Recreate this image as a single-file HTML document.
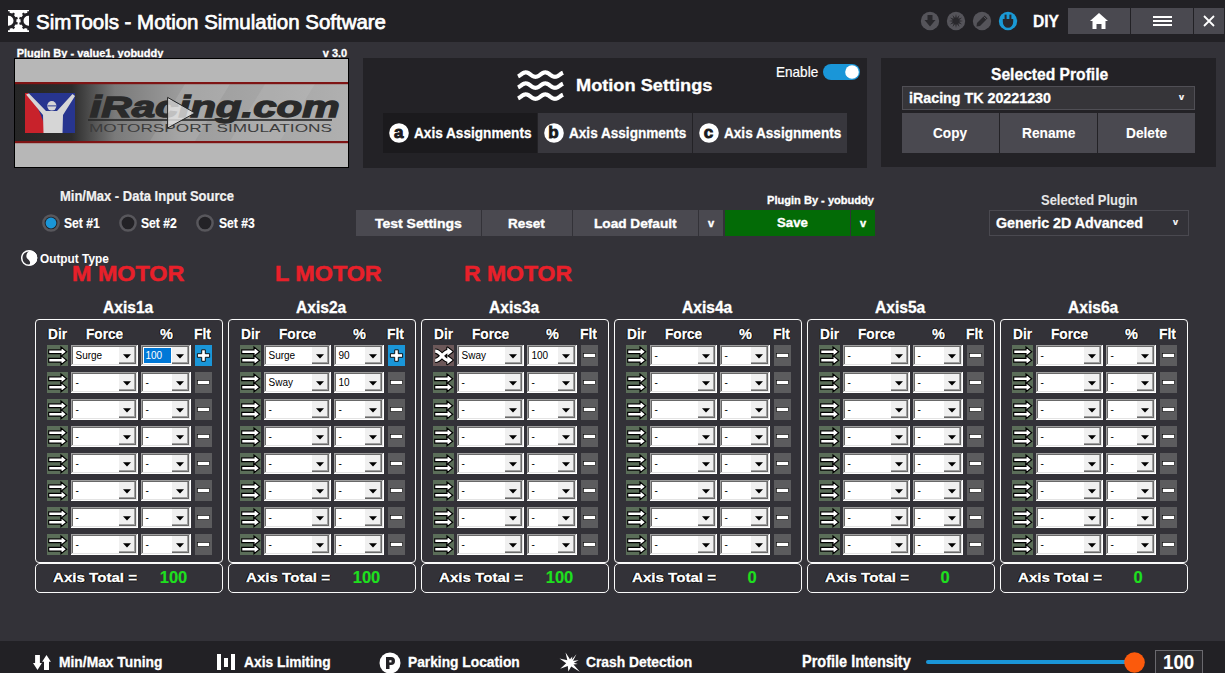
<!DOCTYPE html>
<html><head><meta charset="utf-8"><style>
html,body{margin:0;padding:0;}
body{width:1225px;height:673px;overflow:hidden;position:relative;background:#333238;font-family:"Liberation Sans",sans-serif;}
.a{position:absolute;}
.t{position:absolute;white-space:nowrap;line-height:1;font-weight:700;transform-origin:0 0;}
</style></head><body>
<div class="a" style="left:0px;top:0px;width:1225px;height:42px;background:#222125;"></div>
<svg class="a" style="left:8px;top:10px;" width="21" height="22" viewBox="0 0 21 22"><defs><clipPath id="lc"><rect width="21" height="22"/></clipPath></defs>
<rect width="21" height="22" fill="#fff"/>
<g clip-path="url(#lc)" fill="#222125">
<circle cx="0.5" cy="10.8" r="6.5" fill="none" stroke="#222125" stroke-width="3"/>
<circle cx="20.5" cy="10.8" r="6.5" fill="none" stroke="#222125" stroke-width="3"/>
<rect x="7.20" y="12.13" width="2.4" height="2.4" transform="rotate(17.8 8.40 13.33)"/><rect x="4.21" y="16.29" width="2.4" height="2.4" transform="rotate(53.8 5.41 17.49)"/><rect x="-0.67" y="17.90" width="2.4" height="2.4" transform="rotate(89.8 0.53 19.10)"/><rect x="-5.55" y="16.34" width="2.4" height="2.4" transform="rotate(125.8 -4.35 17.54)"/><rect x="-8.58" y="12.20" width="2.4" height="2.4" transform="rotate(161.8 -7.38 13.40)"/><rect x="-8.60" y="7.07" width="2.4" height="2.4" transform="rotate(197.8 -7.40 8.27)"/><rect x="-5.61" y="2.91" width="2.4" height="2.4" transform="rotate(233.8 -4.41 4.11)"/><rect x="-0.73" y="1.30" width="2.4" height="2.4" transform="rotate(269.8 0.47 2.50)"/><rect x="4.15" y="2.86" width="2.4" height="2.4" transform="rotate(305.8 5.35 4.06)"/><rect x="7.18" y="7.00" width="2.4" height="2.4" transform="rotate(341.8 8.38 8.20)"/><rect x="27.20" y="12.13" width="2.4" height="2.4" transform="rotate(17.8 28.40 13.33)"/><rect x="24.21" y="16.29" width="2.4" height="2.4" transform="rotate(53.8 25.41 17.49)"/><rect x="19.33" y="17.90" width="2.4" height="2.4" transform="rotate(89.8 20.53 19.10)"/><rect x="14.45" y="16.34" width="2.4" height="2.4" transform="rotate(125.8 15.65 17.54)"/><rect x="11.42" y="12.20" width="2.4" height="2.4" transform="rotate(161.8 12.62 13.40)"/><rect x="11.40" y="7.07" width="2.4" height="2.4" transform="rotate(197.8 12.60 8.27)"/><rect x="14.39" y="2.91" width="2.4" height="2.4" transform="rotate(233.8 15.59 4.11)"/><rect x="19.27" y="1.30" width="2.4" height="2.4" transform="rotate(269.8 20.47 2.50)"/><rect x="24.15" y="2.86" width="2.4" height="2.4" transform="rotate(305.8 25.35 4.06)"/><rect x="27.18" y="7.00" width="2.4" height="2.4" transform="rotate(341.8 28.38 8.20)"/>
</g></svg>
<div class="t" style="left:36.00px;top:11px;font-size:21px;color:#fff;font-weight:400;transform:scaleX(0.9736);-webkit-text-stroke:0.75px #fff;">SimTools - Motion Simulation Software</div>
<svg class="a" style="left:920px;top:11px;" width="20" height="20" viewBox="0 0 20 20"><circle cx="10" cy="10" r="9.2" fill="#55545a"/><path d="M7.5 4 H12.5 V9 H15.5 L10 15.5 L4.5 9 H7.5Z" fill="#29282c"/></svg>
<svg class="a" style="left:946px;top:11px;" width="20" height="20" viewBox="0 0 20 20"><circle cx="10" cy="10" r="9.2" fill="#55545a"/><polygon points="17.00,10.00 13.09,10.83 16.06,13.50 12.26,12.26 13.50,16.06 10.83,13.09 10.00,17.00 9.17,13.09 6.50,16.06 7.74,12.26 3.94,13.50 6.91,10.83 3.00,10.00 6.91,9.17 3.94,6.50 7.74,7.74 6.50,3.94 9.17,6.91 10.00,3.00 10.83,6.91 13.50,3.94 12.26,7.74 16.06,6.50 13.09,9.17" fill="#29282c"/></svg>
<svg class="a" style="left:972px;top:11px;" width="20" height="20" viewBox="0 0 20 20"><circle cx="10" cy="10" r="9.2" fill="#55545a"/><path d="M12.5 4.5 L15.5 7.5 L8 15 L4.5 15.5 L5 12Z" fill="#29282c"/><path d="M11.5 5.5 L14.5 8.5" stroke="#55545a" stroke-width="1"/></svg>
<svg class="a" style="left:998px;top:11px;" width="20" height="20" viewBox="0 0 20 20"><circle cx="10" cy="10" r="9.2" fill="#1a9ad6"/><path d="M4.8 8 H15.2 V10.5 A5.2 6 0 0 1 10 16.8 A5.2 6 0 0 1 4.8 10.5Z" fill="#29282c"/><rect x="6.6" y="3.6" width="2" height="5" fill="#29282c"/><rect x="11.4" y="3.6" width="2" height="5" fill="#29282c"/></svg>
<div class="t" style="left:1033.40px;top:13px;font-size:16.5px;color:#fff;transform:scaleX(0.9453);-webkit-text-stroke:0.3px #fff;">DIY</div>
<div class="a" style="left:1068px;top:8px;width:62px;height:26px;background:#4a4950;"></div>
<div class="a" style="left:1131px;top:8px;width:62px;height:26px;background:#4a4950;"></div>
<div class="a" style="left:1194px;top:8px;width:30px;height:26px;background:#4a4950;"></div>
<svg class="a" style="left:1089px;top:12px;" width="20" height="18" viewBox="0 0 20 18"><path d="M10 1 L19 9 H16.5 V17 H12.5 V12 H7.5 V17 H3.5 V9 H1Z" fill="#fff"/></svg>
<div class="a" style="left:1153px;top:16px;width:19px;height:2px;background:#fff;"></div>
<div class="a" style="left:1153px;top:20px;width:19px;height:2px;background:#fff;"></div>
<div class="a" style="left:1153px;top:24px;width:19px;height:2px;background:#fff;"></div>
<svg class="a" style="left:1202px;top:14px;" width="14" height="14" viewBox="0 0 14 14"><path d="M2 2 L12 12 M12 2 L2 12" stroke="#fff" stroke-width="1.8"/></svg>
<div class="t" style="left:16.70px;top:48px;font-size:11px;color:#fff;-webkit-text-stroke:0.3px #fff;">Plugin By - value1, yobuddy</div>
<div class="t" style="left:322.74px;top:48px;font-size:11px;color:#fff;-webkit-text-stroke:0.3px #fff;">v 3.0</div>
<div class="a" style="left:14px;top:58px;width:335px;height:110px;background:#000;"></div>
<svg class="a" style="left:15px;top:59px;" width="333" height="108" viewBox="0 0 333 108"><defs>
<linearGradient id="band" x1="0" x2="1" y1="0" y2="0">
<stop offset="0" stop-color="#262626"/><stop offset="0.17" stop-color="#2c2c2c"/><stop offset="0.3" stop-color="#7a7a7a"/>
<stop offset="0.5" stop-color="#9c9c9c"/><stop offset="0.75" stop-color="#a6a6a6"/><stop offset="1" stop-color="#b0b0b0"/></linearGradient>
</defs>
<rect width="333" height="108" fill="#b7b7b7"/>
<rect x="0" y="24" width="333" height="59" fill="url(#band)"/>
<path d="M170 25 L215 25 L180 82 L135 82Z" fill="#ffffff" opacity="0.10"/>
<path d="M250 25 L300 25 L265 82 L215 82Z" fill="#ffffff" opacity="0.08"/>
<rect x="0" y="23" width="333" height="2.2" fill="#7e1414"/>
<rect x="0" y="82" width="333" height="2.2" fill="#7e1414"/>
<rect x="10" y="34" width="50" height="40" fill="#27358f"/>
<path d="M10 34 H13 Q26 50 31.5 74 H10Z" fill="#c8222b"/>
<path d="M11 35.5 L14 34.5 L31 52 H42 L57.5 35 L60 37 L48 56 L47.5 74 H28.5 L28 56Z" fill="#d6d6d6"/>
<ellipse cx="36.8" cy="46.8" rx="4.6" ry="4.8" fill="#d6d6d6"/>
<rect x="32.5" y="46" width="9" height="1.6" fill="#27358f" opacity="0.6"/>
<text x="74.7" y="57.8" font-family="Liberation Sans" font-weight="700" font-style="italic" font-size="29" textLength="250" lengthAdjust="spacingAndGlyphs" fill="#2a2a2a" stroke="#2a2a2a" stroke-width="1.3">iRacing.com</text>
<rect x="73" y="60.2" width="244" height="1.6" fill="#2a2a2a"/>
<text x="74" y="72.8" font-family="Liberation Sans" font-size="10.8" textLength="243" lengthAdjust="spacingAndGlyphs" fill="#3c3c3c">MOTORSPORT SIMULATIONS</text>
<path d="M152.6 38.4 L180 54 L152.6 69Z" fill="#e6e6e6" fill-opacity="0.8" stroke="#222" stroke-width="1" stroke-linejoin="round"/>
</svg>
<div class="a" style="left:363px;top:58px;width:504px;height:110px;background:#232226;"></div>
<svg class="a" style="left:512px;top:62px;" width="56" height="46" viewBox="0 0 56 46"><polyline points="6.00,14.36 6.50,14.12 7.00,13.85 7.50,13.54 8.00,13.21 8.50,12.87 9.00,12.51 9.50,12.16 10.00,11.82 10.50,11.50 11.00,11.21 11.50,10.95 12.00,10.74 12.50,10.58 13.00,10.46 13.50,10.41 14.00,10.41 14.50,10.46 15.00,10.58 15.50,10.74 16.00,10.95 16.50,11.21 17.00,11.50 17.50,11.82 18.00,12.16 18.50,12.51 19.00,12.87 19.50,13.21 20.00,13.54 20.50,13.85 21.00,14.12 21.50,14.36 22.00,14.55 22.50,14.69 23.00,14.77 23.50,14.80 24.00,14.77 24.50,14.69 25.00,14.55 25.50,14.36 26.00,14.12 26.50,13.85 27.00,13.54 27.50,13.21 28.00,12.87 28.50,12.51 29.00,12.16 29.50,11.82 30.00,11.50 30.50,11.21 31.00,10.95 31.50,10.74 32.00,10.58 32.50,10.46 33.00,10.41 33.50,10.41 34.00,10.46 34.50,10.58 35.00,10.74 35.50,10.95 36.00,11.21 36.50,11.50 37.00,11.82 37.50,12.16 38.00,12.51 38.50,12.87 39.00,13.21 39.50,13.54 40.00,13.85 40.50,14.12 41.00,14.36 41.50,14.55 42.00,14.69 42.50,14.77 43.00,14.80 43.50,14.77 44.00,14.69 44.50,14.55 45.00,14.36 45.50,14.12 46.00,13.85 46.50,13.54 47.00,13.21 47.50,12.87 48.00,12.51 48.50,12.16 49.00,11.82 49.50,11.50 50.00,11.21 50.50,10.95 51.00,10.74" fill="none" stroke="#fff" stroke-width="4.2"/><polyline points="6.00,25.36 6.50,25.12 7.00,24.85 7.50,24.54 8.00,24.21 8.50,23.87 9.00,23.51 9.50,23.16 10.00,22.82 10.50,22.50 11.00,22.21 11.50,21.95 12.00,21.74 12.50,21.58 13.00,21.46 13.50,21.41 14.00,21.41 14.50,21.46 15.00,21.58 15.50,21.74 16.00,21.95 16.50,22.21 17.00,22.50 17.50,22.82 18.00,23.16 18.50,23.51 19.00,23.87 19.50,24.21 20.00,24.54 20.50,24.85 21.00,25.12 21.50,25.36 22.00,25.55 22.50,25.69 23.00,25.77 23.50,25.80 24.00,25.77 24.50,25.69 25.00,25.55 25.50,25.36 26.00,25.12 26.50,24.85 27.00,24.54 27.50,24.21 28.00,23.87 28.50,23.51 29.00,23.16 29.50,22.82 30.00,22.50 30.50,22.21 31.00,21.95 31.50,21.74 32.00,21.58 32.50,21.46 33.00,21.41 33.50,21.41 34.00,21.46 34.50,21.58 35.00,21.74 35.50,21.95 36.00,22.21 36.50,22.50 37.00,22.82 37.50,23.16 38.00,23.51 38.50,23.87 39.00,24.21 39.50,24.54 40.00,24.85 40.50,25.12 41.00,25.36 41.50,25.55 42.00,25.69 42.50,25.77 43.00,25.80 43.50,25.77 44.00,25.69 44.50,25.55 45.00,25.36 45.50,25.12 46.00,24.85 46.50,24.54 47.00,24.21 47.50,23.87 48.00,23.51 48.50,23.16 49.00,22.82 49.50,22.50 50.00,22.21 50.50,21.95 51.00,21.74" fill="none" stroke="#fff" stroke-width="4.2"/><polyline points="6.00,36.36 6.50,36.12 7.00,35.85 7.50,35.54 8.00,35.21 8.50,34.87 9.00,34.51 9.50,34.16 10.00,33.82 10.50,33.50 11.00,33.21 11.50,32.95 12.00,32.74 12.50,32.58 13.00,32.46 13.50,32.41 14.00,32.41 14.50,32.46 15.00,32.58 15.50,32.74 16.00,32.95 16.50,33.21 17.00,33.50 17.50,33.82 18.00,34.16 18.50,34.51 19.00,34.87 19.50,35.21 20.00,35.54 20.50,35.85 21.00,36.12 21.50,36.36 22.00,36.55 22.50,36.69 23.00,36.77 23.50,36.80 24.00,36.77 24.50,36.69 25.00,36.55 25.50,36.36 26.00,36.12 26.50,35.85 27.00,35.54 27.50,35.21 28.00,34.87 28.50,34.51 29.00,34.16 29.50,33.82 30.00,33.50 30.50,33.21 31.00,32.95 31.50,32.74 32.00,32.58 32.50,32.46 33.00,32.41 33.50,32.41 34.00,32.46 34.50,32.58 35.00,32.74 35.50,32.95 36.00,33.21 36.50,33.50 37.00,33.82 37.50,34.16 38.00,34.51 38.50,34.87 39.00,35.21 39.50,35.54 40.00,35.85 40.50,36.12 41.00,36.36 41.50,36.55 42.00,36.69 42.50,36.77 43.00,36.80 43.50,36.77 44.00,36.69 44.50,36.55 45.00,36.36 45.50,36.12 46.00,35.85 46.50,35.54 47.00,35.21 47.50,34.87 48.00,34.51 48.50,34.16 49.00,33.82 49.50,33.50 50.00,33.21 50.50,32.95 51.00,32.74" fill="none" stroke="#fff" stroke-width="4.2"/></svg>
<div class="t" style="left:576.00px;top:77px;font-size:16.5px;color:#fff;transform:scaleX(1.1024);-webkit-text-stroke:0.3px #fff;">Motion Settings</div>
<div class="t" style="left:775.90px;top:65px;font-size:14.5px;color:#fff;font-weight:400;transform:scaleX(0.9346);-webkit-text-stroke:0.2px #fff;">Enable</div>
<div class="a" style="left:823px;top:64px;width:37px;height:16px;background:#1a96d8;border-radius:8px;"></div>
<svg class="a" style="left:838px;top:64px;" width="22" height="16" viewBox="0 0 22 16"><circle cx="14" cy="8" r="6.8" fill="#fff"/></svg>
<div class="a" style="left:383px;top:113px;width:154px;height:40px;background:#1b1a1d;"></div>
<div class="a" style="left:538px;top:113px;width:154px;height:40px;background:#38373d;"></div>
<div class="a" style="left:693px;top:113px;width:154px;height:40px;background:#38373d;"></div>
<svg class="a" style="left:388.9px;top:123px;" width="20" height="20" viewBox="0 0 20 20"><circle cx="10" cy="10" r="9.8" fill="#fff"/></svg>
<div class="t" style="left:394.11px;top:124px;font-size:17px;color:#1b1a1d;-webkit-text-stroke:0.9px #1b1a1d;">a</div>
<svg class="a" style="left:543.5px;top:123px;" width="20" height="20" viewBox="0 0 20 20"><circle cx="10" cy="10" r="9.8" fill="#fff"/></svg>
<div class="t" style="left:548.31px;top:124px;font-size:17px;color:#1b1a1d;-webkit-text-stroke:0.9px #1b1a1d;">b</div>
<svg class="a" style="left:698.5px;top:123px;" width="20" height="20" viewBox="0 0 20 20"><circle cx="10" cy="10" r="9.8" fill="#fff"/></svg>
<div class="t" style="left:703.77px;top:124px;font-size:17px;color:#1b1a1d;-webkit-text-stroke:0.9px #1b1a1d;">c</div>
<div class="t" style="left:413.60px;top:126px;font-size:14.5px;color:#fff;transform:scaleX(0.9388);-webkit-text-stroke:0.3px #fff;">Axis Assignments</div>
<div class="t" style="left:568.80px;top:126px;font-size:14.5px;color:#fff;transform:scaleX(0.9364);-webkit-text-stroke:0.3px #fff;">Axis Assignments</div>
<div class="t" style="left:723.90px;top:126px;font-size:14.5px;color:#fff;transform:scaleX(0.9372);-webkit-text-stroke:0.3px #fff;">Axis Assignments</div>
<div class="a" style="left:881px;top:58px;width:335px;height:109px;background:#232226;"></div>
<div class="t" style="left:990.60px;top:67px;font-size:16px;color:#fff;transform:scaleX(0.9763);-webkit-text-stroke:0.3px #fff;">Selected Profile</div>
<div class="a" style="left:902px;top:86px;width:293px;height:24px;background:#363539;box-sizing:border-box;border:1px solid #504f55;"></div>
<div class="t" style="left:908.80px;top:91px;font-size:14.5px;color:#fff;transform:scaleX(0.9842);-webkit-text-stroke:0.3px #fff;">iRacing TK 20221230</div>
<div class="t" style="left:1178.90px;top:93px;font-size:9px;color:#fff;-webkit-text-stroke:0.2px #fff;">v</div>
<div class="a" style="left:902px;top:113px;width:97px;height:40px;background:#4a4950;"></div>
<div class="a" style="left:1000px;top:113px;width:97px;height:40px;background:#4a4950;"></div>
<div class="a" style="left:1098px;top:113px;width:97px;height:40px;background:#4a4950;"></div>
<div class="t" style="left:933.10px;top:126px;font-size:14.5px;color:#fff;transform:scaleX(0.9379);-webkit-text-stroke:0.1px #fff;">Copy</div>
<div class="t" style="left:1021.60px;top:126px;font-size:14.5px;color:#fff;transform:scaleX(0.9465);-webkit-text-stroke:0.1px #fff;">Rename</div>
<div class="t" style="left:1125.90px;top:126px;font-size:14.5px;color:#fff;transform:scaleX(0.9445);-webkit-text-stroke:0.1px #fff;">Delete</div>
<div class="t" style="left:59.80px;top:189px;font-size:14px;color:#f2f2f2;transform:scaleX(0.9282);-webkit-text-stroke:0.2px #f2f2f2;">Min/Max - Data Input Source</div>
<svg class="a" style="left:0px;top:0px;left:40.9px;top:213px;" width="20" height="20" viewBox="0 0 20 20"><circle cx="10" cy="10" r="7.6" fill="#232226" stroke="#58575c" stroke-width="2.5"/><circle cx="10" cy="10" r="5.4" fill="#1a96d8"/></svg>
<div class="t" style="left:64.30px;top:217px;font-size:13.75px;color:#fff;transform:scaleX(0.8838);-webkit-text-stroke:0.15px #fff;">Set #1</div>
<svg class="a" style="left:0px;top:0px;left:117.8px;top:213px;" width="20" height="20" viewBox="0 0 20 20"><circle cx="10" cy="10" r="7.6" fill="#232226" stroke="#58575c" stroke-width="2.5"/></svg>
<div class="t" style="left:141.30px;top:217px;font-size:13.75px;color:#fff;transform:scaleX(0.8838);-webkit-text-stroke:0.15px #fff;">Set #2</div>
<svg class="a" style="left:0px;top:0px;left:194.8px;top:213px;" width="20" height="20" viewBox="0 0 20 20"><circle cx="10" cy="10" r="7.6" fill="#232226" stroke="#58575c" stroke-width="2.5"/></svg>
<div class="t" style="left:219.00px;top:217px;font-size:13.75px;color:#fff;transform:scaleX(0.8838);-webkit-text-stroke:0.15px #fff;">Set #3</div>
<div class="a" style="left:356px;top:210px;width:125px;height:26px;background:#4a4950;"></div>
<div class="a" style="left:482px;top:210px;width:90px;height:26px;background:#4a4950;"></div>
<div class="a" style="left:573px;top:210px;width:125px;height:26px;background:#4a4950;"></div>
<div class="a" style="left:699px;top:210px;width:24px;height:26px;background:#4a4950;"></div>
<div class="a" style="left:725px;top:210px;width:125px;height:26px;background:#036b06;"></div>
<div class="a" style="left:851px;top:210px;width:24px;height:26px;background:#036b06;"></div>
<div class="t" style="left:375.00px;top:217px;font-size:13px;color:#fff;transform:scaleX(1.0761);-webkit-text-stroke:0.35px #fff;">Test Settings</div>
<div class="t" style="left:508.30px;top:217px;font-size:13px;color:#fff;transform:scaleX(1.0364);-webkit-text-stroke:0.35px #fff;">Reset</div>
<div class="t" style="left:594.00px;top:217px;font-size:13px;color:#fff;transform:scaleX(1.0492);-webkit-text-stroke:0.35px #fff;">Load Default</div>
<div class="t" style="left:707.94px;top:218px;font-size:11px;color:#fff;-webkit-text-stroke:0.4px #fff;">v</div>
<div class="t" style="left:776.90px;top:216px;font-size:13px;color:#fff;transform:scaleX(1.0147);-webkit-text-stroke:0.35px #fff;">Save</div>
<div class="t" style="left:859.94px;top:218px;font-size:11px;color:#fff;-webkit-text-stroke:0.4px #fff;">v</div>
<div class="t" style="left:766.80px;top:195px;font-size:11.5px;color:#fff;transform:scaleX(0.9625);-webkit-text-stroke:0.3px #fff;">Plugin By - yobuddy</div>
<div class="t" style="left:1041.30px;top:193px;font-size:14px;color:#e6e6e6;transform:scaleX(0.9248);-webkit-text-stroke:0.05px #e6e6e6;">Selected Plugin</div>
<div class="a" style="left:989px;top:210px;width:200px;height:26px;box-sizing:border-box;border:1px solid #4a4950;"></div>
<div class="t" style="left:995.60px;top:216px;font-size:14.5px;color:#fff;transform:scaleX(0.9836);-webkit-text-stroke:0.3px #fff;">Generic 2D Advanced</div>
<div class="t" style="left:1173.00px;top:218px;font-size:9px;color:#fff;-webkit-text-stroke:0.2px #fff;">v</div>
<svg class="a" style="left:20px;top:249px;" width="18" height="18" viewBox="0 0 18 18"><circle cx="9" cy="9" r="7.3" fill="none" stroke="#fff" stroke-width="1.5"/><path d="M9.5 1.8 A7.2 7.2 0 0 1 10.5 16.3 C13 14 12 11.5 9.5 10 C6.5 8 7.5 4 10 2.2Z" fill="#fff"/><path d="M9.5 1.8 A7.2 7.2 0 0 1 10.5 16.3 L9 16.3 C11 14 10 11.8 8 10.2 C5 8 6.5 3.5 9.5 1.8Z" fill="#fff"/></svg>
<div class="t" style="left:39.80px;top:252px;font-size:13px;color:#fff;transform:scaleX(0.9103);-webkit-text-stroke:0.05px #fff;">Output Type</div>
<div class="t" style="left:71.70px;top:263px;font-size:22px;color:#e8202a;transform:scaleX(1.0604);-webkit-text-stroke:0.5px #e8202a;">M MOTOR</div>
<div class="t" style="left:275.30px;top:263px;font-size:22px;color:#e8202a;transform:scaleX(1.0603);-webkit-text-stroke:0.5px #e8202a;">L MOTOR</div>
<div class="t" style="left:464.00px;top:263px;font-size:22px;color:#e8202a;transform:scaleX(1.0436);-webkit-text-stroke:0.5px #e8202a;">R MOTOR</div>
<div class="a" style="left:35px;top:319px;width:188px;height:244px;box-sizing:border-box;border:1px solid #fafafa;border-radius:4px;"></div>
<div class="a" style="left:35px;top:563px;width:188px;height:30px;box-sizing:border-box;border:1px solid #fafafa;border-radius:5px;"></div>
<div class="t" style="left:103.35px;top:299px;font-size:16.5px;color:#fff;transform:scaleX(0.9435);-webkit-text-stroke:0.3px #fff;">Axis1a</div>
<div class="t" style="left:47.90px;top:327px;font-size:14.5px;color:#fff;transform:scaleX(0.9434);-webkit-text-stroke:0.3px #fff;text-shadow:1px 0 #000,-1px 0 #000,0 1px #000,0 -1px #000;">Dir</div>
<div class="t" style="left:85.90px;top:327px;font-size:14.5px;color:#fff;transform:scaleX(0.9422);-webkit-text-stroke:0.3px #fff;text-shadow:1px 0 #000,-1px 0 #000,0 1px #000,0 -1px #000;">Force</div>
<div class="t" style="left:159.90px;top:327px;font-size:14.5px;color:#fff;-webkit-text-stroke:0.3px #fff;text-shadow:1px 0 #000,-1px 0 #000,0 1px #000,0 -1px #000;">%</div>
<div class="t" style="left:193.70px;top:327px;font-size:14.5px;color:#fff;transform:scaleX(0.9594);-webkit-text-stroke:0.3px #fff;text-shadow:1px 0 #000,-1px 0 #000,0 1px #000,0 -1px #000;">Flt</div>
<svg class="a" style="left:47px;top:345px;" width="21" height="21" viewBox="0 0 21 21"><rect width="21" height="21" fill="#5b6e59"/><g fill="#fff" stroke="#000" stroke-width="1.15" stroke-linejoin="miter" stroke-miterlimit="6">
<path d="M1.7 4.8 H14 V2 L19.7 6.7 L14 11.3 V8.6 H1.7Z"/>
<path d="M1.7 13.3 H14 V10.6 L19.7 15.2 L14 19.8 V17.1 H1.7Z"/></g></svg>
<div class="a" style="left:71px;top:345px;width:67px;height:21px;background:#fff;"></div>
<div class="a" style="left:71px;top:345px;width:66px;height:1px;background:#a0a0a0;"></div>
<div class="a" style="left:71px;top:345px;width:1px;height:20px;background:#a0a0a0;"></div>
<div class="a" style="left:72px;top:346px;width:64px;height:1px;background:#696969;"></div>
<div class="a" style="left:72px;top:346px;width:1px;height:18px;background:#696969;"></div>
<div class="a" style="left:72px;top:364px;width:65px;height:1px;background:#e3e3e3;"></div>
<div class="a" style="left:136px;top:346px;width:1px;height:19px;background:#e3e3e3;"></div>
<div class="a" style="left:119px;top:347px;width:17px;height:17px;background:#f0f0f0;"></div>
<div class="a" style="left:119px;top:363px;width:17px;height:1px;background:#696969;"></div>
<div class="a" style="left:135px;top:347px;width:1px;height:17px;background:#696969;"></div>
<div class="a" style="left:119px;top:362px;width:16px;height:1px;background:#a0a0a0;"></div>
<div class="a" style="left:134px;top:347px;width:1px;height:16px;background:#a0a0a0;"></div>
<svg class="a" style="left:123px;top:354px;" width="9" height="5" viewBox="0 0 9 5"><path d="M0 0.3 H8 L4 4.6Z" fill="#000"/></svg>
<div class="t" style="left:75.50px;top:351px;font-size:10px;color:#000;font-weight:400;">Surge</div>
<div class="a" style="left:141px;top:345px;width:50px;height:21px;background:#fff;"></div>
<div class="a" style="left:141px;top:345px;width:49px;height:1px;background:#a0a0a0;"></div>
<div class="a" style="left:141px;top:345px;width:1px;height:20px;background:#a0a0a0;"></div>
<div class="a" style="left:142px;top:346px;width:47px;height:1px;background:#696969;"></div>
<div class="a" style="left:142px;top:346px;width:1px;height:18px;background:#696969;"></div>
<div class="a" style="left:142px;top:364px;width:48px;height:1px;background:#e3e3e3;"></div>
<div class="a" style="left:189px;top:346px;width:1px;height:19px;background:#e3e3e3;"></div>
<div class="a" style="left:172px;top:347px;width:17px;height:17px;background:#f0f0f0;"></div>
<div class="a" style="left:172px;top:363px;width:17px;height:1px;background:#696969;"></div>
<div class="a" style="left:188px;top:347px;width:1px;height:17px;background:#696969;"></div>
<div class="a" style="left:172px;top:362px;width:16px;height:1px;background:#a0a0a0;"></div>
<div class="a" style="left:187px;top:347px;width:1px;height:16px;background:#a0a0a0;"></div>
<svg class="a" style="left:176px;top:354px;" width="9" height="5" viewBox="0 0 9 5"><path d="M0 0.3 H8 L4 4.6Z" fill="#000"/></svg>
<div class="a" style="left:144px;top:348px;width:27px;height:15px;background:#0078d7;"></div>
<div class="t" style="left:145.50px;top:351px;font-size:10px;color:#fff;font-weight:400;">100</div>
<svg class="a" style="left:195px;top:345px;" width="17" height="21" viewBox="0 0 17 21"><rect width="17" height="21" fill="#1a96d8"/><path d="M6.7 4.8 H10.3 V8.7 H14.6 V12.3 H10.3 V16.3 H6.7 V12.3 H2.4 V8.7 H6.7Z" fill="#fff" stroke="#000" stroke-width="0.9"/></svg>
<svg class="a" style="left:47px;top:372px;" width="21" height="21" viewBox="0 0 21 21"><rect width="21" height="21" fill="#5b6e59"/><g fill="#fff" stroke="#000" stroke-width="1.15" stroke-linejoin="miter" stroke-miterlimit="6">
<path d="M1.7 4.8 H14 V2 L19.7 6.7 L14 11.3 V8.6 H1.7Z"/>
<path d="M1.7 13.3 H14 V10.6 L19.7 15.2 L14 19.8 V17.1 H1.7Z"/></g></svg>
<div class="a" style="left:71px;top:372px;width:67px;height:21px;background:#fff;"></div>
<div class="a" style="left:71px;top:372px;width:66px;height:1px;background:#a0a0a0;"></div>
<div class="a" style="left:71px;top:372px;width:1px;height:20px;background:#a0a0a0;"></div>
<div class="a" style="left:72px;top:373px;width:64px;height:1px;background:#696969;"></div>
<div class="a" style="left:72px;top:373px;width:1px;height:18px;background:#696969;"></div>
<div class="a" style="left:72px;top:391px;width:65px;height:1px;background:#e3e3e3;"></div>
<div class="a" style="left:136px;top:373px;width:1px;height:19px;background:#e3e3e3;"></div>
<div class="a" style="left:119px;top:374px;width:17px;height:17px;background:#f0f0f0;"></div>
<div class="a" style="left:119px;top:390px;width:17px;height:1px;background:#696969;"></div>
<div class="a" style="left:135px;top:374px;width:1px;height:17px;background:#696969;"></div>
<div class="a" style="left:119px;top:389px;width:16px;height:1px;background:#a0a0a0;"></div>
<div class="a" style="left:134px;top:374px;width:1px;height:16px;background:#a0a0a0;"></div>
<svg class="a" style="left:123px;top:381px;" width="9" height="5" viewBox="0 0 9 5"><path d="M0 0.3 H8 L4 4.6Z" fill="#000"/></svg>
<div class="t" style="left:75.50px;top:378px;font-size:10px;color:#000;font-weight:400;">-</div>
<div class="a" style="left:141px;top:372px;width:50px;height:21px;background:#fff;"></div>
<div class="a" style="left:141px;top:372px;width:49px;height:1px;background:#a0a0a0;"></div>
<div class="a" style="left:141px;top:372px;width:1px;height:20px;background:#a0a0a0;"></div>
<div class="a" style="left:142px;top:373px;width:47px;height:1px;background:#696969;"></div>
<div class="a" style="left:142px;top:373px;width:1px;height:18px;background:#696969;"></div>
<div class="a" style="left:142px;top:391px;width:48px;height:1px;background:#e3e3e3;"></div>
<div class="a" style="left:189px;top:373px;width:1px;height:19px;background:#e3e3e3;"></div>
<div class="a" style="left:172px;top:374px;width:17px;height:17px;background:#f0f0f0;"></div>
<div class="a" style="left:172px;top:390px;width:17px;height:1px;background:#696969;"></div>
<div class="a" style="left:188px;top:374px;width:1px;height:17px;background:#696969;"></div>
<div class="a" style="left:172px;top:389px;width:16px;height:1px;background:#a0a0a0;"></div>
<div class="a" style="left:187px;top:374px;width:1px;height:16px;background:#a0a0a0;"></div>
<svg class="a" style="left:176px;top:381px;" width="9" height="5" viewBox="0 0 9 5"><path d="M0 0.3 H8 L4 4.6Z" fill="#000"/></svg>
<div class="t" style="left:145.50px;top:378px;font-size:10px;color:#000;font-weight:400;">-</div>
<svg class="a" style="left:195px;top:372px;" width="17" height="21" viewBox="0 0 17 21"><rect width="17" height="21" fill="#5c5c5e"/><rect x="2.5" y="8.5" width="12" height="4" fill="#fff" stroke="#000" stroke-width="0.6"/></svg>
<svg class="a" style="left:47px;top:399px;" width="21" height="21" viewBox="0 0 21 21"><rect width="21" height="21" fill="#5b6e59"/><g fill="#fff" stroke="#000" stroke-width="1.15" stroke-linejoin="miter" stroke-miterlimit="6">
<path d="M1.7 4.8 H14 V2 L19.7 6.7 L14 11.3 V8.6 H1.7Z"/>
<path d="M1.7 13.3 H14 V10.6 L19.7 15.2 L14 19.8 V17.1 H1.7Z"/></g></svg>
<div class="a" style="left:71px;top:399px;width:67px;height:21px;background:#fff;"></div>
<div class="a" style="left:71px;top:399px;width:66px;height:1px;background:#a0a0a0;"></div>
<div class="a" style="left:71px;top:399px;width:1px;height:20px;background:#a0a0a0;"></div>
<div class="a" style="left:72px;top:400px;width:64px;height:1px;background:#696969;"></div>
<div class="a" style="left:72px;top:400px;width:1px;height:18px;background:#696969;"></div>
<div class="a" style="left:72px;top:418px;width:65px;height:1px;background:#e3e3e3;"></div>
<div class="a" style="left:136px;top:400px;width:1px;height:19px;background:#e3e3e3;"></div>
<div class="a" style="left:119px;top:401px;width:17px;height:17px;background:#f0f0f0;"></div>
<div class="a" style="left:119px;top:417px;width:17px;height:1px;background:#696969;"></div>
<div class="a" style="left:135px;top:401px;width:1px;height:17px;background:#696969;"></div>
<div class="a" style="left:119px;top:416px;width:16px;height:1px;background:#a0a0a0;"></div>
<div class="a" style="left:134px;top:401px;width:1px;height:16px;background:#a0a0a0;"></div>
<svg class="a" style="left:123px;top:408px;" width="9" height="5" viewBox="0 0 9 5"><path d="M0 0.3 H8 L4 4.6Z" fill="#000"/></svg>
<div class="t" style="left:75.50px;top:405px;font-size:10px;color:#000;font-weight:400;">-</div>
<div class="a" style="left:141px;top:399px;width:50px;height:21px;background:#fff;"></div>
<div class="a" style="left:141px;top:399px;width:49px;height:1px;background:#a0a0a0;"></div>
<div class="a" style="left:141px;top:399px;width:1px;height:20px;background:#a0a0a0;"></div>
<div class="a" style="left:142px;top:400px;width:47px;height:1px;background:#696969;"></div>
<div class="a" style="left:142px;top:400px;width:1px;height:18px;background:#696969;"></div>
<div class="a" style="left:142px;top:418px;width:48px;height:1px;background:#e3e3e3;"></div>
<div class="a" style="left:189px;top:400px;width:1px;height:19px;background:#e3e3e3;"></div>
<div class="a" style="left:172px;top:401px;width:17px;height:17px;background:#f0f0f0;"></div>
<div class="a" style="left:172px;top:417px;width:17px;height:1px;background:#696969;"></div>
<div class="a" style="left:188px;top:401px;width:1px;height:17px;background:#696969;"></div>
<div class="a" style="left:172px;top:416px;width:16px;height:1px;background:#a0a0a0;"></div>
<div class="a" style="left:187px;top:401px;width:1px;height:16px;background:#a0a0a0;"></div>
<svg class="a" style="left:176px;top:408px;" width="9" height="5" viewBox="0 0 9 5"><path d="M0 0.3 H8 L4 4.6Z" fill="#000"/></svg>
<div class="t" style="left:145.50px;top:405px;font-size:10px;color:#000;font-weight:400;">-</div>
<svg class="a" style="left:195px;top:399px;" width="17" height="21" viewBox="0 0 17 21"><rect width="17" height="21" fill="#5c5c5e"/><rect x="2.5" y="8.5" width="12" height="4" fill="#fff" stroke="#000" stroke-width="0.6"/></svg>
<svg class="a" style="left:47px;top:426px;" width="21" height="21" viewBox="0 0 21 21"><rect width="21" height="21" fill="#5b6e59"/><g fill="#fff" stroke="#000" stroke-width="1.15" stroke-linejoin="miter" stroke-miterlimit="6">
<path d="M1.7 4.8 H14 V2 L19.7 6.7 L14 11.3 V8.6 H1.7Z"/>
<path d="M1.7 13.3 H14 V10.6 L19.7 15.2 L14 19.8 V17.1 H1.7Z"/></g></svg>
<div class="a" style="left:71px;top:426px;width:67px;height:21px;background:#fff;"></div>
<div class="a" style="left:71px;top:426px;width:66px;height:1px;background:#a0a0a0;"></div>
<div class="a" style="left:71px;top:426px;width:1px;height:20px;background:#a0a0a0;"></div>
<div class="a" style="left:72px;top:427px;width:64px;height:1px;background:#696969;"></div>
<div class="a" style="left:72px;top:427px;width:1px;height:18px;background:#696969;"></div>
<div class="a" style="left:72px;top:445px;width:65px;height:1px;background:#e3e3e3;"></div>
<div class="a" style="left:136px;top:427px;width:1px;height:19px;background:#e3e3e3;"></div>
<div class="a" style="left:119px;top:428px;width:17px;height:17px;background:#f0f0f0;"></div>
<div class="a" style="left:119px;top:444px;width:17px;height:1px;background:#696969;"></div>
<div class="a" style="left:135px;top:428px;width:1px;height:17px;background:#696969;"></div>
<div class="a" style="left:119px;top:443px;width:16px;height:1px;background:#a0a0a0;"></div>
<div class="a" style="left:134px;top:428px;width:1px;height:16px;background:#a0a0a0;"></div>
<svg class="a" style="left:123px;top:435px;" width="9" height="5" viewBox="0 0 9 5"><path d="M0 0.3 H8 L4 4.6Z" fill="#000"/></svg>
<div class="t" style="left:75.50px;top:432px;font-size:10px;color:#000;font-weight:400;">-</div>
<div class="a" style="left:141px;top:426px;width:50px;height:21px;background:#fff;"></div>
<div class="a" style="left:141px;top:426px;width:49px;height:1px;background:#a0a0a0;"></div>
<div class="a" style="left:141px;top:426px;width:1px;height:20px;background:#a0a0a0;"></div>
<div class="a" style="left:142px;top:427px;width:47px;height:1px;background:#696969;"></div>
<div class="a" style="left:142px;top:427px;width:1px;height:18px;background:#696969;"></div>
<div class="a" style="left:142px;top:445px;width:48px;height:1px;background:#e3e3e3;"></div>
<div class="a" style="left:189px;top:427px;width:1px;height:19px;background:#e3e3e3;"></div>
<div class="a" style="left:172px;top:428px;width:17px;height:17px;background:#f0f0f0;"></div>
<div class="a" style="left:172px;top:444px;width:17px;height:1px;background:#696969;"></div>
<div class="a" style="left:188px;top:428px;width:1px;height:17px;background:#696969;"></div>
<div class="a" style="left:172px;top:443px;width:16px;height:1px;background:#a0a0a0;"></div>
<div class="a" style="left:187px;top:428px;width:1px;height:16px;background:#a0a0a0;"></div>
<svg class="a" style="left:176px;top:435px;" width="9" height="5" viewBox="0 0 9 5"><path d="M0 0.3 H8 L4 4.6Z" fill="#000"/></svg>
<div class="t" style="left:145.50px;top:432px;font-size:10px;color:#000;font-weight:400;">-</div>
<svg class="a" style="left:195px;top:426px;" width="17" height="21" viewBox="0 0 17 21"><rect width="17" height="21" fill="#5c5c5e"/><rect x="2.5" y="8.5" width="12" height="4" fill="#fff" stroke="#000" stroke-width="0.6"/></svg>
<svg class="a" style="left:47px;top:453px;" width="21" height="21" viewBox="0 0 21 21"><rect width="21" height="21" fill="#5b6e59"/><g fill="#fff" stroke="#000" stroke-width="1.15" stroke-linejoin="miter" stroke-miterlimit="6">
<path d="M1.7 4.8 H14 V2 L19.7 6.7 L14 11.3 V8.6 H1.7Z"/>
<path d="M1.7 13.3 H14 V10.6 L19.7 15.2 L14 19.8 V17.1 H1.7Z"/></g></svg>
<div class="a" style="left:71px;top:453px;width:67px;height:21px;background:#fff;"></div>
<div class="a" style="left:71px;top:453px;width:66px;height:1px;background:#a0a0a0;"></div>
<div class="a" style="left:71px;top:453px;width:1px;height:20px;background:#a0a0a0;"></div>
<div class="a" style="left:72px;top:454px;width:64px;height:1px;background:#696969;"></div>
<div class="a" style="left:72px;top:454px;width:1px;height:18px;background:#696969;"></div>
<div class="a" style="left:72px;top:472px;width:65px;height:1px;background:#e3e3e3;"></div>
<div class="a" style="left:136px;top:454px;width:1px;height:19px;background:#e3e3e3;"></div>
<div class="a" style="left:119px;top:455px;width:17px;height:17px;background:#f0f0f0;"></div>
<div class="a" style="left:119px;top:471px;width:17px;height:1px;background:#696969;"></div>
<div class="a" style="left:135px;top:455px;width:1px;height:17px;background:#696969;"></div>
<div class="a" style="left:119px;top:470px;width:16px;height:1px;background:#a0a0a0;"></div>
<div class="a" style="left:134px;top:455px;width:1px;height:16px;background:#a0a0a0;"></div>
<svg class="a" style="left:123px;top:462px;" width="9" height="5" viewBox="0 0 9 5"><path d="M0 0.3 H8 L4 4.6Z" fill="#000"/></svg>
<div class="t" style="left:75.50px;top:459px;font-size:10px;color:#000;font-weight:400;">-</div>
<div class="a" style="left:141px;top:453px;width:50px;height:21px;background:#fff;"></div>
<div class="a" style="left:141px;top:453px;width:49px;height:1px;background:#a0a0a0;"></div>
<div class="a" style="left:141px;top:453px;width:1px;height:20px;background:#a0a0a0;"></div>
<div class="a" style="left:142px;top:454px;width:47px;height:1px;background:#696969;"></div>
<div class="a" style="left:142px;top:454px;width:1px;height:18px;background:#696969;"></div>
<div class="a" style="left:142px;top:472px;width:48px;height:1px;background:#e3e3e3;"></div>
<div class="a" style="left:189px;top:454px;width:1px;height:19px;background:#e3e3e3;"></div>
<div class="a" style="left:172px;top:455px;width:17px;height:17px;background:#f0f0f0;"></div>
<div class="a" style="left:172px;top:471px;width:17px;height:1px;background:#696969;"></div>
<div class="a" style="left:188px;top:455px;width:1px;height:17px;background:#696969;"></div>
<div class="a" style="left:172px;top:470px;width:16px;height:1px;background:#a0a0a0;"></div>
<div class="a" style="left:187px;top:455px;width:1px;height:16px;background:#a0a0a0;"></div>
<svg class="a" style="left:176px;top:462px;" width="9" height="5" viewBox="0 0 9 5"><path d="M0 0.3 H8 L4 4.6Z" fill="#000"/></svg>
<div class="t" style="left:145.50px;top:459px;font-size:10px;color:#000;font-weight:400;">-</div>
<svg class="a" style="left:195px;top:453px;" width="17" height="21" viewBox="0 0 17 21"><rect width="17" height="21" fill="#5c5c5e"/><rect x="2.5" y="8.5" width="12" height="4" fill="#fff" stroke="#000" stroke-width="0.6"/></svg>
<svg class="a" style="left:47px;top:480px;" width="21" height="21" viewBox="0 0 21 21"><rect width="21" height="21" fill="#5b6e59"/><g fill="#fff" stroke="#000" stroke-width="1.15" stroke-linejoin="miter" stroke-miterlimit="6">
<path d="M1.7 4.8 H14 V2 L19.7 6.7 L14 11.3 V8.6 H1.7Z"/>
<path d="M1.7 13.3 H14 V10.6 L19.7 15.2 L14 19.8 V17.1 H1.7Z"/></g></svg>
<div class="a" style="left:71px;top:480px;width:67px;height:21px;background:#fff;"></div>
<div class="a" style="left:71px;top:480px;width:66px;height:1px;background:#a0a0a0;"></div>
<div class="a" style="left:71px;top:480px;width:1px;height:20px;background:#a0a0a0;"></div>
<div class="a" style="left:72px;top:481px;width:64px;height:1px;background:#696969;"></div>
<div class="a" style="left:72px;top:481px;width:1px;height:18px;background:#696969;"></div>
<div class="a" style="left:72px;top:499px;width:65px;height:1px;background:#e3e3e3;"></div>
<div class="a" style="left:136px;top:481px;width:1px;height:19px;background:#e3e3e3;"></div>
<div class="a" style="left:119px;top:482px;width:17px;height:17px;background:#f0f0f0;"></div>
<div class="a" style="left:119px;top:498px;width:17px;height:1px;background:#696969;"></div>
<div class="a" style="left:135px;top:482px;width:1px;height:17px;background:#696969;"></div>
<div class="a" style="left:119px;top:497px;width:16px;height:1px;background:#a0a0a0;"></div>
<div class="a" style="left:134px;top:482px;width:1px;height:16px;background:#a0a0a0;"></div>
<svg class="a" style="left:123px;top:489px;" width="9" height="5" viewBox="0 0 9 5"><path d="M0 0.3 H8 L4 4.6Z" fill="#000"/></svg>
<div class="t" style="left:75.50px;top:486px;font-size:10px;color:#000;font-weight:400;">-</div>
<div class="a" style="left:141px;top:480px;width:50px;height:21px;background:#fff;"></div>
<div class="a" style="left:141px;top:480px;width:49px;height:1px;background:#a0a0a0;"></div>
<div class="a" style="left:141px;top:480px;width:1px;height:20px;background:#a0a0a0;"></div>
<div class="a" style="left:142px;top:481px;width:47px;height:1px;background:#696969;"></div>
<div class="a" style="left:142px;top:481px;width:1px;height:18px;background:#696969;"></div>
<div class="a" style="left:142px;top:499px;width:48px;height:1px;background:#e3e3e3;"></div>
<div class="a" style="left:189px;top:481px;width:1px;height:19px;background:#e3e3e3;"></div>
<div class="a" style="left:172px;top:482px;width:17px;height:17px;background:#f0f0f0;"></div>
<div class="a" style="left:172px;top:498px;width:17px;height:1px;background:#696969;"></div>
<div class="a" style="left:188px;top:482px;width:1px;height:17px;background:#696969;"></div>
<div class="a" style="left:172px;top:497px;width:16px;height:1px;background:#a0a0a0;"></div>
<div class="a" style="left:187px;top:482px;width:1px;height:16px;background:#a0a0a0;"></div>
<svg class="a" style="left:176px;top:489px;" width="9" height="5" viewBox="0 0 9 5"><path d="M0 0.3 H8 L4 4.6Z" fill="#000"/></svg>
<div class="t" style="left:145.50px;top:486px;font-size:10px;color:#000;font-weight:400;">-</div>
<svg class="a" style="left:195px;top:480px;" width="17" height="21" viewBox="0 0 17 21"><rect width="17" height="21" fill="#5c5c5e"/><rect x="2.5" y="8.5" width="12" height="4" fill="#fff" stroke="#000" stroke-width="0.6"/></svg>
<svg class="a" style="left:47px;top:507px;" width="21" height="21" viewBox="0 0 21 21"><rect width="21" height="21" fill="#5b6e59"/><g fill="#fff" stroke="#000" stroke-width="1.15" stroke-linejoin="miter" stroke-miterlimit="6">
<path d="M1.7 4.8 H14 V2 L19.7 6.7 L14 11.3 V8.6 H1.7Z"/>
<path d="M1.7 13.3 H14 V10.6 L19.7 15.2 L14 19.8 V17.1 H1.7Z"/></g></svg>
<div class="a" style="left:71px;top:507px;width:67px;height:21px;background:#fff;"></div>
<div class="a" style="left:71px;top:507px;width:66px;height:1px;background:#a0a0a0;"></div>
<div class="a" style="left:71px;top:507px;width:1px;height:20px;background:#a0a0a0;"></div>
<div class="a" style="left:72px;top:508px;width:64px;height:1px;background:#696969;"></div>
<div class="a" style="left:72px;top:508px;width:1px;height:18px;background:#696969;"></div>
<div class="a" style="left:72px;top:526px;width:65px;height:1px;background:#e3e3e3;"></div>
<div class="a" style="left:136px;top:508px;width:1px;height:19px;background:#e3e3e3;"></div>
<div class="a" style="left:119px;top:509px;width:17px;height:17px;background:#f0f0f0;"></div>
<div class="a" style="left:119px;top:525px;width:17px;height:1px;background:#696969;"></div>
<div class="a" style="left:135px;top:509px;width:1px;height:17px;background:#696969;"></div>
<div class="a" style="left:119px;top:524px;width:16px;height:1px;background:#a0a0a0;"></div>
<div class="a" style="left:134px;top:509px;width:1px;height:16px;background:#a0a0a0;"></div>
<svg class="a" style="left:123px;top:516px;" width="9" height="5" viewBox="0 0 9 5"><path d="M0 0.3 H8 L4 4.6Z" fill="#000"/></svg>
<div class="t" style="left:75.50px;top:513px;font-size:10px;color:#000;font-weight:400;">-</div>
<div class="a" style="left:141px;top:507px;width:50px;height:21px;background:#fff;"></div>
<div class="a" style="left:141px;top:507px;width:49px;height:1px;background:#a0a0a0;"></div>
<div class="a" style="left:141px;top:507px;width:1px;height:20px;background:#a0a0a0;"></div>
<div class="a" style="left:142px;top:508px;width:47px;height:1px;background:#696969;"></div>
<div class="a" style="left:142px;top:508px;width:1px;height:18px;background:#696969;"></div>
<div class="a" style="left:142px;top:526px;width:48px;height:1px;background:#e3e3e3;"></div>
<div class="a" style="left:189px;top:508px;width:1px;height:19px;background:#e3e3e3;"></div>
<div class="a" style="left:172px;top:509px;width:17px;height:17px;background:#f0f0f0;"></div>
<div class="a" style="left:172px;top:525px;width:17px;height:1px;background:#696969;"></div>
<div class="a" style="left:188px;top:509px;width:1px;height:17px;background:#696969;"></div>
<div class="a" style="left:172px;top:524px;width:16px;height:1px;background:#a0a0a0;"></div>
<div class="a" style="left:187px;top:509px;width:1px;height:16px;background:#a0a0a0;"></div>
<svg class="a" style="left:176px;top:516px;" width="9" height="5" viewBox="0 0 9 5"><path d="M0 0.3 H8 L4 4.6Z" fill="#000"/></svg>
<div class="t" style="left:145.50px;top:513px;font-size:10px;color:#000;font-weight:400;">-</div>
<svg class="a" style="left:195px;top:507px;" width="17" height="21" viewBox="0 0 17 21"><rect width="17" height="21" fill="#5c5c5e"/><rect x="2.5" y="8.5" width="12" height="4" fill="#fff" stroke="#000" stroke-width="0.6"/></svg>
<svg class="a" style="left:47px;top:534px;" width="21" height="21" viewBox="0 0 21 21"><rect width="21" height="21" fill="#5b6e59"/><g fill="#fff" stroke="#000" stroke-width="1.15" stroke-linejoin="miter" stroke-miterlimit="6">
<path d="M1.7 4.8 H14 V2 L19.7 6.7 L14 11.3 V8.6 H1.7Z"/>
<path d="M1.7 13.3 H14 V10.6 L19.7 15.2 L14 19.8 V17.1 H1.7Z"/></g></svg>
<div class="a" style="left:71px;top:534px;width:67px;height:21px;background:#fff;"></div>
<div class="a" style="left:71px;top:534px;width:66px;height:1px;background:#a0a0a0;"></div>
<div class="a" style="left:71px;top:534px;width:1px;height:20px;background:#a0a0a0;"></div>
<div class="a" style="left:72px;top:535px;width:64px;height:1px;background:#696969;"></div>
<div class="a" style="left:72px;top:535px;width:1px;height:18px;background:#696969;"></div>
<div class="a" style="left:72px;top:553px;width:65px;height:1px;background:#e3e3e3;"></div>
<div class="a" style="left:136px;top:535px;width:1px;height:19px;background:#e3e3e3;"></div>
<div class="a" style="left:119px;top:536px;width:17px;height:17px;background:#f0f0f0;"></div>
<div class="a" style="left:119px;top:552px;width:17px;height:1px;background:#696969;"></div>
<div class="a" style="left:135px;top:536px;width:1px;height:17px;background:#696969;"></div>
<div class="a" style="left:119px;top:551px;width:16px;height:1px;background:#a0a0a0;"></div>
<div class="a" style="left:134px;top:536px;width:1px;height:16px;background:#a0a0a0;"></div>
<svg class="a" style="left:123px;top:543px;" width="9" height="5" viewBox="0 0 9 5"><path d="M0 0.3 H8 L4 4.6Z" fill="#000"/></svg>
<div class="t" style="left:75.50px;top:540px;font-size:10px;color:#000;font-weight:400;">-</div>
<div class="a" style="left:141px;top:534px;width:50px;height:21px;background:#fff;"></div>
<div class="a" style="left:141px;top:534px;width:49px;height:1px;background:#a0a0a0;"></div>
<div class="a" style="left:141px;top:534px;width:1px;height:20px;background:#a0a0a0;"></div>
<div class="a" style="left:142px;top:535px;width:47px;height:1px;background:#696969;"></div>
<div class="a" style="left:142px;top:535px;width:1px;height:18px;background:#696969;"></div>
<div class="a" style="left:142px;top:553px;width:48px;height:1px;background:#e3e3e3;"></div>
<div class="a" style="left:189px;top:535px;width:1px;height:19px;background:#e3e3e3;"></div>
<div class="a" style="left:172px;top:536px;width:17px;height:17px;background:#f0f0f0;"></div>
<div class="a" style="left:172px;top:552px;width:17px;height:1px;background:#696969;"></div>
<div class="a" style="left:188px;top:536px;width:1px;height:17px;background:#696969;"></div>
<div class="a" style="left:172px;top:551px;width:16px;height:1px;background:#a0a0a0;"></div>
<div class="a" style="left:187px;top:536px;width:1px;height:16px;background:#a0a0a0;"></div>
<svg class="a" style="left:176px;top:543px;" width="9" height="5" viewBox="0 0 9 5"><path d="M0 0.3 H8 L4 4.6Z" fill="#000"/></svg>
<div class="t" style="left:145.50px;top:540px;font-size:10px;color:#000;font-weight:400;">-</div>
<svg class="a" style="left:195px;top:534px;" width="17" height="21" viewBox="0 0 17 21"><rect width="17" height="21" fill="#5c5c5e"/><rect x="2.5" y="8.5" width="12" height="4" fill="#fff" stroke="#000" stroke-width="0.6"/></svg>
<div class="t" style="left:53.20px;top:571px;font-size:13px;color:#fff;transform:scaleX(1.1609);-webkit-text-stroke:0.3px #fff;text-shadow:1px 0 #000,-1px 0 #000,0 1px #000,0 -1px #000;">Axis Total =</div>
<div class="t" style="left:159.74px;top:569px;font-size:16.5px;color:#1ee01e;-webkit-text-stroke:0.1px #1ee01e;">100</div>
<div class="a" style="left:228px;top:319px;width:188px;height:244px;box-sizing:border-box;border:1px solid #fafafa;border-radius:4px;"></div>
<div class="a" style="left:228px;top:563px;width:188px;height:30px;box-sizing:border-box;border:1px solid #fafafa;border-radius:5px;"></div>
<div class="t" style="left:296.35px;top:299px;font-size:16.5px;color:#fff;transform:scaleX(0.9435);-webkit-text-stroke:0.3px #fff;">Axis2a</div>
<div class="t" style="left:240.90px;top:327px;font-size:14.5px;color:#fff;transform:scaleX(0.9434);-webkit-text-stroke:0.3px #fff;text-shadow:1px 0 #000,-1px 0 #000,0 1px #000,0 -1px #000;">Dir</div>
<div class="t" style="left:278.90px;top:327px;font-size:14.5px;color:#fff;transform:scaleX(0.9422);-webkit-text-stroke:0.3px #fff;text-shadow:1px 0 #000,-1px 0 #000,0 1px #000,0 -1px #000;">Force</div>
<div class="t" style="left:352.90px;top:327px;font-size:14.5px;color:#fff;-webkit-text-stroke:0.3px #fff;text-shadow:1px 0 #000,-1px 0 #000,0 1px #000,0 -1px #000;">%</div>
<div class="t" style="left:386.70px;top:327px;font-size:14.5px;color:#fff;transform:scaleX(0.9594);-webkit-text-stroke:0.3px #fff;text-shadow:1px 0 #000,-1px 0 #000,0 1px #000,0 -1px #000;">Flt</div>
<svg class="a" style="left:240px;top:345px;" width="21" height="21" viewBox="0 0 21 21"><rect width="21" height="21" fill="#5b6e59"/><g fill="#fff" stroke="#000" stroke-width="1.15" stroke-linejoin="miter" stroke-miterlimit="6">
<path d="M1.7 4.8 H14 V2 L19.7 6.7 L14 11.3 V8.6 H1.7Z"/>
<path d="M1.7 13.3 H14 V10.6 L19.7 15.2 L14 19.8 V17.1 H1.7Z"/></g></svg>
<div class="a" style="left:264px;top:345px;width:67px;height:21px;background:#fff;"></div>
<div class="a" style="left:264px;top:345px;width:66px;height:1px;background:#a0a0a0;"></div>
<div class="a" style="left:264px;top:345px;width:1px;height:20px;background:#a0a0a0;"></div>
<div class="a" style="left:265px;top:346px;width:64px;height:1px;background:#696969;"></div>
<div class="a" style="left:265px;top:346px;width:1px;height:18px;background:#696969;"></div>
<div class="a" style="left:265px;top:364px;width:65px;height:1px;background:#e3e3e3;"></div>
<div class="a" style="left:329px;top:346px;width:1px;height:19px;background:#e3e3e3;"></div>
<div class="a" style="left:312px;top:347px;width:17px;height:17px;background:#f0f0f0;"></div>
<div class="a" style="left:312px;top:363px;width:17px;height:1px;background:#696969;"></div>
<div class="a" style="left:328px;top:347px;width:1px;height:17px;background:#696969;"></div>
<div class="a" style="left:312px;top:362px;width:16px;height:1px;background:#a0a0a0;"></div>
<div class="a" style="left:327px;top:347px;width:1px;height:16px;background:#a0a0a0;"></div>
<svg class="a" style="left:316px;top:354px;" width="9" height="5" viewBox="0 0 9 5"><path d="M0 0.3 H8 L4 4.6Z" fill="#000"/></svg>
<div class="t" style="left:268.50px;top:351px;font-size:10px;color:#000;font-weight:400;">Surge</div>
<div class="a" style="left:334px;top:345px;width:50px;height:21px;background:#fff;"></div>
<div class="a" style="left:334px;top:345px;width:49px;height:1px;background:#a0a0a0;"></div>
<div class="a" style="left:334px;top:345px;width:1px;height:20px;background:#a0a0a0;"></div>
<div class="a" style="left:335px;top:346px;width:47px;height:1px;background:#696969;"></div>
<div class="a" style="left:335px;top:346px;width:1px;height:18px;background:#696969;"></div>
<div class="a" style="left:335px;top:364px;width:48px;height:1px;background:#e3e3e3;"></div>
<div class="a" style="left:382px;top:346px;width:1px;height:19px;background:#e3e3e3;"></div>
<div class="a" style="left:365px;top:347px;width:17px;height:17px;background:#f0f0f0;"></div>
<div class="a" style="left:365px;top:363px;width:17px;height:1px;background:#696969;"></div>
<div class="a" style="left:381px;top:347px;width:1px;height:17px;background:#696969;"></div>
<div class="a" style="left:365px;top:362px;width:16px;height:1px;background:#a0a0a0;"></div>
<div class="a" style="left:380px;top:347px;width:1px;height:16px;background:#a0a0a0;"></div>
<svg class="a" style="left:369px;top:354px;" width="9" height="5" viewBox="0 0 9 5"><path d="M0 0.3 H8 L4 4.6Z" fill="#000"/></svg>
<div class="t" style="left:338.50px;top:351px;font-size:10px;color:#000;font-weight:400;">90</div>
<svg class="a" style="left:388px;top:345px;" width="17" height="21" viewBox="0 0 17 21"><rect width="17" height="21" fill="#1a96d8"/><path d="M6.7 4.8 H10.3 V8.7 H14.6 V12.3 H10.3 V16.3 H6.7 V12.3 H2.4 V8.7 H6.7Z" fill="#fff" stroke="#000" stroke-width="0.9"/></svg>
<svg class="a" style="left:240px;top:372px;" width="21" height="21" viewBox="0 0 21 21"><rect width="21" height="21" fill="#5b6e59"/><g fill="#fff" stroke="#000" stroke-width="1.15" stroke-linejoin="miter" stroke-miterlimit="6">
<path d="M1.7 4.8 H14 V2 L19.7 6.7 L14 11.3 V8.6 H1.7Z"/>
<path d="M1.7 13.3 H14 V10.6 L19.7 15.2 L14 19.8 V17.1 H1.7Z"/></g></svg>
<div class="a" style="left:264px;top:372px;width:67px;height:21px;background:#fff;"></div>
<div class="a" style="left:264px;top:372px;width:66px;height:1px;background:#a0a0a0;"></div>
<div class="a" style="left:264px;top:372px;width:1px;height:20px;background:#a0a0a0;"></div>
<div class="a" style="left:265px;top:373px;width:64px;height:1px;background:#696969;"></div>
<div class="a" style="left:265px;top:373px;width:1px;height:18px;background:#696969;"></div>
<div class="a" style="left:265px;top:391px;width:65px;height:1px;background:#e3e3e3;"></div>
<div class="a" style="left:329px;top:373px;width:1px;height:19px;background:#e3e3e3;"></div>
<div class="a" style="left:312px;top:374px;width:17px;height:17px;background:#f0f0f0;"></div>
<div class="a" style="left:312px;top:390px;width:17px;height:1px;background:#696969;"></div>
<div class="a" style="left:328px;top:374px;width:1px;height:17px;background:#696969;"></div>
<div class="a" style="left:312px;top:389px;width:16px;height:1px;background:#a0a0a0;"></div>
<div class="a" style="left:327px;top:374px;width:1px;height:16px;background:#a0a0a0;"></div>
<svg class="a" style="left:316px;top:381px;" width="9" height="5" viewBox="0 0 9 5"><path d="M0 0.3 H8 L4 4.6Z" fill="#000"/></svg>
<div class="t" style="left:268.50px;top:378px;font-size:10px;color:#000;font-weight:400;">Sway</div>
<div class="a" style="left:334px;top:372px;width:50px;height:21px;background:#fff;"></div>
<div class="a" style="left:334px;top:372px;width:49px;height:1px;background:#a0a0a0;"></div>
<div class="a" style="left:334px;top:372px;width:1px;height:20px;background:#a0a0a0;"></div>
<div class="a" style="left:335px;top:373px;width:47px;height:1px;background:#696969;"></div>
<div class="a" style="left:335px;top:373px;width:1px;height:18px;background:#696969;"></div>
<div class="a" style="left:335px;top:391px;width:48px;height:1px;background:#e3e3e3;"></div>
<div class="a" style="left:382px;top:373px;width:1px;height:19px;background:#e3e3e3;"></div>
<div class="a" style="left:365px;top:374px;width:17px;height:17px;background:#f0f0f0;"></div>
<div class="a" style="left:365px;top:390px;width:17px;height:1px;background:#696969;"></div>
<div class="a" style="left:381px;top:374px;width:1px;height:17px;background:#696969;"></div>
<div class="a" style="left:365px;top:389px;width:16px;height:1px;background:#a0a0a0;"></div>
<div class="a" style="left:380px;top:374px;width:1px;height:16px;background:#a0a0a0;"></div>
<svg class="a" style="left:369px;top:381px;" width="9" height="5" viewBox="0 0 9 5"><path d="M0 0.3 H8 L4 4.6Z" fill="#000"/></svg>
<div class="t" style="left:338.50px;top:378px;font-size:10px;color:#000;font-weight:400;">10</div>
<svg class="a" style="left:388px;top:372px;" width="17" height="21" viewBox="0 0 17 21"><rect width="17" height="21" fill="#5c5c5e"/><rect x="2.5" y="8.5" width="12" height="4" fill="#fff" stroke="#000" stroke-width="0.6"/></svg>
<svg class="a" style="left:240px;top:399px;" width="21" height="21" viewBox="0 0 21 21"><rect width="21" height="21" fill="#5b6e59"/><g fill="#fff" stroke="#000" stroke-width="1.15" stroke-linejoin="miter" stroke-miterlimit="6">
<path d="M1.7 4.8 H14 V2 L19.7 6.7 L14 11.3 V8.6 H1.7Z"/>
<path d="M1.7 13.3 H14 V10.6 L19.7 15.2 L14 19.8 V17.1 H1.7Z"/></g></svg>
<div class="a" style="left:264px;top:399px;width:67px;height:21px;background:#fff;"></div>
<div class="a" style="left:264px;top:399px;width:66px;height:1px;background:#a0a0a0;"></div>
<div class="a" style="left:264px;top:399px;width:1px;height:20px;background:#a0a0a0;"></div>
<div class="a" style="left:265px;top:400px;width:64px;height:1px;background:#696969;"></div>
<div class="a" style="left:265px;top:400px;width:1px;height:18px;background:#696969;"></div>
<div class="a" style="left:265px;top:418px;width:65px;height:1px;background:#e3e3e3;"></div>
<div class="a" style="left:329px;top:400px;width:1px;height:19px;background:#e3e3e3;"></div>
<div class="a" style="left:312px;top:401px;width:17px;height:17px;background:#f0f0f0;"></div>
<div class="a" style="left:312px;top:417px;width:17px;height:1px;background:#696969;"></div>
<div class="a" style="left:328px;top:401px;width:1px;height:17px;background:#696969;"></div>
<div class="a" style="left:312px;top:416px;width:16px;height:1px;background:#a0a0a0;"></div>
<div class="a" style="left:327px;top:401px;width:1px;height:16px;background:#a0a0a0;"></div>
<svg class="a" style="left:316px;top:408px;" width="9" height="5" viewBox="0 0 9 5"><path d="M0 0.3 H8 L4 4.6Z" fill="#000"/></svg>
<div class="t" style="left:268.50px;top:405px;font-size:10px;color:#000;font-weight:400;">-</div>
<div class="a" style="left:334px;top:399px;width:50px;height:21px;background:#fff;"></div>
<div class="a" style="left:334px;top:399px;width:49px;height:1px;background:#a0a0a0;"></div>
<div class="a" style="left:334px;top:399px;width:1px;height:20px;background:#a0a0a0;"></div>
<div class="a" style="left:335px;top:400px;width:47px;height:1px;background:#696969;"></div>
<div class="a" style="left:335px;top:400px;width:1px;height:18px;background:#696969;"></div>
<div class="a" style="left:335px;top:418px;width:48px;height:1px;background:#e3e3e3;"></div>
<div class="a" style="left:382px;top:400px;width:1px;height:19px;background:#e3e3e3;"></div>
<div class="a" style="left:365px;top:401px;width:17px;height:17px;background:#f0f0f0;"></div>
<div class="a" style="left:365px;top:417px;width:17px;height:1px;background:#696969;"></div>
<div class="a" style="left:381px;top:401px;width:1px;height:17px;background:#696969;"></div>
<div class="a" style="left:365px;top:416px;width:16px;height:1px;background:#a0a0a0;"></div>
<div class="a" style="left:380px;top:401px;width:1px;height:16px;background:#a0a0a0;"></div>
<svg class="a" style="left:369px;top:408px;" width="9" height="5" viewBox="0 0 9 5"><path d="M0 0.3 H8 L4 4.6Z" fill="#000"/></svg>
<div class="t" style="left:338.50px;top:405px;font-size:10px;color:#000;font-weight:400;">-</div>
<svg class="a" style="left:388px;top:399px;" width="17" height="21" viewBox="0 0 17 21"><rect width="17" height="21" fill="#5c5c5e"/><rect x="2.5" y="8.5" width="12" height="4" fill="#fff" stroke="#000" stroke-width="0.6"/></svg>
<svg class="a" style="left:240px;top:426px;" width="21" height="21" viewBox="0 0 21 21"><rect width="21" height="21" fill="#5b6e59"/><g fill="#fff" stroke="#000" stroke-width="1.15" stroke-linejoin="miter" stroke-miterlimit="6">
<path d="M1.7 4.8 H14 V2 L19.7 6.7 L14 11.3 V8.6 H1.7Z"/>
<path d="M1.7 13.3 H14 V10.6 L19.7 15.2 L14 19.8 V17.1 H1.7Z"/></g></svg>
<div class="a" style="left:264px;top:426px;width:67px;height:21px;background:#fff;"></div>
<div class="a" style="left:264px;top:426px;width:66px;height:1px;background:#a0a0a0;"></div>
<div class="a" style="left:264px;top:426px;width:1px;height:20px;background:#a0a0a0;"></div>
<div class="a" style="left:265px;top:427px;width:64px;height:1px;background:#696969;"></div>
<div class="a" style="left:265px;top:427px;width:1px;height:18px;background:#696969;"></div>
<div class="a" style="left:265px;top:445px;width:65px;height:1px;background:#e3e3e3;"></div>
<div class="a" style="left:329px;top:427px;width:1px;height:19px;background:#e3e3e3;"></div>
<div class="a" style="left:312px;top:428px;width:17px;height:17px;background:#f0f0f0;"></div>
<div class="a" style="left:312px;top:444px;width:17px;height:1px;background:#696969;"></div>
<div class="a" style="left:328px;top:428px;width:1px;height:17px;background:#696969;"></div>
<div class="a" style="left:312px;top:443px;width:16px;height:1px;background:#a0a0a0;"></div>
<div class="a" style="left:327px;top:428px;width:1px;height:16px;background:#a0a0a0;"></div>
<svg class="a" style="left:316px;top:435px;" width="9" height="5" viewBox="0 0 9 5"><path d="M0 0.3 H8 L4 4.6Z" fill="#000"/></svg>
<div class="t" style="left:268.50px;top:432px;font-size:10px;color:#000;font-weight:400;">-</div>
<div class="a" style="left:334px;top:426px;width:50px;height:21px;background:#fff;"></div>
<div class="a" style="left:334px;top:426px;width:49px;height:1px;background:#a0a0a0;"></div>
<div class="a" style="left:334px;top:426px;width:1px;height:20px;background:#a0a0a0;"></div>
<div class="a" style="left:335px;top:427px;width:47px;height:1px;background:#696969;"></div>
<div class="a" style="left:335px;top:427px;width:1px;height:18px;background:#696969;"></div>
<div class="a" style="left:335px;top:445px;width:48px;height:1px;background:#e3e3e3;"></div>
<div class="a" style="left:382px;top:427px;width:1px;height:19px;background:#e3e3e3;"></div>
<div class="a" style="left:365px;top:428px;width:17px;height:17px;background:#f0f0f0;"></div>
<div class="a" style="left:365px;top:444px;width:17px;height:1px;background:#696969;"></div>
<div class="a" style="left:381px;top:428px;width:1px;height:17px;background:#696969;"></div>
<div class="a" style="left:365px;top:443px;width:16px;height:1px;background:#a0a0a0;"></div>
<div class="a" style="left:380px;top:428px;width:1px;height:16px;background:#a0a0a0;"></div>
<svg class="a" style="left:369px;top:435px;" width="9" height="5" viewBox="0 0 9 5"><path d="M0 0.3 H8 L4 4.6Z" fill="#000"/></svg>
<div class="t" style="left:338.50px;top:432px;font-size:10px;color:#000;font-weight:400;">-</div>
<svg class="a" style="left:388px;top:426px;" width="17" height="21" viewBox="0 0 17 21"><rect width="17" height="21" fill="#5c5c5e"/><rect x="2.5" y="8.5" width="12" height="4" fill="#fff" stroke="#000" stroke-width="0.6"/></svg>
<svg class="a" style="left:240px;top:453px;" width="21" height="21" viewBox="0 0 21 21"><rect width="21" height="21" fill="#5b6e59"/><g fill="#fff" stroke="#000" stroke-width="1.15" stroke-linejoin="miter" stroke-miterlimit="6">
<path d="M1.7 4.8 H14 V2 L19.7 6.7 L14 11.3 V8.6 H1.7Z"/>
<path d="M1.7 13.3 H14 V10.6 L19.7 15.2 L14 19.8 V17.1 H1.7Z"/></g></svg>
<div class="a" style="left:264px;top:453px;width:67px;height:21px;background:#fff;"></div>
<div class="a" style="left:264px;top:453px;width:66px;height:1px;background:#a0a0a0;"></div>
<div class="a" style="left:264px;top:453px;width:1px;height:20px;background:#a0a0a0;"></div>
<div class="a" style="left:265px;top:454px;width:64px;height:1px;background:#696969;"></div>
<div class="a" style="left:265px;top:454px;width:1px;height:18px;background:#696969;"></div>
<div class="a" style="left:265px;top:472px;width:65px;height:1px;background:#e3e3e3;"></div>
<div class="a" style="left:329px;top:454px;width:1px;height:19px;background:#e3e3e3;"></div>
<div class="a" style="left:312px;top:455px;width:17px;height:17px;background:#f0f0f0;"></div>
<div class="a" style="left:312px;top:471px;width:17px;height:1px;background:#696969;"></div>
<div class="a" style="left:328px;top:455px;width:1px;height:17px;background:#696969;"></div>
<div class="a" style="left:312px;top:470px;width:16px;height:1px;background:#a0a0a0;"></div>
<div class="a" style="left:327px;top:455px;width:1px;height:16px;background:#a0a0a0;"></div>
<svg class="a" style="left:316px;top:462px;" width="9" height="5" viewBox="0 0 9 5"><path d="M0 0.3 H8 L4 4.6Z" fill="#000"/></svg>
<div class="t" style="left:268.50px;top:459px;font-size:10px;color:#000;font-weight:400;">-</div>
<div class="a" style="left:334px;top:453px;width:50px;height:21px;background:#fff;"></div>
<div class="a" style="left:334px;top:453px;width:49px;height:1px;background:#a0a0a0;"></div>
<div class="a" style="left:334px;top:453px;width:1px;height:20px;background:#a0a0a0;"></div>
<div class="a" style="left:335px;top:454px;width:47px;height:1px;background:#696969;"></div>
<div class="a" style="left:335px;top:454px;width:1px;height:18px;background:#696969;"></div>
<div class="a" style="left:335px;top:472px;width:48px;height:1px;background:#e3e3e3;"></div>
<div class="a" style="left:382px;top:454px;width:1px;height:19px;background:#e3e3e3;"></div>
<div class="a" style="left:365px;top:455px;width:17px;height:17px;background:#f0f0f0;"></div>
<div class="a" style="left:365px;top:471px;width:17px;height:1px;background:#696969;"></div>
<div class="a" style="left:381px;top:455px;width:1px;height:17px;background:#696969;"></div>
<div class="a" style="left:365px;top:470px;width:16px;height:1px;background:#a0a0a0;"></div>
<div class="a" style="left:380px;top:455px;width:1px;height:16px;background:#a0a0a0;"></div>
<svg class="a" style="left:369px;top:462px;" width="9" height="5" viewBox="0 0 9 5"><path d="M0 0.3 H8 L4 4.6Z" fill="#000"/></svg>
<div class="t" style="left:338.50px;top:459px;font-size:10px;color:#000;font-weight:400;">-</div>
<svg class="a" style="left:388px;top:453px;" width="17" height="21" viewBox="0 0 17 21"><rect width="17" height="21" fill="#5c5c5e"/><rect x="2.5" y="8.5" width="12" height="4" fill="#fff" stroke="#000" stroke-width="0.6"/></svg>
<svg class="a" style="left:240px;top:480px;" width="21" height="21" viewBox="0 0 21 21"><rect width="21" height="21" fill="#5b6e59"/><g fill="#fff" stroke="#000" stroke-width="1.15" stroke-linejoin="miter" stroke-miterlimit="6">
<path d="M1.7 4.8 H14 V2 L19.7 6.7 L14 11.3 V8.6 H1.7Z"/>
<path d="M1.7 13.3 H14 V10.6 L19.7 15.2 L14 19.8 V17.1 H1.7Z"/></g></svg>
<div class="a" style="left:264px;top:480px;width:67px;height:21px;background:#fff;"></div>
<div class="a" style="left:264px;top:480px;width:66px;height:1px;background:#a0a0a0;"></div>
<div class="a" style="left:264px;top:480px;width:1px;height:20px;background:#a0a0a0;"></div>
<div class="a" style="left:265px;top:481px;width:64px;height:1px;background:#696969;"></div>
<div class="a" style="left:265px;top:481px;width:1px;height:18px;background:#696969;"></div>
<div class="a" style="left:265px;top:499px;width:65px;height:1px;background:#e3e3e3;"></div>
<div class="a" style="left:329px;top:481px;width:1px;height:19px;background:#e3e3e3;"></div>
<div class="a" style="left:312px;top:482px;width:17px;height:17px;background:#f0f0f0;"></div>
<div class="a" style="left:312px;top:498px;width:17px;height:1px;background:#696969;"></div>
<div class="a" style="left:328px;top:482px;width:1px;height:17px;background:#696969;"></div>
<div class="a" style="left:312px;top:497px;width:16px;height:1px;background:#a0a0a0;"></div>
<div class="a" style="left:327px;top:482px;width:1px;height:16px;background:#a0a0a0;"></div>
<svg class="a" style="left:316px;top:489px;" width="9" height="5" viewBox="0 0 9 5"><path d="M0 0.3 H8 L4 4.6Z" fill="#000"/></svg>
<div class="t" style="left:268.50px;top:486px;font-size:10px;color:#000;font-weight:400;">-</div>
<div class="a" style="left:334px;top:480px;width:50px;height:21px;background:#fff;"></div>
<div class="a" style="left:334px;top:480px;width:49px;height:1px;background:#a0a0a0;"></div>
<div class="a" style="left:334px;top:480px;width:1px;height:20px;background:#a0a0a0;"></div>
<div class="a" style="left:335px;top:481px;width:47px;height:1px;background:#696969;"></div>
<div class="a" style="left:335px;top:481px;width:1px;height:18px;background:#696969;"></div>
<div class="a" style="left:335px;top:499px;width:48px;height:1px;background:#e3e3e3;"></div>
<div class="a" style="left:382px;top:481px;width:1px;height:19px;background:#e3e3e3;"></div>
<div class="a" style="left:365px;top:482px;width:17px;height:17px;background:#f0f0f0;"></div>
<div class="a" style="left:365px;top:498px;width:17px;height:1px;background:#696969;"></div>
<div class="a" style="left:381px;top:482px;width:1px;height:17px;background:#696969;"></div>
<div class="a" style="left:365px;top:497px;width:16px;height:1px;background:#a0a0a0;"></div>
<div class="a" style="left:380px;top:482px;width:1px;height:16px;background:#a0a0a0;"></div>
<svg class="a" style="left:369px;top:489px;" width="9" height="5" viewBox="0 0 9 5"><path d="M0 0.3 H8 L4 4.6Z" fill="#000"/></svg>
<div class="t" style="left:338.50px;top:486px;font-size:10px;color:#000;font-weight:400;">-</div>
<svg class="a" style="left:388px;top:480px;" width="17" height="21" viewBox="0 0 17 21"><rect width="17" height="21" fill="#5c5c5e"/><rect x="2.5" y="8.5" width="12" height="4" fill="#fff" stroke="#000" stroke-width="0.6"/></svg>
<svg class="a" style="left:240px;top:507px;" width="21" height="21" viewBox="0 0 21 21"><rect width="21" height="21" fill="#5b6e59"/><g fill="#fff" stroke="#000" stroke-width="1.15" stroke-linejoin="miter" stroke-miterlimit="6">
<path d="M1.7 4.8 H14 V2 L19.7 6.7 L14 11.3 V8.6 H1.7Z"/>
<path d="M1.7 13.3 H14 V10.6 L19.7 15.2 L14 19.8 V17.1 H1.7Z"/></g></svg>
<div class="a" style="left:264px;top:507px;width:67px;height:21px;background:#fff;"></div>
<div class="a" style="left:264px;top:507px;width:66px;height:1px;background:#a0a0a0;"></div>
<div class="a" style="left:264px;top:507px;width:1px;height:20px;background:#a0a0a0;"></div>
<div class="a" style="left:265px;top:508px;width:64px;height:1px;background:#696969;"></div>
<div class="a" style="left:265px;top:508px;width:1px;height:18px;background:#696969;"></div>
<div class="a" style="left:265px;top:526px;width:65px;height:1px;background:#e3e3e3;"></div>
<div class="a" style="left:329px;top:508px;width:1px;height:19px;background:#e3e3e3;"></div>
<div class="a" style="left:312px;top:509px;width:17px;height:17px;background:#f0f0f0;"></div>
<div class="a" style="left:312px;top:525px;width:17px;height:1px;background:#696969;"></div>
<div class="a" style="left:328px;top:509px;width:1px;height:17px;background:#696969;"></div>
<div class="a" style="left:312px;top:524px;width:16px;height:1px;background:#a0a0a0;"></div>
<div class="a" style="left:327px;top:509px;width:1px;height:16px;background:#a0a0a0;"></div>
<svg class="a" style="left:316px;top:516px;" width="9" height="5" viewBox="0 0 9 5"><path d="M0 0.3 H8 L4 4.6Z" fill="#000"/></svg>
<div class="t" style="left:268.50px;top:513px;font-size:10px;color:#000;font-weight:400;">-</div>
<div class="a" style="left:334px;top:507px;width:50px;height:21px;background:#fff;"></div>
<div class="a" style="left:334px;top:507px;width:49px;height:1px;background:#a0a0a0;"></div>
<div class="a" style="left:334px;top:507px;width:1px;height:20px;background:#a0a0a0;"></div>
<div class="a" style="left:335px;top:508px;width:47px;height:1px;background:#696969;"></div>
<div class="a" style="left:335px;top:508px;width:1px;height:18px;background:#696969;"></div>
<div class="a" style="left:335px;top:526px;width:48px;height:1px;background:#e3e3e3;"></div>
<div class="a" style="left:382px;top:508px;width:1px;height:19px;background:#e3e3e3;"></div>
<div class="a" style="left:365px;top:509px;width:17px;height:17px;background:#f0f0f0;"></div>
<div class="a" style="left:365px;top:525px;width:17px;height:1px;background:#696969;"></div>
<div class="a" style="left:381px;top:509px;width:1px;height:17px;background:#696969;"></div>
<div class="a" style="left:365px;top:524px;width:16px;height:1px;background:#a0a0a0;"></div>
<div class="a" style="left:380px;top:509px;width:1px;height:16px;background:#a0a0a0;"></div>
<svg class="a" style="left:369px;top:516px;" width="9" height="5" viewBox="0 0 9 5"><path d="M0 0.3 H8 L4 4.6Z" fill="#000"/></svg>
<div class="t" style="left:338.50px;top:513px;font-size:10px;color:#000;font-weight:400;">-</div>
<svg class="a" style="left:388px;top:507px;" width="17" height="21" viewBox="0 0 17 21"><rect width="17" height="21" fill="#5c5c5e"/><rect x="2.5" y="8.5" width="12" height="4" fill="#fff" stroke="#000" stroke-width="0.6"/></svg>
<svg class="a" style="left:240px;top:534px;" width="21" height="21" viewBox="0 0 21 21"><rect width="21" height="21" fill="#5b6e59"/><g fill="#fff" stroke="#000" stroke-width="1.15" stroke-linejoin="miter" stroke-miterlimit="6">
<path d="M1.7 4.8 H14 V2 L19.7 6.7 L14 11.3 V8.6 H1.7Z"/>
<path d="M1.7 13.3 H14 V10.6 L19.7 15.2 L14 19.8 V17.1 H1.7Z"/></g></svg>
<div class="a" style="left:264px;top:534px;width:67px;height:21px;background:#fff;"></div>
<div class="a" style="left:264px;top:534px;width:66px;height:1px;background:#a0a0a0;"></div>
<div class="a" style="left:264px;top:534px;width:1px;height:20px;background:#a0a0a0;"></div>
<div class="a" style="left:265px;top:535px;width:64px;height:1px;background:#696969;"></div>
<div class="a" style="left:265px;top:535px;width:1px;height:18px;background:#696969;"></div>
<div class="a" style="left:265px;top:553px;width:65px;height:1px;background:#e3e3e3;"></div>
<div class="a" style="left:329px;top:535px;width:1px;height:19px;background:#e3e3e3;"></div>
<div class="a" style="left:312px;top:536px;width:17px;height:17px;background:#f0f0f0;"></div>
<div class="a" style="left:312px;top:552px;width:17px;height:1px;background:#696969;"></div>
<div class="a" style="left:328px;top:536px;width:1px;height:17px;background:#696969;"></div>
<div class="a" style="left:312px;top:551px;width:16px;height:1px;background:#a0a0a0;"></div>
<div class="a" style="left:327px;top:536px;width:1px;height:16px;background:#a0a0a0;"></div>
<svg class="a" style="left:316px;top:543px;" width="9" height="5" viewBox="0 0 9 5"><path d="M0 0.3 H8 L4 4.6Z" fill="#000"/></svg>
<div class="t" style="left:268.50px;top:540px;font-size:10px;color:#000;font-weight:400;">-</div>
<div class="a" style="left:334px;top:534px;width:50px;height:21px;background:#fff;"></div>
<div class="a" style="left:334px;top:534px;width:49px;height:1px;background:#a0a0a0;"></div>
<div class="a" style="left:334px;top:534px;width:1px;height:20px;background:#a0a0a0;"></div>
<div class="a" style="left:335px;top:535px;width:47px;height:1px;background:#696969;"></div>
<div class="a" style="left:335px;top:535px;width:1px;height:18px;background:#696969;"></div>
<div class="a" style="left:335px;top:553px;width:48px;height:1px;background:#e3e3e3;"></div>
<div class="a" style="left:382px;top:535px;width:1px;height:19px;background:#e3e3e3;"></div>
<div class="a" style="left:365px;top:536px;width:17px;height:17px;background:#f0f0f0;"></div>
<div class="a" style="left:365px;top:552px;width:17px;height:1px;background:#696969;"></div>
<div class="a" style="left:381px;top:536px;width:1px;height:17px;background:#696969;"></div>
<div class="a" style="left:365px;top:551px;width:16px;height:1px;background:#a0a0a0;"></div>
<div class="a" style="left:380px;top:536px;width:1px;height:16px;background:#a0a0a0;"></div>
<svg class="a" style="left:369px;top:543px;" width="9" height="5" viewBox="0 0 9 5"><path d="M0 0.3 H8 L4 4.6Z" fill="#000"/></svg>
<div class="t" style="left:338.50px;top:540px;font-size:10px;color:#000;font-weight:400;">-</div>
<svg class="a" style="left:388px;top:534px;" width="17" height="21" viewBox="0 0 17 21"><rect width="17" height="21" fill="#5c5c5e"/><rect x="2.5" y="8.5" width="12" height="4" fill="#fff" stroke="#000" stroke-width="0.6"/></svg>
<div class="t" style="left:246.20px;top:571px;font-size:13px;color:#fff;transform:scaleX(1.1609);-webkit-text-stroke:0.3px #fff;text-shadow:1px 0 #000,-1px 0 #000,0 1px #000,0 -1px #000;">Axis Total =</div>
<div class="t" style="left:352.74px;top:569px;font-size:16.5px;color:#1ee01e;-webkit-text-stroke:0.1px #1ee01e;">100</div>
<div class="a" style="left:421px;top:319px;width:188px;height:244px;box-sizing:border-box;border:1px solid #fafafa;border-radius:4px;"></div>
<div class="a" style="left:421px;top:563px;width:188px;height:30px;box-sizing:border-box;border:1px solid #fafafa;border-radius:5px;"></div>
<div class="t" style="left:489.35px;top:299px;font-size:16.5px;color:#fff;transform:scaleX(0.9435);-webkit-text-stroke:0.3px #fff;">Axis3a</div>
<div class="t" style="left:433.90px;top:327px;font-size:14.5px;color:#fff;transform:scaleX(0.9434);-webkit-text-stroke:0.3px #fff;text-shadow:1px 0 #000,-1px 0 #000,0 1px #000,0 -1px #000;">Dir</div>
<div class="t" style="left:471.90px;top:327px;font-size:14.5px;color:#fff;transform:scaleX(0.9422);-webkit-text-stroke:0.3px #fff;text-shadow:1px 0 #000,-1px 0 #000,0 1px #000,0 -1px #000;">Force</div>
<div class="t" style="left:545.90px;top:327px;font-size:14.5px;color:#fff;-webkit-text-stroke:0.3px #fff;text-shadow:1px 0 #000,-1px 0 #000,0 1px #000,0 -1px #000;">%</div>
<div class="t" style="left:579.70px;top:327px;font-size:14.5px;color:#fff;transform:scaleX(0.9594);-webkit-text-stroke:0.3px #fff;text-shadow:1px 0 #000,-1px 0 #000,0 1px #000,0 -1px #000;">Flt</div>
<svg class="a" style="left:433px;top:345px;" width="21" height="21" viewBox="0 0 21 21"><rect width="21" height="21" fill="#6c5859"/>
<g fill="none" stroke="#000" stroke-width="5.4"><path d="M2.2 6.2 C8 6.2, 10 15.1, 15 15.1"/><path d="M2.2 15.4 C8 15.4, 10 6.6, 15 6.6"/></g>
<g fill="#000" stroke="#000" stroke-width="2" stroke-linejoin="round"><path d="M14.3 2.4 L19.7 6.6 L14.3 10.8Z"/><path d="M14.3 10.9 L19.7 15.1 L14.3 19.3Z"/></g>
<g fill="none" stroke="#fff" stroke-width="3.2"><path d="M2.2 6.2 C8 6.2, 10 15.1, 15 15.1"/><path d="M2.2 15.4 C8 15.4, 10 6.6, 15 6.6"/></g>
<g fill="#fff"><path d="M14.3 2.4 L19.7 6.6 L14.3 10.8Z"/><path d="M14.3 10.9 L19.7 15.1 L14.3 19.3Z"/></g></svg>
<div class="a" style="left:457px;top:345px;width:67px;height:21px;background:#fff;"></div>
<div class="a" style="left:457px;top:345px;width:66px;height:1px;background:#a0a0a0;"></div>
<div class="a" style="left:457px;top:345px;width:1px;height:20px;background:#a0a0a0;"></div>
<div class="a" style="left:458px;top:346px;width:64px;height:1px;background:#696969;"></div>
<div class="a" style="left:458px;top:346px;width:1px;height:18px;background:#696969;"></div>
<div class="a" style="left:458px;top:364px;width:65px;height:1px;background:#e3e3e3;"></div>
<div class="a" style="left:522px;top:346px;width:1px;height:19px;background:#e3e3e3;"></div>
<div class="a" style="left:505px;top:347px;width:17px;height:17px;background:#f0f0f0;"></div>
<div class="a" style="left:505px;top:363px;width:17px;height:1px;background:#696969;"></div>
<div class="a" style="left:521px;top:347px;width:1px;height:17px;background:#696969;"></div>
<div class="a" style="left:505px;top:362px;width:16px;height:1px;background:#a0a0a0;"></div>
<div class="a" style="left:520px;top:347px;width:1px;height:16px;background:#a0a0a0;"></div>
<svg class="a" style="left:509px;top:354px;" width="9" height="5" viewBox="0 0 9 5"><path d="M0 0.3 H8 L4 4.6Z" fill="#000"/></svg>
<div class="t" style="left:461.50px;top:351px;font-size:10px;color:#000;font-weight:400;">Sway</div>
<div class="a" style="left:527px;top:345px;width:50px;height:21px;background:#fff;"></div>
<div class="a" style="left:527px;top:345px;width:49px;height:1px;background:#a0a0a0;"></div>
<div class="a" style="left:527px;top:345px;width:1px;height:20px;background:#a0a0a0;"></div>
<div class="a" style="left:528px;top:346px;width:47px;height:1px;background:#696969;"></div>
<div class="a" style="left:528px;top:346px;width:1px;height:18px;background:#696969;"></div>
<div class="a" style="left:528px;top:364px;width:48px;height:1px;background:#e3e3e3;"></div>
<div class="a" style="left:575px;top:346px;width:1px;height:19px;background:#e3e3e3;"></div>
<div class="a" style="left:558px;top:347px;width:17px;height:17px;background:#f0f0f0;"></div>
<div class="a" style="left:558px;top:363px;width:17px;height:1px;background:#696969;"></div>
<div class="a" style="left:574px;top:347px;width:1px;height:17px;background:#696969;"></div>
<div class="a" style="left:558px;top:362px;width:16px;height:1px;background:#a0a0a0;"></div>
<div class="a" style="left:573px;top:347px;width:1px;height:16px;background:#a0a0a0;"></div>
<svg class="a" style="left:562px;top:354px;" width="9" height="5" viewBox="0 0 9 5"><path d="M0 0.3 H8 L4 4.6Z" fill="#000"/></svg>
<div class="t" style="left:531.50px;top:351px;font-size:10px;color:#000;font-weight:400;">100</div>
<svg class="a" style="left:581px;top:345px;" width="17" height="21" viewBox="0 0 17 21"><rect width="17" height="21" fill="#5c5c5e"/><rect x="2.5" y="8.5" width="12" height="4" fill="#fff" stroke="#000" stroke-width="0.6"/></svg>
<svg class="a" style="left:433px;top:372px;" width="21" height="21" viewBox="0 0 21 21"><rect width="21" height="21" fill="#5b6e59"/><g fill="#fff" stroke="#000" stroke-width="1.15" stroke-linejoin="miter" stroke-miterlimit="6">
<path d="M1.7 4.8 H14 V2 L19.7 6.7 L14 11.3 V8.6 H1.7Z"/>
<path d="M1.7 13.3 H14 V10.6 L19.7 15.2 L14 19.8 V17.1 H1.7Z"/></g></svg>
<div class="a" style="left:457px;top:372px;width:67px;height:21px;background:#fff;"></div>
<div class="a" style="left:457px;top:372px;width:66px;height:1px;background:#a0a0a0;"></div>
<div class="a" style="left:457px;top:372px;width:1px;height:20px;background:#a0a0a0;"></div>
<div class="a" style="left:458px;top:373px;width:64px;height:1px;background:#696969;"></div>
<div class="a" style="left:458px;top:373px;width:1px;height:18px;background:#696969;"></div>
<div class="a" style="left:458px;top:391px;width:65px;height:1px;background:#e3e3e3;"></div>
<div class="a" style="left:522px;top:373px;width:1px;height:19px;background:#e3e3e3;"></div>
<div class="a" style="left:505px;top:374px;width:17px;height:17px;background:#f0f0f0;"></div>
<div class="a" style="left:505px;top:390px;width:17px;height:1px;background:#696969;"></div>
<div class="a" style="left:521px;top:374px;width:1px;height:17px;background:#696969;"></div>
<div class="a" style="left:505px;top:389px;width:16px;height:1px;background:#a0a0a0;"></div>
<div class="a" style="left:520px;top:374px;width:1px;height:16px;background:#a0a0a0;"></div>
<svg class="a" style="left:509px;top:381px;" width="9" height="5" viewBox="0 0 9 5"><path d="M0 0.3 H8 L4 4.6Z" fill="#000"/></svg>
<div class="t" style="left:461.50px;top:378px;font-size:10px;color:#000;font-weight:400;">-</div>
<div class="a" style="left:527px;top:372px;width:50px;height:21px;background:#fff;"></div>
<div class="a" style="left:527px;top:372px;width:49px;height:1px;background:#a0a0a0;"></div>
<div class="a" style="left:527px;top:372px;width:1px;height:20px;background:#a0a0a0;"></div>
<div class="a" style="left:528px;top:373px;width:47px;height:1px;background:#696969;"></div>
<div class="a" style="left:528px;top:373px;width:1px;height:18px;background:#696969;"></div>
<div class="a" style="left:528px;top:391px;width:48px;height:1px;background:#e3e3e3;"></div>
<div class="a" style="left:575px;top:373px;width:1px;height:19px;background:#e3e3e3;"></div>
<div class="a" style="left:558px;top:374px;width:17px;height:17px;background:#f0f0f0;"></div>
<div class="a" style="left:558px;top:390px;width:17px;height:1px;background:#696969;"></div>
<div class="a" style="left:574px;top:374px;width:1px;height:17px;background:#696969;"></div>
<div class="a" style="left:558px;top:389px;width:16px;height:1px;background:#a0a0a0;"></div>
<div class="a" style="left:573px;top:374px;width:1px;height:16px;background:#a0a0a0;"></div>
<svg class="a" style="left:562px;top:381px;" width="9" height="5" viewBox="0 0 9 5"><path d="M0 0.3 H8 L4 4.6Z" fill="#000"/></svg>
<div class="t" style="left:531.50px;top:378px;font-size:10px;color:#000;font-weight:400;">-</div>
<svg class="a" style="left:581px;top:372px;" width="17" height="21" viewBox="0 0 17 21"><rect width="17" height="21" fill="#5c5c5e"/><rect x="2.5" y="8.5" width="12" height="4" fill="#fff" stroke="#000" stroke-width="0.6"/></svg>
<svg class="a" style="left:433px;top:399px;" width="21" height="21" viewBox="0 0 21 21"><rect width="21" height="21" fill="#5b6e59"/><g fill="#fff" stroke="#000" stroke-width="1.15" stroke-linejoin="miter" stroke-miterlimit="6">
<path d="M1.7 4.8 H14 V2 L19.7 6.7 L14 11.3 V8.6 H1.7Z"/>
<path d="M1.7 13.3 H14 V10.6 L19.7 15.2 L14 19.8 V17.1 H1.7Z"/></g></svg>
<div class="a" style="left:457px;top:399px;width:67px;height:21px;background:#fff;"></div>
<div class="a" style="left:457px;top:399px;width:66px;height:1px;background:#a0a0a0;"></div>
<div class="a" style="left:457px;top:399px;width:1px;height:20px;background:#a0a0a0;"></div>
<div class="a" style="left:458px;top:400px;width:64px;height:1px;background:#696969;"></div>
<div class="a" style="left:458px;top:400px;width:1px;height:18px;background:#696969;"></div>
<div class="a" style="left:458px;top:418px;width:65px;height:1px;background:#e3e3e3;"></div>
<div class="a" style="left:522px;top:400px;width:1px;height:19px;background:#e3e3e3;"></div>
<div class="a" style="left:505px;top:401px;width:17px;height:17px;background:#f0f0f0;"></div>
<div class="a" style="left:505px;top:417px;width:17px;height:1px;background:#696969;"></div>
<div class="a" style="left:521px;top:401px;width:1px;height:17px;background:#696969;"></div>
<div class="a" style="left:505px;top:416px;width:16px;height:1px;background:#a0a0a0;"></div>
<div class="a" style="left:520px;top:401px;width:1px;height:16px;background:#a0a0a0;"></div>
<svg class="a" style="left:509px;top:408px;" width="9" height="5" viewBox="0 0 9 5"><path d="M0 0.3 H8 L4 4.6Z" fill="#000"/></svg>
<div class="t" style="left:461.50px;top:405px;font-size:10px;color:#000;font-weight:400;">-</div>
<div class="a" style="left:527px;top:399px;width:50px;height:21px;background:#fff;"></div>
<div class="a" style="left:527px;top:399px;width:49px;height:1px;background:#a0a0a0;"></div>
<div class="a" style="left:527px;top:399px;width:1px;height:20px;background:#a0a0a0;"></div>
<div class="a" style="left:528px;top:400px;width:47px;height:1px;background:#696969;"></div>
<div class="a" style="left:528px;top:400px;width:1px;height:18px;background:#696969;"></div>
<div class="a" style="left:528px;top:418px;width:48px;height:1px;background:#e3e3e3;"></div>
<div class="a" style="left:575px;top:400px;width:1px;height:19px;background:#e3e3e3;"></div>
<div class="a" style="left:558px;top:401px;width:17px;height:17px;background:#f0f0f0;"></div>
<div class="a" style="left:558px;top:417px;width:17px;height:1px;background:#696969;"></div>
<div class="a" style="left:574px;top:401px;width:1px;height:17px;background:#696969;"></div>
<div class="a" style="left:558px;top:416px;width:16px;height:1px;background:#a0a0a0;"></div>
<div class="a" style="left:573px;top:401px;width:1px;height:16px;background:#a0a0a0;"></div>
<svg class="a" style="left:562px;top:408px;" width="9" height="5" viewBox="0 0 9 5"><path d="M0 0.3 H8 L4 4.6Z" fill="#000"/></svg>
<div class="t" style="left:531.50px;top:405px;font-size:10px;color:#000;font-weight:400;">-</div>
<svg class="a" style="left:581px;top:399px;" width="17" height="21" viewBox="0 0 17 21"><rect width="17" height="21" fill="#5c5c5e"/><rect x="2.5" y="8.5" width="12" height="4" fill="#fff" stroke="#000" stroke-width="0.6"/></svg>
<svg class="a" style="left:433px;top:426px;" width="21" height="21" viewBox="0 0 21 21"><rect width="21" height="21" fill="#5b6e59"/><g fill="#fff" stroke="#000" stroke-width="1.15" stroke-linejoin="miter" stroke-miterlimit="6">
<path d="M1.7 4.8 H14 V2 L19.7 6.7 L14 11.3 V8.6 H1.7Z"/>
<path d="M1.7 13.3 H14 V10.6 L19.7 15.2 L14 19.8 V17.1 H1.7Z"/></g></svg>
<div class="a" style="left:457px;top:426px;width:67px;height:21px;background:#fff;"></div>
<div class="a" style="left:457px;top:426px;width:66px;height:1px;background:#a0a0a0;"></div>
<div class="a" style="left:457px;top:426px;width:1px;height:20px;background:#a0a0a0;"></div>
<div class="a" style="left:458px;top:427px;width:64px;height:1px;background:#696969;"></div>
<div class="a" style="left:458px;top:427px;width:1px;height:18px;background:#696969;"></div>
<div class="a" style="left:458px;top:445px;width:65px;height:1px;background:#e3e3e3;"></div>
<div class="a" style="left:522px;top:427px;width:1px;height:19px;background:#e3e3e3;"></div>
<div class="a" style="left:505px;top:428px;width:17px;height:17px;background:#f0f0f0;"></div>
<div class="a" style="left:505px;top:444px;width:17px;height:1px;background:#696969;"></div>
<div class="a" style="left:521px;top:428px;width:1px;height:17px;background:#696969;"></div>
<div class="a" style="left:505px;top:443px;width:16px;height:1px;background:#a0a0a0;"></div>
<div class="a" style="left:520px;top:428px;width:1px;height:16px;background:#a0a0a0;"></div>
<svg class="a" style="left:509px;top:435px;" width="9" height="5" viewBox="0 0 9 5"><path d="M0 0.3 H8 L4 4.6Z" fill="#000"/></svg>
<div class="t" style="left:461.50px;top:432px;font-size:10px;color:#000;font-weight:400;">-</div>
<div class="a" style="left:527px;top:426px;width:50px;height:21px;background:#fff;"></div>
<div class="a" style="left:527px;top:426px;width:49px;height:1px;background:#a0a0a0;"></div>
<div class="a" style="left:527px;top:426px;width:1px;height:20px;background:#a0a0a0;"></div>
<div class="a" style="left:528px;top:427px;width:47px;height:1px;background:#696969;"></div>
<div class="a" style="left:528px;top:427px;width:1px;height:18px;background:#696969;"></div>
<div class="a" style="left:528px;top:445px;width:48px;height:1px;background:#e3e3e3;"></div>
<div class="a" style="left:575px;top:427px;width:1px;height:19px;background:#e3e3e3;"></div>
<div class="a" style="left:558px;top:428px;width:17px;height:17px;background:#f0f0f0;"></div>
<div class="a" style="left:558px;top:444px;width:17px;height:1px;background:#696969;"></div>
<div class="a" style="left:574px;top:428px;width:1px;height:17px;background:#696969;"></div>
<div class="a" style="left:558px;top:443px;width:16px;height:1px;background:#a0a0a0;"></div>
<div class="a" style="left:573px;top:428px;width:1px;height:16px;background:#a0a0a0;"></div>
<svg class="a" style="left:562px;top:435px;" width="9" height="5" viewBox="0 0 9 5"><path d="M0 0.3 H8 L4 4.6Z" fill="#000"/></svg>
<div class="t" style="left:531.50px;top:432px;font-size:10px;color:#000;font-weight:400;">-</div>
<svg class="a" style="left:581px;top:426px;" width="17" height="21" viewBox="0 0 17 21"><rect width="17" height="21" fill="#5c5c5e"/><rect x="2.5" y="8.5" width="12" height="4" fill="#fff" stroke="#000" stroke-width="0.6"/></svg>
<svg class="a" style="left:433px;top:453px;" width="21" height="21" viewBox="0 0 21 21"><rect width="21" height="21" fill="#5b6e59"/><g fill="#fff" stroke="#000" stroke-width="1.15" stroke-linejoin="miter" stroke-miterlimit="6">
<path d="M1.7 4.8 H14 V2 L19.7 6.7 L14 11.3 V8.6 H1.7Z"/>
<path d="M1.7 13.3 H14 V10.6 L19.7 15.2 L14 19.8 V17.1 H1.7Z"/></g></svg>
<div class="a" style="left:457px;top:453px;width:67px;height:21px;background:#fff;"></div>
<div class="a" style="left:457px;top:453px;width:66px;height:1px;background:#a0a0a0;"></div>
<div class="a" style="left:457px;top:453px;width:1px;height:20px;background:#a0a0a0;"></div>
<div class="a" style="left:458px;top:454px;width:64px;height:1px;background:#696969;"></div>
<div class="a" style="left:458px;top:454px;width:1px;height:18px;background:#696969;"></div>
<div class="a" style="left:458px;top:472px;width:65px;height:1px;background:#e3e3e3;"></div>
<div class="a" style="left:522px;top:454px;width:1px;height:19px;background:#e3e3e3;"></div>
<div class="a" style="left:505px;top:455px;width:17px;height:17px;background:#f0f0f0;"></div>
<div class="a" style="left:505px;top:471px;width:17px;height:1px;background:#696969;"></div>
<div class="a" style="left:521px;top:455px;width:1px;height:17px;background:#696969;"></div>
<div class="a" style="left:505px;top:470px;width:16px;height:1px;background:#a0a0a0;"></div>
<div class="a" style="left:520px;top:455px;width:1px;height:16px;background:#a0a0a0;"></div>
<svg class="a" style="left:509px;top:462px;" width="9" height="5" viewBox="0 0 9 5"><path d="M0 0.3 H8 L4 4.6Z" fill="#000"/></svg>
<div class="t" style="left:461.50px;top:459px;font-size:10px;color:#000;font-weight:400;">-</div>
<div class="a" style="left:527px;top:453px;width:50px;height:21px;background:#fff;"></div>
<div class="a" style="left:527px;top:453px;width:49px;height:1px;background:#a0a0a0;"></div>
<div class="a" style="left:527px;top:453px;width:1px;height:20px;background:#a0a0a0;"></div>
<div class="a" style="left:528px;top:454px;width:47px;height:1px;background:#696969;"></div>
<div class="a" style="left:528px;top:454px;width:1px;height:18px;background:#696969;"></div>
<div class="a" style="left:528px;top:472px;width:48px;height:1px;background:#e3e3e3;"></div>
<div class="a" style="left:575px;top:454px;width:1px;height:19px;background:#e3e3e3;"></div>
<div class="a" style="left:558px;top:455px;width:17px;height:17px;background:#f0f0f0;"></div>
<div class="a" style="left:558px;top:471px;width:17px;height:1px;background:#696969;"></div>
<div class="a" style="left:574px;top:455px;width:1px;height:17px;background:#696969;"></div>
<div class="a" style="left:558px;top:470px;width:16px;height:1px;background:#a0a0a0;"></div>
<div class="a" style="left:573px;top:455px;width:1px;height:16px;background:#a0a0a0;"></div>
<svg class="a" style="left:562px;top:462px;" width="9" height="5" viewBox="0 0 9 5"><path d="M0 0.3 H8 L4 4.6Z" fill="#000"/></svg>
<div class="t" style="left:531.50px;top:459px;font-size:10px;color:#000;font-weight:400;">-</div>
<svg class="a" style="left:581px;top:453px;" width="17" height="21" viewBox="0 0 17 21"><rect width="17" height="21" fill="#5c5c5e"/><rect x="2.5" y="8.5" width="12" height="4" fill="#fff" stroke="#000" stroke-width="0.6"/></svg>
<svg class="a" style="left:433px;top:480px;" width="21" height="21" viewBox="0 0 21 21"><rect width="21" height="21" fill="#5b6e59"/><g fill="#fff" stroke="#000" stroke-width="1.15" stroke-linejoin="miter" stroke-miterlimit="6">
<path d="M1.7 4.8 H14 V2 L19.7 6.7 L14 11.3 V8.6 H1.7Z"/>
<path d="M1.7 13.3 H14 V10.6 L19.7 15.2 L14 19.8 V17.1 H1.7Z"/></g></svg>
<div class="a" style="left:457px;top:480px;width:67px;height:21px;background:#fff;"></div>
<div class="a" style="left:457px;top:480px;width:66px;height:1px;background:#a0a0a0;"></div>
<div class="a" style="left:457px;top:480px;width:1px;height:20px;background:#a0a0a0;"></div>
<div class="a" style="left:458px;top:481px;width:64px;height:1px;background:#696969;"></div>
<div class="a" style="left:458px;top:481px;width:1px;height:18px;background:#696969;"></div>
<div class="a" style="left:458px;top:499px;width:65px;height:1px;background:#e3e3e3;"></div>
<div class="a" style="left:522px;top:481px;width:1px;height:19px;background:#e3e3e3;"></div>
<div class="a" style="left:505px;top:482px;width:17px;height:17px;background:#f0f0f0;"></div>
<div class="a" style="left:505px;top:498px;width:17px;height:1px;background:#696969;"></div>
<div class="a" style="left:521px;top:482px;width:1px;height:17px;background:#696969;"></div>
<div class="a" style="left:505px;top:497px;width:16px;height:1px;background:#a0a0a0;"></div>
<div class="a" style="left:520px;top:482px;width:1px;height:16px;background:#a0a0a0;"></div>
<svg class="a" style="left:509px;top:489px;" width="9" height="5" viewBox="0 0 9 5"><path d="M0 0.3 H8 L4 4.6Z" fill="#000"/></svg>
<div class="t" style="left:461.50px;top:486px;font-size:10px;color:#000;font-weight:400;">-</div>
<div class="a" style="left:527px;top:480px;width:50px;height:21px;background:#fff;"></div>
<div class="a" style="left:527px;top:480px;width:49px;height:1px;background:#a0a0a0;"></div>
<div class="a" style="left:527px;top:480px;width:1px;height:20px;background:#a0a0a0;"></div>
<div class="a" style="left:528px;top:481px;width:47px;height:1px;background:#696969;"></div>
<div class="a" style="left:528px;top:481px;width:1px;height:18px;background:#696969;"></div>
<div class="a" style="left:528px;top:499px;width:48px;height:1px;background:#e3e3e3;"></div>
<div class="a" style="left:575px;top:481px;width:1px;height:19px;background:#e3e3e3;"></div>
<div class="a" style="left:558px;top:482px;width:17px;height:17px;background:#f0f0f0;"></div>
<div class="a" style="left:558px;top:498px;width:17px;height:1px;background:#696969;"></div>
<div class="a" style="left:574px;top:482px;width:1px;height:17px;background:#696969;"></div>
<div class="a" style="left:558px;top:497px;width:16px;height:1px;background:#a0a0a0;"></div>
<div class="a" style="left:573px;top:482px;width:1px;height:16px;background:#a0a0a0;"></div>
<svg class="a" style="left:562px;top:489px;" width="9" height="5" viewBox="0 0 9 5"><path d="M0 0.3 H8 L4 4.6Z" fill="#000"/></svg>
<div class="t" style="left:531.50px;top:486px;font-size:10px;color:#000;font-weight:400;">-</div>
<svg class="a" style="left:581px;top:480px;" width="17" height="21" viewBox="0 0 17 21"><rect width="17" height="21" fill="#5c5c5e"/><rect x="2.5" y="8.5" width="12" height="4" fill="#fff" stroke="#000" stroke-width="0.6"/></svg>
<svg class="a" style="left:433px;top:507px;" width="21" height="21" viewBox="0 0 21 21"><rect width="21" height="21" fill="#5b6e59"/><g fill="#fff" stroke="#000" stroke-width="1.15" stroke-linejoin="miter" stroke-miterlimit="6">
<path d="M1.7 4.8 H14 V2 L19.7 6.7 L14 11.3 V8.6 H1.7Z"/>
<path d="M1.7 13.3 H14 V10.6 L19.7 15.2 L14 19.8 V17.1 H1.7Z"/></g></svg>
<div class="a" style="left:457px;top:507px;width:67px;height:21px;background:#fff;"></div>
<div class="a" style="left:457px;top:507px;width:66px;height:1px;background:#a0a0a0;"></div>
<div class="a" style="left:457px;top:507px;width:1px;height:20px;background:#a0a0a0;"></div>
<div class="a" style="left:458px;top:508px;width:64px;height:1px;background:#696969;"></div>
<div class="a" style="left:458px;top:508px;width:1px;height:18px;background:#696969;"></div>
<div class="a" style="left:458px;top:526px;width:65px;height:1px;background:#e3e3e3;"></div>
<div class="a" style="left:522px;top:508px;width:1px;height:19px;background:#e3e3e3;"></div>
<div class="a" style="left:505px;top:509px;width:17px;height:17px;background:#f0f0f0;"></div>
<div class="a" style="left:505px;top:525px;width:17px;height:1px;background:#696969;"></div>
<div class="a" style="left:521px;top:509px;width:1px;height:17px;background:#696969;"></div>
<div class="a" style="left:505px;top:524px;width:16px;height:1px;background:#a0a0a0;"></div>
<div class="a" style="left:520px;top:509px;width:1px;height:16px;background:#a0a0a0;"></div>
<svg class="a" style="left:509px;top:516px;" width="9" height="5" viewBox="0 0 9 5"><path d="M0 0.3 H8 L4 4.6Z" fill="#000"/></svg>
<div class="t" style="left:461.50px;top:513px;font-size:10px;color:#000;font-weight:400;">-</div>
<div class="a" style="left:527px;top:507px;width:50px;height:21px;background:#fff;"></div>
<div class="a" style="left:527px;top:507px;width:49px;height:1px;background:#a0a0a0;"></div>
<div class="a" style="left:527px;top:507px;width:1px;height:20px;background:#a0a0a0;"></div>
<div class="a" style="left:528px;top:508px;width:47px;height:1px;background:#696969;"></div>
<div class="a" style="left:528px;top:508px;width:1px;height:18px;background:#696969;"></div>
<div class="a" style="left:528px;top:526px;width:48px;height:1px;background:#e3e3e3;"></div>
<div class="a" style="left:575px;top:508px;width:1px;height:19px;background:#e3e3e3;"></div>
<div class="a" style="left:558px;top:509px;width:17px;height:17px;background:#f0f0f0;"></div>
<div class="a" style="left:558px;top:525px;width:17px;height:1px;background:#696969;"></div>
<div class="a" style="left:574px;top:509px;width:1px;height:17px;background:#696969;"></div>
<div class="a" style="left:558px;top:524px;width:16px;height:1px;background:#a0a0a0;"></div>
<div class="a" style="left:573px;top:509px;width:1px;height:16px;background:#a0a0a0;"></div>
<svg class="a" style="left:562px;top:516px;" width="9" height="5" viewBox="0 0 9 5"><path d="M0 0.3 H8 L4 4.6Z" fill="#000"/></svg>
<div class="t" style="left:531.50px;top:513px;font-size:10px;color:#000;font-weight:400;">-</div>
<svg class="a" style="left:581px;top:507px;" width="17" height="21" viewBox="0 0 17 21"><rect width="17" height="21" fill="#5c5c5e"/><rect x="2.5" y="8.5" width="12" height="4" fill="#fff" stroke="#000" stroke-width="0.6"/></svg>
<svg class="a" style="left:433px;top:534px;" width="21" height="21" viewBox="0 0 21 21"><rect width="21" height="21" fill="#5b6e59"/><g fill="#fff" stroke="#000" stroke-width="1.15" stroke-linejoin="miter" stroke-miterlimit="6">
<path d="M1.7 4.8 H14 V2 L19.7 6.7 L14 11.3 V8.6 H1.7Z"/>
<path d="M1.7 13.3 H14 V10.6 L19.7 15.2 L14 19.8 V17.1 H1.7Z"/></g></svg>
<div class="a" style="left:457px;top:534px;width:67px;height:21px;background:#fff;"></div>
<div class="a" style="left:457px;top:534px;width:66px;height:1px;background:#a0a0a0;"></div>
<div class="a" style="left:457px;top:534px;width:1px;height:20px;background:#a0a0a0;"></div>
<div class="a" style="left:458px;top:535px;width:64px;height:1px;background:#696969;"></div>
<div class="a" style="left:458px;top:535px;width:1px;height:18px;background:#696969;"></div>
<div class="a" style="left:458px;top:553px;width:65px;height:1px;background:#e3e3e3;"></div>
<div class="a" style="left:522px;top:535px;width:1px;height:19px;background:#e3e3e3;"></div>
<div class="a" style="left:505px;top:536px;width:17px;height:17px;background:#f0f0f0;"></div>
<div class="a" style="left:505px;top:552px;width:17px;height:1px;background:#696969;"></div>
<div class="a" style="left:521px;top:536px;width:1px;height:17px;background:#696969;"></div>
<div class="a" style="left:505px;top:551px;width:16px;height:1px;background:#a0a0a0;"></div>
<div class="a" style="left:520px;top:536px;width:1px;height:16px;background:#a0a0a0;"></div>
<svg class="a" style="left:509px;top:543px;" width="9" height="5" viewBox="0 0 9 5"><path d="M0 0.3 H8 L4 4.6Z" fill="#000"/></svg>
<div class="t" style="left:461.50px;top:540px;font-size:10px;color:#000;font-weight:400;">-</div>
<div class="a" style="left:527px;top:534px;width:50px;height:21px;background:#fff;"></div>
<div class="a" style="left:527px;top:534px;width:49px;height:1px;background:#a0a0a0;"></div>
<div class="a" style="left:527px;top:534px;width:1px;height:20px;background:#a0a0a0;"></div>
<div class="a" style="left:528px;top:535px;width:47px;height:1px;background:#696969;"></div>
<div class="a" style="left:528px;top:535px;width:1px;height:18px;background:#696969;"></div>
<div class="a" style="left:528px;top:553px;width:48px;height:1px;background:#e3e3e3;"></div>
<div class="a" style="left:575px;top:535px;width:1px;height:19px;background:#e3e3e3;"></div>
<div class="a" style="left:558px;top:536px;width:17px;height:17px;background:#f0f0f0;"></div>
<div class="a" style="left:558px;top:552px;width:17px;height:1px;background:#696969;"></div>
<div class="a" style="left:574px;top:536px;width:1px;height:17px;background:#696969;"></div>
<div class="a" style="left:558px;top:551px;width:16px;height:1px;background:#a0a0a0;"></div>
<div class="a" style="left:573px;top:536px;width:1px;height:16px;background:#a0a0a0;"></div>
<svg class="a" style="left:562px;top:543px;" width="9" height="5" viewBox="0 0 9 5"><path d="M0 0.3 H8 L4 4.6Z" fill="#000"/></svg>
<div class="t" style="left:531.50px;top:540px;font-size:10px;color:#000;font-weight:400;">-</div>
<svg class="a" style="left:581px;top:534px;" width="17" height="21" viewBox="0 0 17 21"><rect width="17" height="21" fill="#5c5c5e"/><rect x="2.5" y="8.5" width="12" height="4" fill="#fff" stroke="#000" stroke-width="0.6"/></svg>
<div class="t" style="left:439.20px;top:571px;font-size:13px;color:#fff;transform:scaleX(1.1609);-webkit-text-stroke:0.3px #fff;text-shadow:1px 0 #000,-1px 0 #000,0 1px #000,0 -1px #000;">Axis Total =</div>
<div class="t" style="left:545.74px;top:569px;font-size:16.5px;color:#1ee01e;-webkit-text-stroke:0.1px #1ee01e;">100</div>
<div class="a" style="left:614px;top:319px;width:188px;height:244px;box-sizing:border-box;border:1px solid #fafafa;border-radius:4px;"></div>
<div class="a" style="left:614px;top:563px;width:188px;height:30px;box-sizing:border-box;border:1px solid #fafafa;border-radius:5px;"></div>
<div class="t" style="left:682.35px;top:299px;font-size:16.5px;color:#fff;transform:scaleX(0.9435);-webkit-text-stroke:0.3px #fff;">Axis4a</div>
<div class="t" style="left:626.90px;top:327px;font-size:14.5px;color:#fff;transform:scaleX(0.9434);-webkit-text-stroke:0.3px #fff;text-shadow:1px 0 #000,-1px 0 #000,0 1px #000,0 -1px #000;">Dir</div>
<div class="t" style="left:664.90px;top:327px;font-size:14.5px;color:#fff;transform:scaleX(0.9422);-webkit-text-stroke:0.3px #fff;text-shadow:1px 0 #000,-1px 0 #000,0 1px #000,0 -1px #000;">Force</div>
<div class="t" style="left:738.90px;top:327px;font-size:14.5px;color:#fff;-webkit-text-stroke:0.3px #fff;text-shadow:1px 0 #000,-1px 0 #000,0 1px #000,0 -1px #000;">%</div>
<div class="t" style="left:772.70px;top:327px;font-size:14.5px;color:#fff;transform:scaleX(0.9594);-webkit-text-stroke:0.3px #fff;text-shadow:1px 0 #000,-1px 0 #000,0 1px #000,0 -1px #000;">Flt</div>
<svg class="a" style="left:626px;top:345px;" width="21" height="21" viewBox="0 0 21 21"><rect width="21" height="21" fill="#5b6e59"/><g fill="#fff" stroke="#000" stroke-width="1.15" stroke-linejoin="miter" stroke-miterlimit="6">
<path d="M1.7 4.8 H14 V2 L19.7 6.7 L14 11.3 V8.6 H1.7Z"/>
<path d="M1.7 13.3 H14 V10.6 L19.7 15.2 L14 19.8 V17.1 H1.7Z"/></g></svg>
<div class="a" style="left:650px;top:345px;width:67px;height:21px;background:#fff;"></div>
<div class="a" style="left:650px;top:345px;width:66px;height:1px;background:#a0a0a0;"></div>
<div class="a" style="left:650px;top:345px;width:1px;height:20px;background:#a0a0a0;"></div>
<div class="a" style="left:651px;top:346px;width:64px;height:1px;background:#696969;"></div>
<div class="a" style="left:651px;top:346px;width:1px;height:18px;background:#696969;"></div>
<div class="a" style="left:651px;top:364px;width:65px;height:1px;background:#e3e3e3;"></div>
<div class="a" style="left:715px;top:346px;width:1px;height:19px;background:#e3e3e3;"></div>
<div class="a" style="left:698px;top:347px;width:17px;height:17px;background:#f0f0f0;"></div>
<div class="a" style="left:698px;top:363px;width:17px;height:1px;background:#696969;"></div>
<div class="a" style="left:714px;top:347px;width:1px;height:17px;background:#696969;"></div>
<div class="a" style="left:698px;top:362px;width:16px;height:1px;background:#a0a0a0;"></div>
<div class="a" style="left:713px;top:347px;width:1px;height:16px;background:#a0a0a0;"></div>
<svg class="a" style="left:702px;top:354px;" width="9" height="5" viewBox="0 0 9 5"><path d="M0 0.3 H8 L4 4.6Z" fill="#000"/></svg>
<div class="t" style="left:654.50px;top:351px;font-size:10px;color:#000;font-weight:400;">-</div>
<div class="a" style="left:720px;top:345px;width:50px;height:21px;background:#fff;"></div>
<div class="a" style="left:720px;top:345px;width:49px;height:1px;background:#a0a0a0;"></div>
<div class="a" style="left:720px;top:345px;width:1px;height:20px;background:#a0a0a0;"></div>
<div class="a" style="left:721px;top:346px;width:47px;height:1px;background:#696969;"></div>
<div class="a" style="left:721px;top:346px;width:1px;height:18px;background:#696969;"></div>
<div class="a" style="left:721px;top:364px;width:48px;height:1px;background:#e3e3e3;"></div>
<div class="a" style="left:768px;top:346px;width:1px;height:19px;background:#e3e3e3;"></div>
<div class="a" style="left:751px;top:347px;width:17px;height:17px;background:#f0f0f0;"></div>
<div class="a" style="left:751px;top:363px;width:17px;height:1px;background:#696969;"></div>
<div class="a" style="left:767px;top:347px;width:1px;height:17px;background:#696969;"></div>
<div class="a" style="left:751px;top:362px;width:16px;height:1px;background:#a0a0a0;"></div>
<div class="a" style="left:766px;top:347px;width:1px;height:16px;background:#a0a0a0;"></div>
<svg class="a" style="left:755px;top:354px;" width="9" height="5" viewBox="0 0 9 5"><path d="M0 0.3 H8 L4 4.6Z" fill="#000"/></svg>
<div class="t" style="left:724.50px;top:351px;font-size:10px;color:#000;font-weight:400;">-</div>
<svg class="a" style="left:774px;top:345px;" width="17" height="21" viewBox="0 0 17 21"><rect width="17" height="21" fill="#5c5c5e"/><rect x="2.5" y="8.5" width="12" height="4" fill="#fff" stroke="#000" stroke-width="0.6"/></svg>
<svg class="a" style="left:626px;top:372px;" width="21" height="21" viewBox="0 0 21 21"><rect width="21" height="21" fill="#5b6e59"/><g fill="#fff" stroke="#000" stroke-width="1.15" stroke-linejoin="miter" stroke-miterlimit="6">
<path d="M1.7 4.8 H14 V2 L19.7 6.7 L14 11.3 V8.6 H1.7Z"/>
<path d="M1.7 13.3 H14 V10.6 L19.7 15.2 L14 19.8 V17.1 H1.7Z"/></g></svg>
<div class="a" style="left:650px;top:372px;width:67px;height:21px;background:#fff;"></div>
<div class="a" style="left:650px;top:372px;width:66px;height:1px;background:#a0a0a0;"></div>
<div class="a" style="left:650px;top:372px;width:1px;height:20px;background:#a0a0a0;"></div>
<div class="a" style="left:651px;top:373px;width:64px;height:1px;background:#696969;"></div>
<div class="a" style="left:651px;top:373px;width:1px;height:18px;background:#696969;"></div>
<div class="a" style="left:651px;top:391px;width:65px;height:1px;background:#e3e3e3;"></div>
<div class="a" style="left:715px;top:373px;width:1px;height:19px;background:#e3e3e3;"></div>
<div class="a" style="left:698px;top:374px;width:17px;height:17px;background:#f0f0f0;"></div>
<div class="a" style="left:698px;top:390px;width:17px;height:1px;background:#696969;"></div>
<div class="a" style="left:714px;top:374px;width:1px;height:17px;background:#696969;"></div>
<div class="a" style="left:698px;top:389px;width:16px;height:1px;background:#a0a0a0;"></div>
<div class="a" style="left:713px;top:374px;width:1px;height:16px;background:#a0a0a0;"></div>
<svg class="a" style="left:702px;top:381px;" width="9" height="5" viewBox="0 0 9 5"><path d="M0 0.3 H8 L4 4.6Z" fill="#000"/></svg>
<div class="t" style="left:654.50px;top:378px;font-size:10px;color:#000;font-weight:400;">-</div>
<div class="a" style="left:720px;top:372px;width:50px;height:21px;background:#fff;"></div>
<div class="a" style="left:720px;top:372px;width:49px;height:1px;background:#a0a0a0;"></div>
<div class="a" style="left:720px;top:372px;width:1px;height:20px;background:#a0a0a0;"></div>
<div class="a" style="left:721px;top:373px;width:47px;height:1px;background:#696969;"></div>
<div class="a" style="left:721px;top:373px;width:1px;height:18px;background:#696969;"></div>
<div class="a" style="left:721px;top:391px;width:48px;height:1px;background:#e3e3e3;"></div>
<div class="a" style="left:768px;top:373px;width:1px;height:19px;background:#e3e3e3;"></div>
<div class="a" style="left:751px;top:374px;width:17px;height:17px;background:#f0f0f0;"></div>
<div class="a" style="left:751px;top:390px;width:17px;height:1px;background:#696969;"></div>
<div class="a" style="left:767px;top:374px;width:1px;height:17px;background:#696969;"></div>
<div class="a" style="left:751px;top:389px;width:16px;height:1px;background:#a0a0a0;"></div>
<div class="a" style="left:766px;top:374px;width:1px;height:16px;background:#a0a0a0;"></div>
<svg class="a" style="left:755px;top:381px;" width="9" height="5" viewBox="0 0 9 5"><path d="M0 0.3 H8 L4 4.6Z" fill="#000"/></svg>
<div class="t" style="left:724.50px;top:378px;font-size:10px;color:#000;font-weight:400;">-</div>
<svg class="a" style="left:774px;top:372px;" width="17" height="21" viewBox="0 0 17 21"><rect width="17" height="21" fill="#5c5c5e"/><rect x="2.5" y="8.5" width="12" height="4" fill="#fff" stroke="#000" stroke-width="0.6"/></svg>
<svg class="a" style="left:626px;top:399px;" width="21" height="21" viewBox="0 0 21 21"><rect width="21" height="21" fill="#5b6e59"/><g fill="#fff" stroke="#000" stroke-width="1.15" stroke-linejoin="miter" stroke-miterlimit="6">
<path d="M1.7 4.8 H14 V2 L19.7 6.7 L14 11.3 V8.6 H1.7Z"/>
<path d="M1.7 13.3 H14 V10.6 L19.7 15.2 L14 19.8 V17.1 H1.7Z"/></g></svg>
<div class="a" style="left:650px;top:399px;width:67px;height:21px;background:#fff;"></div>
<div class="a" style="left:650px;top:399px;width:66px;height:1px;background:#a0a0a0;"></div>
<div class="a" style="left:650px;top:399px;width:1px;height:20px;background:#a0a0a0;"></div>
<div class="a" style="left:651px;top:400px;width:64px;height:1px;background:#696969;"></div>
<div class="a" style="left:651px;top:400px;width:1px;height:18px;background:#696969;"></div>
<div class="a" style="left:651px;top:418px;width:65px;height:1px;background:#e3e3e3;"></div>
<div class="a" style="left:715px;top:400px;width:1px;height:19px;background:#e3e3e3;"></div>
<div class="a" style="left:698px;top:401px;width:17px;height:17px;background:#f0f0f0;"></div>
<div class="a" style="left:698px;top:417px;width:17px;height:1px;background:#696969;"></div>
<div class="a" style="left:714px;top:401px;width:1px;height:17px;background:#696969;"></div>
<div class="a" style="left:698px;top:416px;width:16px;height:1px;background:#a0a0a0;"></div>
<div class="a" style="left:713px;top:401px;width:1px;height:16px;background:#a0a0a0;"></div>
<svg class="a" style="left:702px;top:408px;" width="9" height="5" viewBox="0 0 9 5"><path d="M0 0.3 H8 L4 4.6Z" fill="#000"/></svg>
<div class="t" style="left:654.50px;top:405px;font-size:10px;color:#000;font-weight:400;">-</div>
<div class="a" style="left:720px;top:399px;width:50px;height:21px;background:#fff;"></div>
<div class="a" style="left:720px;top:399px;width:49px;height:1px;background:#a0a0a0;"></div>
<div class="a" style="left:720px;top:399px;width:1px;height:20px;background:#a0a0a0;"></div>
<div class="a" style="left:721px;top:400px;width:47px;height:1px;background:#696969;"></div>
<div class="a" style="left:721px;top:400px;width:1px;height:18px;background:#696969;"></div>
<div class="a" style="left:721px;top:418px;width:48px;height:1px;background:#e3e3e3;"></div>
<div class="a" style="left:768px;top:400px;width:1px;height:19px;background:#e3e3e3;"></div>
<div class="a" style="left:751px;top:401px;width:17px;height:17px;background:#f0f0f0;"></div>
<div class="a" style="left:751px;top:417px;width:17px;height:1px;background:#696969;"></div>
<div class="a" style="left:767px;top:401px;width:1px;height:17px;background:#696969;"></div>
<div class="a" style="left:751px;top:416px;width:16px;height:1px;background:#a0a0a0;"></div>
<div class="a" style="left:766px;top:401px;width:1px;height:16px;background:#a0a0a0;"></div>
<svg class="a" style="left:755px;top:408px;" width="9" height="5" viewBox="0 0 9 5"><path d="M0 0.3 H8 L4 4.6Z" fill="#000"/></svg>
<div class="t" style="left:724.50px;top:405px;font-size:10px;color:#000;font-weight:400;">-</div>
<svg class="a" style="left:774px;top:399px;" width="17" height="21" viewBox="0 0 17 21"><rect width="17" height="21" fill="#5c5c5e"/><rect x="2.5" y="8.5" width="12" height="4" fill="#fff" stroke="#000" stroke-width="0.6"/></svg>
<svg class="a" style="left:626px;top:426px;" width="21" height="21" viewBox="0 0 21 21"><rect width="21" height="21" fill="#5b6e59"/><g fill="#fff" stroke="#000" stroke-width="1.15" stroke-linejoin="miter" stroke-miterlimit="6">
<path d="M1.7 4.8 H14 V2 L19.7 6.7 L14 11.3 V8.6 H1.7Z"/>
<path d="M1.7 13.3 H14 V10.6 L19.7 15.2 L14 19.8 V17.1 H1.7Z"/></g></svg>
<div class="a" style="left:650px;top:426px;width:67px;height:21px;background:#fff;"></div>
<div class="a" style="left:650px;top:426px;width:66px;height:1px;background:#a0a0a0;"></div>
<div class="a" style="left:650px;top:426px;width:1px;height:20px;background:#a0a0a0;"></div>
<div class="a" style="left:651px;top:427px;width:64px;height:1px;background:#696969;"></div>
<div class="a" style="left:651px;top:427px;width:1px;height:18px;background:#696969;"></div>
<div class="a" style="left:651px;top:445px;width:65px;height:1px;background:#e3e3e3;"></div>
<div class="a" style="left:715px;top:427px;width:1px;height:19px;background:#e3e3e3;"></div>
<div class="a" style="left:698px;top:428px;width:17px;height:17px;background:#f0f0f0;"></div>
<div class="a" style="left:698px;top:444px;width:17px;height:1px;background:#696969;"></div>
<div class="a" style="left:714px;top:428px;width:1px;height:17px;background:#696969;"></div>
<div class="a" style="left:698px;top:443px;width:16px;height:1px;background:#a0a0a0;"></div>
<div class="a" style="left:713px;top:428px;width:1px;height:16px;background:#a0a0a0;"></div>
<svg class="a" style="left:702px;top:435px;" width="9" height="5" viewBox="0 0 9 5"><path d="M0 0.3 H8 L4 4.6Z" fill="#000"/></svg>
<div class="t" style="left:654.50px;top:432px;font-size:10px;color:#000;font-weight:400;">-</div>
<div class="a" style="left:720px;top:426px;width:50px;height:21px;background:#fff;"></div>
<div class="a" style="left:720px;top:426px;width:49px;height:1px;background:#a0a0a0;"></div>
<div class="a" style="left:720px;top:426px;width:1px;height:20px;background:#a0a0a0;"></div>
<div class="a" style="left:721px;top:427px;width:47px;height:1px;background:#696969;"></div>
<div class="a" style="left:721px;top:427px;width:1px;height:18px;background:#696969;"></div>
<div class="a" style="left:721px;top:445px;width:48px;height:1px;background:#e3e3e3;"></div>
<div class="a" style="left:768px;top:427px;width:1px;height:19px;background:#e3e3e3;"></div>
<div class="a" style="left:751px;top:428px;width:17px;height:17px;background:#f0f0f0;"></div>
<div class="a" style="left:751px;top:444px;width:17px;height:1px;background:#696969;"></div>
<div class="a" style="left:767px;top:428px;width:1px;height:17px;background:#696969;"></div>
<div class="a" style="left:751px;top:443px;width:16px;height:1px;background:#a0a0a0;"></div>
<div class="a" style="left:766px;top:428px;width:1px;height:16px;background:#a0a0a0;"></div>
<svg class="a" style="left:755px;top:435px;" width="9" height="5" viewBox="0 0 9 5"><path d="M0 0.3 H8 L4 4.6Z" fill="#000"/></svg>
<div class="t" style="left:724.50px;top:432px;font-size:10px;color:#000;font-weight:400;">-</div>
<svg class="a" style="left:774px;top:426px;" width="17" height="21" viewBox="0 0 17 21"><rect width="17" height="21" fill="#5c5c5e"/><rect x="2.5" y="8.5" width="12" height="4" fill="#fff" stroke="#000" stroke-width="0.6"/></svg>
<svg class="a" style="left:626px;top:453px;" width="21" height="21" viewBox="0 0 21 21"><rect width="21" height="21" fill="#5b6e59"/><g fill="#fff" stroke="#000" stroke-width="1.15" stroke-linejoin="miter" stroke-miterlimit="6">
<path d="M1.7 4.8 H14 V2 L19.7 6.7 L14 11.3 V8.6 H1.7Z"/>
<path d="M1.7 13.3 H14 V10.6 L19.7 15.2 L14 19.8 V17.1 H1.7Z"/></g></svg>
<div class="a" style="left:650px;top:453px;width:67px;height:21px;background:#fff;"></div>
<div class="a" style="left:650px;top:453px;width:66px;height:1px;background:#a0a0a0;"></div>
<div class="a" style="left:650px;top:453px;width:1px;height:20px;background:#a0a0a0;"></div>
<div class="a" style="left:651px;top:454px;width:64px;height:1px;background:#696969;"></div>
<div class="a" style="left:651px;top:454px;width:1px;height:18px;background:#696969;"></div>
<div class="a" style="left:651px;top:472px;width:65px;height:1px;background:#e3e3e3;"></div>
<div class="a" style="left:715px;top:454px;width:1px;height:19px;background:#e3e3e3;"></div>
<div class="a" style="left:698px;top:455px;width:17px;height:17px;background:#f0f0f0;"></div>
<div class="a" style="left:698px;top:471px;width:17px;height:1px;background:#696969;"></div>
<div class="a" style="left:714px;top:455px;width:1px;height:17px;background:#696969;"></div>
<div class="a" style="left:698px;top:470px;width:16px;height:1px;background:#a0a0a0;"></div>
<div class="a" style="left:713px;top:455px;width:1px;height:16px;background:#a0a0a0;"></div>
<svg class="a" style="left:702px;top:462px;" width="9" height="5" viewBox="0 0 9 5"><path d="M0 0.3 H8 L4 4.6Z" fill="#000"/></svg>
<div class="t" style="left:654.50px;top:459px;font-size:10px;color:#000;font-weight:400;">-</div>
<div class="a" style="left:720px;top:453px;width:50px;height:21px;background:#fff;"></div>
<div class="a" style="left:720px;top:453px;width:49px;height:1px;background:#a0a0a0;"></div>
<div class="a" style="left:720px;top:453px;width:1px;height:20px;background:#a0a0a0;"></div>
<div class="a" style="left:721px;top:454px;width:47px;height:1px;background:#696969;"></div>
<div class="a" style="left:721px;top:454px;width:1px;height:18px;background:#696969;"></div>
<div class="a" style="left:721px;top:472px;width:48px;height:1px;background:#e3e3e3;"></div>
<div class="a" style="left:768px;top:454px;width:1px;height:19px;background:#e3e3e3;"></div>
<div class="a" style="left:751px;top:455px;width:17px;height:17px;background:#f0f0f0;"></div>
<div class="a" style="left:751px;top:471px;width:17px;height:1px;background:#696969;"></div>
<div class="a" style="left:767px;top:455px;width:1px;height:17px;background:#696969;"></div>
<div class="a" style="left:751px;top:470px;width:16px;height:1px;background:#a0a0a0;"></div>
<div class="a" style="left:766px;top:455px;width:1px;height:16px;background:#a0a0a0;"></div>
<svg class="a" style="left:755px;top:462px;" width="9" height="5" viewBox="0 0 9 5"><path d="M0 0.3 H8 L4 4.6Z" fill="#000"/></svg>
<div class="t" style="left:724.50px;top:459px;font-size:10px;color:#000;font-weight:400;">-</div>
<svg class="a" style="left:774px;top:453px;" width="17" height="21" viewBox="0 0 17 21"><rect width="17" height="21" fill="#5c5c5e"/><rect x="2.5" y="8.5" width="12" height="4" fill="#fff" stroke="#000" stroke-width="0.6"/></svg>
<svg class="a" style="left:626px;top:480px;" width="21" height="21" viewBox="0 0 21 21"><rect width="21" height="21" fill="#5b6e59"/><g fill="#fff" stroke="#000" stroke-width="1.15" stroke-linejoin="miter" stroke-miterlimit="6">
<path d="M1.7 4.8 H14 V2 L19.7 6.7 L14 11.3 V8.6 H1.7Z"/>
<path d="M1.7 13.3 H14 V10.6 L19.7 15.2 L14 19.8 V17.1 H1.7Z"/></g></svg>
<div class="a" style="left:650px;top:480px;width:67px;height:21px;background:#fff;"></div>
<div class="a" style="left:650px;top:480px;width:66px;height:1px;background:#a0a0a0;"></div>
<div class="a" style="left:650px;top:480px;width:1px;height:20px;background:#a0a0a0;"></div>
<div class="a" style="left:651px;top:481px;width:64px;height:1px;background:#696969;"></div>
<div class="a" style="left:651px;top:481px;width:1px;height:18px;background:#696969;"></div>
<div class="a" style="left:651px;top:499px;width:65px;height:1px;background:#e3e3e3;"></div>
<div class="a" style="left:715px;top:481px;width:1px;height:19px;background:#e3e3e3;"></div>
<div class="a" style="left:698px;top:482px;width:17px;height:17px;background:#f0f0f0;"></div>
<div class="a" style="left:698px;top:498px;width:17px;height:1px;background:#696969;"></div>
<div class="a" style="left:714px;top:482px;width:1px;height:17px;background:#696969;"></div>
<div class="a" style="left:698px;top:497px;width:16px;height:1px;background:#a0a0a0;"></div>
<div class="a" style="left:713px;top:482px;width:1px;height:16px;background:#a0a0a0;"></div>
<svg class="a" style="left:702px;top:489px;" width="9" height="5" viewBox="0 0 9 5"><path d="M0 0.3 H8 L4 4.6Z" fill="#000"/></svg>
<div class="t" style="left:654.50px;top:486px;font-size:10px;color:#000;font-weight:400;">-</div>
<div class="a" style="left:720px;top:480px;width:50px;height:21px;background:#fff;"></div>
<div class="a" style="left:720px;top:480px;width:49px;height:1px;background:#a0a0a0;"></div>
<div class="a" style="left:720px;top:480px;width:1px;height:20px;background:#a0a0a0;"></div>
<div class="a" style="left:721px;top:481px;width:47px;height:1px;background:#696969;"></div>
<div class="a" style="left:721px;top:481px;width:1px;height:18px;background:#696969;"></div>
<div class="a" style="left:721px;top:499px;width:48px;height:1px;background:#e3e3e3;"></div>
<div class="a" style="left:768px;top:481px;width:1px;height:19px;background:#e3e3e3;"></div>
<div class="a" style="left:751px;top:482px;width:17px;height:17px;background:#f0f0f0;"></div>
<div class="a" style="left:751px;top:498px;width:17px;height:1px;background:#696969;"></div>
<div class="a" style="left:767px;top:482px;width:1px;height:17px;background:#696969;"></div>
<div class="a" style="left:751px;top:497px;width:16px;height:1px;background:#a0a0a0;"></div>
<div class="a" style="left:766px;top:482px;width:1px;height:16px;background:#a0a0a0;"></div>
<svg class="a" style="left:755px;top:489px;" width="9" height="5" viewBox="0 0 9 5"><path d="M0 0.3 H8 L4 4.6Z" fill="#000"/></svg>
<div class="t" style="left:724.50px;top:486px;font-size:10px;color:#000;font-weight:400;">-</div>
<svg class="a" style="left:774px;top:480px;" width="17" height="21" viewBox="0 0 17 21"><rect width="17" height="21" fill="#5c5c5e"/><rect x="2.5" y="8.5" width="12" height="4" fill="#fff" stroke="#000" stroke-width="0.6"/></svg>
<svg class="a" style="left:626px;top:507px;" width="21" height="21" viewBox="0 0 21 21"><rect width="21" height="21" fill="#5b6e59"/><g fill="#fff" stroke="#000" stroke-width="1.15" stroke-linejoin="miter" stroke-miterlimit="6">
<path d="M1.7 4.8 H14 V2 L19.7 6.7 L14 11.3 V8.6 H1.7Z"/>
<path d="M1.7 13.3 H14 V10.6 L19.7 15.2 L14 19.8 V17.1 H1.7Z"/></g></svg>
<div class="a" style="left:650px;top:507px;width:67px;height:21px;background:#fff;"></div>
<div class="a" style="left:650px;top:507px;width:66px;height:1px;background:#a0a0a0;"></div>
<div class="a" style="left:650px;top:507px;width:1px;height:20px;background:#a0a0a0;"></div>
<div class="a" style="left:651px;top:508px;width:64px;height:1px;background:#696969;"></div>
<div class="a" style="left:651px;top:508px;width:1px;height:18px;background:#696969;"></div>
<div class="a" style="left:651px;top:526px;width:65px;height:1px;background:#e3e3e3;"></div>
<div class="a" style="left:715px;top:508px;width:1px;height:19px;background:#e3e3e3;"></div>
<div class="a" style="left:698px;top:509px;width:17px;height:17px;background:#f0f0f0;"></div>
<div class="a" style="left:698px;top:525px;width:17px;height:1px;background:#696969;"></div>
<div class="a" style="left:714px;top:509px;width:1px;height:17px;background:#696969;"></div>
<div class="a" style="left:698px;top:524px;width:16px;height:1px;background:#a0a0a0;"></div>
<div class="a" style="left:713px;top:509px;width:1px;height:16px;background:#a0a0a0;"></div>
<svg class="a" style="left:702px;top:516px;" width="9" height="5" viewBox="0 0 9 5"><path d="M0 0.3 H8 L4 4.6Z" fill="#000"/></svg>
<div class="t" style="left:654.50px;top:513px;font-size:10px;color:#000;font-weight:400;">-</div>
<div class="a" style="left:720px;top:507px;width:50px;height:21px;background:#fff;"></div>
<div class="a" style="left:720px;top:507px;width:49px;height:1px;background:#a0a0a0;"></div>
<div class="a" style="left:720px;top:507px;width:1px;height:20px;background:#a0a0a0;"></div>
<div class="a" style="left:721px;top:508px;width:47px;height:1px;background:#696969;"></div>
<div class="a" style="left:721px;top:508px;width:1px;height:18px;background:#696969;"></div>
<div class="a" style="left:721px;top:526px;width:48px;height:1px;background:#e3e3e3;"></div>
<div class="a" style="left:768px;top:508px;width:1px;height:19px;background:#e3e3e3;"></div>
<div class="a" style="left:751px;top:509px;width:17px;height:17px;background:#f0f0f0;"></div>
<div class="a" style="left:751px;top:525px;width:17px;height:1px;background:#696969;"></div>
<div class="a" style="left:767px;top:509px;width:1px;height:17px;background:#696969;"></div>
<div class="a" style="left:751px;top:524px;width:16px;height:1px;background:#a0a0a0;"></div>
<div class="a" style="left:766px;top:509px;width:1px;height:16px;background:#a0a0a0;"></div>
<svg class="a" style="left:755px;top:516px;" width="9" height="5" viewBox="0 0 9 5"><path d="M0 0.3 H8 L4 4.6Z" fill="#000"/></svg>
<div class="t" style="left:724.50px;top:513px;font-size:10px;color:#000;font-weight:400;">-</div>
<svg class="a" style="left:774px;top:507px;" width="17" height="21" viewBox="0 0 17 21"><rect width="17" height="21" fill="#5c5c5e"/><rect x="2.5" y="8.5" width="12" height="4" fill="#fff" stroke="#000" stroke-width="0.6"/></svg>
<svg class="a" style="left:626px;top:534px;" width="21" height="21" viewBox="0 0 21 21"><rect width="21" height="21" fill="#5b6e59"/><g fill="#fff" stroke="#000" stroke-width="1.15" stroke-linejoin="miter" stroke-miterlimit="6">
<path d="M1.7 4.8 H14 V2 L19.7 6.7 L14 11.3 V8.6 H1.7Z"/>
<path d="M1.7 13.3 H14 V10.6 L19.7 15.2 L14 19.8 V17.1 H1.7Z"/></g></svg>
<div class="a" style="left:650px;top:534px;width:67px;height:21px;background:#fff;"></div>
<div class="a" style="left:650px;top:534px;width:66px;height:1px;background:#a0a0a0;"></div>
<div class="a" style="left:650px;top:534px;width:1px;height:20px;background:#a0a0a0;"></div>
<div class="a" style="left:651px;top:535px;width:64px;height:1px;background:#696969;"></div>
<div class="a" style="left:651px;top:535px;width:1px;height:18px;background:#696969;"></div>
<div class="a" style="left:651px;top:553px;width:65px;height:1px;background:#e3e3e3;"></div>
<div class="a" style="left:715px;top:535px;width:1px;height:19px;background:#e3e3e3;"></div>
<div class="a" style="left:698px;top:536px;width:17px;height:17px;background:#f0f0f0;"></div>
<div class="a" style="left:698px;top:552px;width:17px;height:1px;background:#696969;"></div>
<div class="a" style="left:714px;top:536px;width:1px;height:17px;background:#696969;"></div>
<div class="a" style="left:698px;top:551px;width:16px;height:1px;background:#a0a0a0;"></div>
<div class="a" style="left:713px;top:536px;width:1px;height:16px;background:#a0a0a0;"></div>
<svg class="a" style="left:702px;top:543px;" width="9" height="5" viewBox="0 0 9 5"><path d="M0 0.3 H8 L4 4.6Z" fill="#000"/></svg>
<div class="t" style="left:654.50px;top:540px;font-size:10px;color:#000;font-weight:400;">-</div>
<div class="a" style="left:720px;top:534px;width:50px;height:21px;background:#fff;"></div>
<div class="a" style="left:720px;top:534px;width:49px;height:1px;background:#a0a0a0;"></div>
<div class="a" style="left:720px;top:534px;width:1px;height:20px;background:#a0a0a0;"></div>
<div class="a" style="left:721px;top:535px;width:47px;height:1px;background:#696969;"></div>
<div class="a" style="left:721px;top:535px;width:1px;height:18px;background:#696969;"></div>
<div class="a" style="left:721px;top:553px;width:48px;height:1px;background:#e3e3e3;"></div>
<div class="a" style="left:768px;top:535px;width:1px;height:19px;background:#e3e3e3;"></div>
<div class="a" style="left:751px;top:536px;width:17px;height:17px;background:#f0f0f0;"></div>
<div class="a" style="left:751px;top:552px;width:17px;height:1px;background:#696969;"></div>
<div class="a" style="left:767px;top:536px;width:1px;height:17px;background:#696969;"></div>
<div class="a" style="left:751px;top:551px;width:16px;height:1px;background:#a0a0a0;"></div>
<div class="a" style="left:766px;top:536px;width:1px;height:16px;background:#a0a0a0;"></div>
<svg class="a" style="left:755px;top:543px;" width="9" height="5" viewBox="0 0 9 5"><path d="M0 0.3 H8 L4 4.6Z" fill="#000"/></svg>
<div class="t" style="left:724.50px;top:540px;font-size:10px;color:#000;font-weight:400;">-</div>
<svg class="a" style="left:774px;top:534px;" width="17" height="21" viewBox="0 0 17 21"><rect width="17" height="21" fill="#5c5c5e"/><rect x="2.5" y="8.5" width="12" height="4" fill="#fff" stroke="#000" stroke-width="0.6"/></svg>
<div class="t" style="left:632.20px;top:571px;font-size:13px;color:#fff;transform:scaleX(1.1609);-webkit-text-stroke:0.3px #fff;text-shadow:1px 0 #000,-1px 0 #000,0 1px #000,0 -1px #000;">Axis Total =</div>
<div class="t" style="left:747.61px;top:569px;font-size:16.5px;color:#1ee01e;-webkit-text-stroke:0.1px #1ee01e;">0</div>
<div class="a" style="left:807px;top:319px;width:188px;height:244px;box-sizing:border-box;border:1px solid #fafafa;border-radius:4px;"></div>
<div class="a" style="left:807px;top:563px;width:188px;height:30px;box-sizing:border-box;border:1px solid #fafafa;border-radius:5px;"></div>
<div class="t" style="left:875.35px;top:299px;font-size:16.5px;color:#fff;transform:scaleX(0.9435);-webkit-text-stroke:0.3px #fff;">Axis5a</div>
<div class="t" style="left:819.90px;top:327px;font-size:14.5px;color:#fff;transform:scaleX(0.9434);-webkit-text-stroke:0.3px #fff;text-shadow:1px 0 #000,-1px 0 #000,0 1px #000,0 -1px #000;">Dir</div>
<div class="t" style="left:857.90px;top:327px;font-size:14.5px;color:#fff;transform:scaleX(0.9422);-webkit-text-stroke:0.3px #fff;text-shadow:1px 0 #000,-1px 0 #000,0 1px #000,0 -1px #000;">Force</div>
<div class="t" style="left:931.90px;top:327px;font-size:14.5px;color:#fff;-webkit-text-stroke:0.3px #fff;text-shadow:1px 0 #000,-1px 0 #000,0 1px #000,0 -1px #000;">%</div>
<div class="t" style="left:965.70px;top:327px;font-size:14.5px;color:#fff;transform:scaleX(0.9594);-webkit-text-stroke:0.3px #fff;text-shadow:1px 0 #000,-1px 0 #000,0 1px #000,0 -1px #000;">Flt</div>
<svg class="a" style="left:819px;top:345px;" width="21" height="21" viewBox="0 0 21 21"><rect width="21" height="21" fill="#5b6e59"/><g fill="#fff" stroke="#000" stroke-width="1.15" stroke-linejoin="miter" stroke-miterlimit="6">
<path d="M1.7 4.8 H14 V2 L19.7 6.7 L14 11.3 V8.6 H1.7Z"/>
<path d="M1.7 13.3 H14 V10.6 L19.7 15.2 L14 19.8 V17.1 H1.7Z"/></g></svg>
<div class="a" style="left:843px;top:345px;width:67px;height:21px;background:#fff;"></div>
<div class="a" style="left:843px;top:345px;width:66px;height:1px;background:#a0a0a0;"></div>
<div class="a" style="left:843px;top:345px;width:1px;height:20px;background:#a0a0a0;"></div>
<div class="a" style="left:844px;top:346px;width:64px;height:1px;background:#696969;"></div>
<div class="a" style="left:844px;top:346px;width:1px;height:18px;background:#696969;"></div>
<div class="a" style="left:844px;top:364px;width:65px;height:1px;background:#e3e3e3;"></div>
<div class="a" style="left:908px;top:346px;width:1px;height:19px;background:#e3e3e3;"></div>
<div class="a" style="left:891px;top:347px;width:17px;height:17px;background:#f0f0f0;"></div>
<div class="a" style="left:891px;top:363px;width:17px;height:1px;background:#696969;"></div>
<div class="a" style="left:907px;top:347px;width:1px;height:17px;background:#696969;"></div>
<div class="a" style="left:891px;top:362px;width:16px;height:1px;background:#a0a0a0;"></div>
<div class="a" style="left:906px;top:347px;width:1px;height:16px;background:#a0a0a0;"></div>
<svg class="a" style="left:895px;top:354px;" width="9" height="5" viewBox="0 0 9 5"><path d="M0 0.3 H8 L4 4.6Z" fill="#000"/></svg>
<div class="t" style="left:847.50px;top:351px;font-size:10px;color:#000;font-weight:400;">-</div>
<div class="a" style="left:913px;top:345px;width:50px;height:21px;background:#fff;"></div>
<div class="a" style="left:913px;top:345px;width:49px;height:1px;background:#a0a0a0;"></div>
<div class="a" style="left:913px;top:345px;width:1px;height:20px;background:#a0a0a0;"></div>
<div class="a" style="left:914px;top:346px;width:47px;height:1px;background:#696969;"></div>
<div class="a" style="left:914px;top:346px;width:1px;height:18px;background:#696969;"></div>
<div class="a" style="left:914px;top:364px;width:48px;height:1px;background:#e3e3e3;"></div>
<div class="a" style="left:961px;top:346px;width:1px;height:19px;background:#e3e3e3;"></div>
<div class="a" style="left:944px;top:347px;width:17px;height:17px;background:#f0f0f0;"></div>
<div class="a" style="left:944px;top:363px;width:17px;height:1px;background:#696969;"></div>
<div class="a" style="left:960px;top:347px;width:1px;height:17px;background:#696969;"></div>
<div class="a" style="left:944px;top:362px;width:16px;height:1px;background:#a0a0a0;"></div>
<div class="a" style="left:959px;top:347px;width:1px;height:16px;background:#a0a0a0;"></div>
<svg class="a" style="left:948px;top:354px;" width="9" height="5" viewBox="0 0 9 5"><path d="M0 0.3 H8 L4 4.6Z" fill="#000"/></svg>
<div class="t" style="left:917.50px;top:351px;font-size:10px;color:#000;font-weight:400;">-</div>
<svg class="a" style="left:967px;top:345px;" width="17" height="21" viewBox="0 0 17 21"><rect width="17" height="21" fill="#5c5c5e"/><rect x="2.5" y="8.5" width="12" height="4" fill="#fff" stroke="#000" stroke-width="0.6"/></svg>
<svg class="a" style="left:819px;top:372px;" width="21" height="21" viewBox="0 0 21 21"><rect width="21" height="21" fill="#5b6e59"/><g fill="#fff" stroke="#000" stroke-width="1.15" stroke-linejoin="miter" stroke-miterlimit="6">
<path d="M1.7 4.8 H14 V2 L19.7 6.7 L14 11.3 V8.6 H1.7Z"/>
<path d="M1.7 13.3 H14 V10.6 L19.7 15.2 L14 19.8 V17.1 H1.7Z"/></g></svg>
<div class="a" style="left:843px;top:372px;width:67px;height:21px;background:#fff;"></div>
<div class="a" style="left:843px;top:372px;width:66px;height:1px;background:#a0a0a0;"></div>
<div class="a" style="left:843px;top:372px;width:1px;height:20px;background:#a0a0a0;"></div>
<div class="a" style="left:844px;top:373px;width:64px;height:1px;background:#696969;"></div>
<div class="a" style="left:844px;top:373px;width:1px;height:18px;background:#696969;"></div>
<div class="a" style="left:844px;top:391px;width:65px;height:1px;background:#e3e3e3;"></div>
<div class="a" style="left:908px;top:373px;width:1px;height:19px;background:#e3e3e3;"></div>
<div class="a" style="left:891px;top:374px;width:17px;height:17px;background:#f0f0f0;"></div>
<div class="a" style="left:891px;top:390px;width:17px;height:1px;background:#696969;"></div>
<div class="a" style="left:907px;top:374px;width:1px;height:17px;background:#696969;"></div>
<div class="a" style="left:891px;top:389px;width:16px;height:1px;background:#a0a0a0;"></div>
<div class="a" style="left:906px;top:374px;width:1px;height:16px;background:#a0a0a0;"></div>
<svg class="a" style="left:895px;top:381px;" width="9" height="5" viewBox="0 0 9 5"><path d="M0 0.3 H8 L4 4.6Z" fill="#000"/></svg>
<div class="t" style="left:847.50px;top:378px;font-size:10px;color:#000;font-weight:400;">-</div>
<div class="a" style="left:913px;top:372px;width:50px;height:21px;background:#fff;"></div>
<div class="a" style="left:913px;top:372px;width:49px;height:1px;background:#a0a0a0;"></div>
<div class="a" style="left:913px;top:372px;width:1px;height:20px;background:#a0a0a0;"></div>
<div class="a" style="left:914px;top:373px;width:47px;height:1px;background:#696969;"></div>
<div class="a" style="left:914px;top:373px;width:1px;height:18px;background:#696969;"></div>
<div class="a" style="left:914px;top:391px;width:48px;height:1px;background:#e3e3e3;"></div>
<div class="a" style="left:961px;top:373px;width:1px;height:19px;background:#e3e3e3;"></div>
<div class="a" style="left:944px;top:374px;width:17px;height:17px;background:#f0f0f0;"></div>
<div class="a" style="left:944px;top:390px;width:17px;height:1px;background:#696969;"></div>
<div class="a" style="left:960px;top:374px;width:1px;height:17px;background:#696969;"></div>
<div class="a" style="left:944px;top:389px;width:16px;height:1px;background:#a0a0a0;"></div>
<div class="a" style="left:959px;top:374px;width:1px;height:16px;background:#a0a0a0;"></div>
<svg class="a" style="left:948px;top:381px;" width="9" height="5" viewBox="0 0 9 5"><path d="M0 0.3 H8 L4 4.6Z" fill="#000"/></svg>
<div class="t" style="left:917.50px;top:378px;font-size:10px;color:#000;font-weight:400;">-</div>
<svg class="a" style="left:967px;top:372px;" width="17" height="21" viewBox="0 0 17 21"><rect width="17" height="21" fill="#5c5c5e"/><rect x="2.5" y="8.5" width="12" height="4" fill="#fff" stroke="#000" stroke-width="0.6"/></svg>
<svg class="a" style="left:819px;top:399px;" width="21" height="21" viewBox="0 0 21 21"><rect width="21" height="21" fill="#5b6e59"/><g fill="#fff" stroke="#000" stroke-width="1.15" stroke-linejoin="miter" stroke-miterlimit="6">
<path d="M1.7 4.8 H14 V2 L19.7 6.7 L14 11.3 V8.6 H1.7Z"/>
<path d="M1.7 13.3 H14 V10.6 L19.7 15.2 L14 19.8 V17.1 H1.7Z"/></g></svg>
<div class="a" style="left:843px;top:399px;width:67px;height:21px;background:#fff;"></div>
<div class="a" style="left:843px;top:399px;width:66px;height:1px;background:#a0a0a0;"></div>
<div class="a" style="left:843px;top:399px;width:1px;height:20px;background:#a0a0a0;"></div>
<div class="a" style="left:844px;top:400px;width:64px;height:1px;background:#696969;"></div>
<div class="a" style="left:844px;top:400px;width:1px;height:18px;background:#696969;"></div>
<div class="a" style="left:844px;top:418px;width:65px;height:1px;background:#e3e3e3;"></div>
<div class="a" style="left:908px;top:400px;width:1px;height:19px;background:#e3e3e3;"></div>
<div class="a" style="left:891px;top:401px;width:17px;height:17px;background:#f0f0f0;"></div>
<div class="a" style="left:891px;top:417px;width:17px;height:1px;background:#696969;"></div>
<div class="a" style="left:907px;top:401px;width:1px;height:17px;background:#696969;"></div>
<div class="a" style="left:891px;top:416px;width:16px;height:1px;background:#a0a0a0;"></div>
<div class="a" style="left:906px;top:401px;width:1px;height:16px;background:#a0a0a0;"></div>
<svg class="a" style="left:895px;top:408px;" width="9" height="5" viewBox="0 0 9 5"><path d="M0 0.3 H8 L4 4.6Z" fill="#000"/></svg>
<div class="t" style="left:847.50px;top:405px;font-size:10px;color:#000;font-weight:400;">-</div>
<div class="a" style="left:913px;top:399px;width:50px;height:21px;background:#fff;"></div>
<div class="a" style="left:913px;top:399px;width:49px;height:1px;background:#a0a0a0;"></div>
<div class="a" style="left:913px;top:399px;width:1px;height:20px;background:#a0a0a0;"></div>
<div class="a" style="left:914px;top:400px;width:47px;height:1px;background:#696969;"></div>
<div class="a" style="left:914px;top:400px;width:1px;height:18px;background:#696969;"></div>
<div class="a" style="left:914px;top:418px;width:48px;height:1px;background:#e3e3e3;"></div>
<div class="a" style="left:961px;top:400px;width:1px;height:19px;background:#e3e3e3;"></div>
<div class="a" style="left:944px;top:401px;width:17px;height:17px;background:#f0f0f0;"></div>
<div class="a" style="left:944px;top:417px;width:17px;height:1px;background:#696969;"></div>
<div class="a" style="left:960px;top:401px;width:1px;height:17px;background:#696969;"></div>
<div class="a" style="left:944px;top:416px;width:16px;height:1px;background:#a0a0a0;"></div>
<div class="a" style="left:959px;top:401px;width:1px;height:16px;background:#a0a0a0;"></div>
<svg class="a" style="left:948px;top:408px;" width="9" height="5" viewBox="0 0 9 5"><path d="M0 0.3 H8 L4 4.6Z" fill="#000"/></svg>
<div class="t" style="left:917.50px;top:405px;font-size:10px;color:#000;font-weight:400;">-</div>
<svg class="a" style="left:967px;top:399px;" width="17" height="21" viewBox="0 0 17 21"><rect width="17" height="21" fill="#5c5c5e"/><rect x="2.5" y="8.5" width="12" height="4" fill="#fff" stroke="#000" stroke-width="0.6"/></svg>
<svg class="a" style="left:819px;top:426px;" width="21" height="21" viewBox="0 0 21 21"><rect width="21" height="21" fill="#5b6e59"/><g fill="#fff" stroke="#000" stroke-width="1.15" stroke-linejoin="miter" stroke-miterlimit="6">
<path d="M1.7 4.8 H14 V2 L19.7 6.7 L14 11.3 V8.6 H1.7Z"/>
<path d="M1.7 13.3 H14 V10.6 L19.7 15.2 L14 19.8 V17.1 H1.7Z"/></g></svg>
<div class="a" style="left:843px;top:426px;width:67px;height:21px;background:#fff;"></div>
<div class="a" style="left:843px;top:426px;width:66px;height:1px;background:#a0a0a0;"></div>
<div class="a" style="left:843px;top:426px;width:1px;height:20px;background:#a0a0a0;"></div>
<div class="a" style="left:844px;top:427px;width:64px;height:1px;background:#696969;"></div>
<div class="a" style="left:844px;top:427px;width:1px;height:18px;background:#696969;"></div>
<div class="a" style="left:844px;top:445px;width:65px;height:1px;background:#e3e3e3;"></div>
<div class="a" style="left:908px;top:427px;width:1px;height:19px;background:#e3e3e3;"></div>
<div class="a" style="left:891px;top:428px;width:17px;height:17px;background:#f0f0f0;"></div>
<div class="a" style="left:891px;top:444px;width:17px;height:1px;background:#696969;"></div>
<div class="a" style="left:907px;top:428px;width:1px;height:17px;background:#696969;"></div>
<div class="a" style="left:891px;top:443px;width:16px;height:1px;background:#a0a0a0;"></div>
<div class="a" style="left:906px;top:428px;width:1px;height:16px;background:#a0a0a0;"></div>
<svg class="a" style="left:895px;top:435px;" width="9" height="5" viewBox="0 0 9 5"><path d="M0 0.3 H8 L4 4.6Z" fill="#000"/></svg>
<div class="t" style="left:847.50px;top:432px;font-size:10px;color:#000;font-weight:400;">-</div>
<div class="a" style="left:913px;top:426px;width:50px;height:21px;background:#fff;"></div>
<div class="a" style="left:913px;top:426px;width:49px;height:1px;background:#a0a0a0;"></div>
<div class="a" style="left:913px;top:426px;width:1px;height:20px;background:#a0a0a0;"></div>
<div class="a" style="left:914px;top:427px;width:47px;height:1px;background:#696969;"></div>
<div class="a" style="left:914px;top:427px;width:1px;height:18px;background:#696969;"></div>
<div class="a" style="left:914px;top:445px;width:48px;height:1px;background:#e3e3e3;"></div>
<div class="a" style="left:961px;top:427px;width:1px;height:19px;background:#e3e3e3;"></div>
<div class="a" style="left:944px;top:428px;width:17px;height:17px;background:#f0f0f0;"></div>
<div class="a" style="left:944px;top:444px;width:17px;height:1px;background:#696969;"></div>
<div class="a" style="left:960px;top:428px;width:1px;height:17px;background:#696969;"></div>
<div class="a" style="left:944px;top:443px;width:16px;height:1px;background:#a0a0a0;"></div>
<div class="a" style="left:959px;top:428px;width:1px;height:16px;background:#a0a0a0;"></div>
<svg class="a" style="left:948px;top:435px;" width="9" height="5" viewBox="0 0 9 5"><path d="M0 0.3 H8 L4 4.6Z" fill="#000"/></svg>
<div class="t" style="left:917.50px;top:432px;font-size:10px;color:#000;font-weight:400;">-</div>
<svg class="a" style="left:967px;top:426px;" width="17" height="21" viewBox="0 0 17 21"><rect width="17" height="21" fill="#5c5c5e"/><rect x="2.5" y="8.5" width="12" height="4" fill="#fff" stroke="#000" stroke-width="0.6"/></svg>
<svg class="a" style="left:819px;top:453px;" width="21" height="21" viewBox="0 0 21 21"><rect width="21" height="21" fill="#5b6e59"/><g fill="#fff" stroke="#000" stroke-width="1.15" stroke-linejoin="miter" stroke-miterlimit="6">
<path d="M1.7 4.8 H14 V2 L19.7 6.7 L14 11.3 V8.6 H1.7Z"/>
<path d="M1.7 13.3 H14 V10.6 L19.7 15.2 L14 19.8 V17.1 H1.7Z"/></g></svg>
<div class="a" style="left:843px;top:453px;width:67px;height:21px;background:#fff;"></div>
<div class="a" style="left:843px;top:453px;width:66px;height:1px;background:#a0a0a0;"></div>
<div class="a" style="left:843px;top:453px;width:1px;height:20px;background:#a0a0a0;"></div>
<div class="a" style="left:844px;top:454px;width:64px;height:1px;background:#696969;"></div>
<div class="a" style="left:844px;top:454px;width:1px;height:18px;background:#696969;"></div>
<div class="a" style="left:844px;top:472px;width:65px;height:1px;background:#e3e3e3;"></div>
<div class="a" style="left:908px;top:454px;width:1px;height:19px;background:#e3e3e3;"></div>
<div class="a" style="left:891px;top:455px;width:17px;height:17px;background:#f0f0f0;"></div>
<div class="a" style="left:891px;top:471px;width:17px;height:1px;background:#696969;"></div>
<div class="a" style="left:907px;top:455px;width:1px;height:17px;background:#696969;"></div>
<div class="a" style="left:891px;top:470px;width:16px;height:1px;background:#a0a0a0;"></div>
<div class="a" style="left:906px;top:455px;width:1px;height:16px;background:#a0a0a0;"></div>
<svg class="a" style="left:895px;top:462px;" width="9" height="5" viewBox="0 0 9 5"><path d="M0 0.3 H8 L4 4.6Z" fill="#000"/></svg>
<div class="t" style="left:847.50px;top:459px;font-size:10px;color:#000;font-weight:400;">-</div>
<div class="a" style="left:913px;top:453px;width:50px;height:21px;background:#fff;"></div>
<div class="a" style="left:913px;top:453px;width:49px;height:1px;background:#a0a0a0;"></div>
<div class="a" style="left:913px;top:453px;width:1px;height:20px;background:#a0a0a0;"></div>
<div class="a" style="left:914px;top:454px;width:47px;height:1px;background:#696969;"></div>
<div class="a" style="left:914px;top:454px;width:1px;height:18px;background:#696969;"></div>
<div class="a" style="left:914px;top:472px;width:48px;height:1px;background:#e3e3e3;"></div>
<div class="a" style="left:961px;top:454px;width:1px;height:19px;background:#e3e3e3;"></div>
<div class="a" style="left:944px;top:455px;width:17px;height:17px;background:#f0f0f0;"></div>
<div class="a" style="left:944px;top:471px;width:17px;height:1px;background:#696969;"></div>
<div class="a" style="left:960px;top:455px;width:1px;height:17px;background:#696969;"></div>
<div class="a" style="left:944px;top:470px;width:16px;height:1px;background:#a0a0a0;"></div>
<div class="a" style="left:959px;top:455px;width:1px;height:16px;background:#a0a0a0;"></div>
<svg class="a" style="left:948px;top:462px;" width="9" height="5" viewBox="0 0 9 5"><path d="M0 0.3 H8 L4 4.6Z" fill="#000"/></svg>
<div class="t" style="left:917.50px;top:459px;font-size:10px;color:#000;font-weight:400;">-</div>
<svg class="a" style="left:967px;top:453px;" width="17" height="21" viewBox="0 0 17 21"><rect width="17" height="21" fill="#5c5c5e"/><rect x="2.5" y="8.5" width="12" height="4" fill="#fff" stroke="#000" stroke-width="0.6"/></svg>
<svg class="a" style="left:819px;top:480px;" width="21" height="21" viewBox="0 0 21 21"><rect width="21" height="21" fill="#5b6e59"/><g fill="#fff" stroke="#000" stroke-width="1.15" stroke-linejoin="miter" stroke-miterlimit="6">
<path d="M1.7 4.8 H14 V2 L19.7 6.7 L14 11.3 V8.6 H1.7Z"/>
<path d="M1.7 13.3 H14 V10.6 L19.7 15.2 L14 19.8 V17.1 H1.7Z"/></g></svg>
<div class="a" style="left:843px;top:480px;width:67px;height:21px;background:#fff;"></div>
<div class="a" style="left:843px;top:480px;width:66px;height:1px;background:#a0a0a0;"></div>
<div class="a" style="left:843px;top:480px;width:1px;height:20px;background:#a0a0a0;"></div>
<div class="a" style="left:844px;top:481px;width:64px;height:1px;background:#696969;"></div>
<div class="a" style="left:844px;top:481px;width:1px;height:18px;background:#696969;"></div>
<div class="a" style="left:844px;top:499px;width:65px;height:1px;background:#e3e3e3;"></div>
<div class="a" style="left:908px;top:481px;width:1px;height:19px;background:#e3e3e3;"></div>
<div class="a" style="left:891px;top:482px;width:17px;height:17px;background:#f0f0f0;"></div>
<div class="a" style="left:891px;top:498px;width:17px;height:1px;background:#696969;"></div>
<div class="a" style="left:907px;top:482px;width:1px;height:17px;background:#696969;"></div>
<div class="a" style="left:891px;top:497px;width:16px;height:1px;background:#a0a0a0;"></div>
<div class="a" style="left:906px;top:482px;width:1px;height:16px;background:#a0a0a0;"></div>
<svg class="a" style="left:895px;top:489px;" width="9" height="5" viewBox="0 0 9 5"><path d="M0 0.3 H8 L4 4.6Z" fill="#000"/></svg>
<div class="t" style="left:847.50px;top:486px;font-size:10px;color:#000;font-weight:400;">-</div>
<div class="a" style="left:913px;top:480px;width:50px;height:21px;background:#fff;"></div>
<div class="a" style="left:913px;top:480px;width:49px;height:1px;background:#a0a0a0;"></div>
<div class="a" style="left:913px;top:480px;width:1px;height:20px;background:#a0a0a0;"></div>
<div class="a" style="left:914px;top:481px;width:47px;height:1px;background:#696969;"></div>
<div class="a" style="left:914px;top:481px;width:1px;height:18px;background:#696969;"></div>
<div class="a" style="left:914px;top:499px;width:48px;height:1px;background:#e3e3e3;"></div>
<div class="a" style="left:961px;top:481px;width:1px;height:19px;background:#e3e3e3;"></div>
<div class="a" style="left:944px;top:482px;width:17px;height:17px;background:#f0f0f0;"></div>
<div class="a" style="left:944px;top:498px;width:17px;height:1px;background:#696969;"></div>
<div class="a" style="left:960px;top:482px;width:1px;height:17px;background:#696969;"></div>
<div class="a" style="left:944px;top:497px;width:16px;height:1px;background:#a0a0a0;"></div>
<div class="a" style="left:959px;top:482px;width:1px;height:16px;background:#a0a0a0;"></div>
<svg class="a" style="left:948px;top:489px;" width="9" height="5" viewBox="0 0 9 5"><path d="M0 0.3 H8 L4 4.6Z" fill="#000"/></svg>
<div class="t" style="left:917.50px;top:486px;font-size:10px;color:#000;font-weight:400;">-</div>
<svg class="a" style="left:967px;top:480px;" width="17" height="21" viewBox="0 0 17 21"><rect width="17" height="21" fill="#5c5c5e"/><rect x="2.5" y="8.5" width="12" height="4" fill="#fff" stroke="#000" stroke-width="0.6"/></svg>
<svg class="a" style="left:819px;top:507px;" width="21" height="21" viewBox="0 0 21 21"><rect width="21" height="21" fill="#5b6e59"/><g fill="#fff" stroke="#000" stroke-width="1.15" stroke-linejoin="miter" stroke-miterlimit="6">
<path d="M1.7 4.8 H14 V2 L19.7 6.7 L14 11.3 V8.6 H1.7Z"/>
<path d="M1.7 13.3 H14 V10.6 L19.7 15.2 L14 19.8 V17.1 H1.7Z"/></g></svg>
<div class="a" style="left:843px;top:507px;width:67px;height:21px;background:#fff;"></div>
<div class="a" style="left:843px;top:507px;width:66px;height:1px;background:#a0a0a0;"></div>
<div class="a" style="left:843px;top:507px;width:1px;height:20px;background:#a0a0a0;"></div>
<div class="a" style="left:844px;top:508px;width:64px;height:1px;background:#696969;"></div>
<div class="a" style="left:844px;top:508px;width:1px;height:18px;background:#696969;"></div>
<div class="a" style="left:844px;top:526px;width:65px;height:1px;background:#e3e3e3;"></div>
<div class="a" style="left:908px;top:508px;width:1px;height:19px;background:#e3e3e3;"></div>
<div class="a" style="left:891px;top:509px;width:17px;height:17px;background:#f0f0f0;"></div>
<div class="a" style="left:891px;top:525px;width:17px;height:1px;background:#696969;"></div>
<div class="a" style="left:907px;top:509px;width:1px;height:17px;background:#696969;"></div>
<div class="a" style="left:891px;top:524px;width:16px;height:1px;background:#a0a0a0;"></div>
<div class="a" style="left:906px;top:509px;width:1px;height:16px;background:#a0a0a0;"></div>
<svg class="a" style="left:895px;top:516px;" width="9" height="5" viewBox="0 0 9 5"><path d="M0 0.3 H8 L4 4.6Z" fill="#000"/></svg>
<div class="t" style="left:847.50px;top:513px;font-size:10px;color:#000;font-weight:400;">-</div>
<div class="a" style="left:913px;top:507px;width:50px;height:21px;background:#fff;"></div>
<div class="a" style="left:913px;top:507px;width:49px;height:1px;background:#a0a0a0;"></div>
<div class="a" style="left:913px;top:507px;width:1px;height:20px;background:#a0a0a0;"></div>
<div class="a" style="left:914px;top:508px;width:47px;height:1px;background:#696969;"></div>
<div class="a" style="left:914px;top:508px;width:1px;height:18px;background:#696969;"></div>
<div class="a" style="left:914px;top:526px;width:48px;height:1px;background:#e3e3e3;"></div>
<div class="a" style="left:961px;top:508px;width:1px;height:19px;background:#e3e3e3;"></div>
<div class="a" style="left:944px;top:509px;width:17px;height:17px;background:#f0f0f0;"></div>
<div class="a" style="left:944px;top:525px;width:17px;height:1px;background:#696969;"></div>
<div class="a" style="left:960px;top:509px;width:1px;height:17px;background:#696969;"></div>
<div class="a" style="left:944px;top:524px;width:16px;height:1px;background:#a0a0a0;"></div>
<div class="a" style="left:959px;top:509px;width:1px;height:16px;background:#a0a0a0;"></div>
<svg class="a" style="left:948px;top:516px;" width="9" height="5" viewBox="0 0 9 5"><path d="M0 0.3 H8 L4 4.6Z" fill="#000"/></svg>
<div class="t" style="left:917.50px;top:513px;font-size:10px;color:#000;font-weight:400;">-</div>
<svg class="a" style="left:967px;top:507px;" width="17" height="21" viewBox="0 0 17 21"><rect width="17" height="21" fill="#5c5c5e"/><rect x="2.5" y="8.5" width="12" height="4" fill="#fff" stroke="#000" stroke-width="0.6"/></svg>
<svg class="a" style="left:819px;top:534px;" width="21" height="21" viewBox="0 0 21 21"><rect width="21" height="21" fill="#5b6e59"/><g fill="#fff" stroke="#000" stroke-width="1.15" stroke-linejoin="miter" stroke-miterlimit="6">
<path d="M1.7 4.8 H14 V2 L19.7 6.7 L14 11.3 V8.6 H1.7Z"/>
<path d="M1.7 13.3 H14 V10.6 L19.7 15.2 L14 19.8 V17.1 H1.7Z"/></g></svg>
<div class="a" style="left:843px;top:534px;width:67px;height:21px;background:#fff;"></div>
<div class="a" style="left:843px;top:534px;width:66px;height:1px;background:#a0a0a0;"></div>
<div class="a" style="left:843px;top:534px;width:1px;height:20px;background:#a0a0a0;"></div>
<div class="a" style="left:844px;top:535px;width:64px;height:1px;background:#696969;"></div>
<div class="a" style="left:844px;top:535px;width:1px;height:18px;background:#696969;"></div>
<div class="a" style="left:844px;top:553px;width:65px;height:1px;background:#e3e3e3;"></div>
<div class="a" style="left:908px;top:535px;width:1px;height:19px;background:#e3e3e3;"></div>
<div class="a" style="left:891px;top:536px;width:17px;height:17px;background:#f0f0f0;"></div>
<div class="a" style="left:891px;top:552px;width:17px;height:1px;background:#696969;"></div>
<div class="a" style="left:907px;top:536px;width:1px;height:17px;background:#696969;"></div>
<div class="a" style="left:891px;top:551px;width:16px;height:1px;background:#a0a0a0;"></div>
<div class="a" style="left:906px;top:536px;width:1px;height:16px;background:#a0a0a0;"></div>
<svg class="a" style="left:895px;top:543px;" width="9" height="5" viewBox="0 0 9 5"><path d="M0 0.3 H8 L4 4.6Z" fill="#000"/></svg>
<div class="t" style="left:847.50px;top:540px;font-size:10px;color:#000;font-weight:400;">-</div>
<div class="a" style="left:913px;top:534px;width:50px;height:21px;background:#fff;"></div>
<div class="a" style="left:913px;top:534px;width:49px;height:1px;background:#a0a0a0;"></div>
<div class="a" style="left:913px;top:534px;width:1px;height:20px;background:#a0a0a0;"></div>
<div class="a" style="left:914px;top:535px;width:47px;height:1px;background:#696969;"></div>
<div class="a" style="left:914px;top:535px;width:1px;height:18px;background:#696969;"></div>
<div class="a" style="left:914px;top:553px;width:48px;height:1px;background:#e3e3e3;"></div>
<div class="a" style="left:961px;top:535px;width:1px;height:19px;background:#e3e3e3;"></div>
<div class="a" style="left:944px;top:536px;width:17px;height:17px;background:#f0f0f0;"></div>
<div class="a" style="left:944px;top:552px;width:17px;height:1px;background:#696969;"></div>
<div class="a" style="left:960px;top:536px;width:1px;height:17px;background:#696969;"></div>
<div class="a" style="left:944px;top:551px;width:16px;height:1px;background:#a0a0a0;"></div>
<div class="a" style="left:959px;top:536px;width:1px;height:16px;background:#a0a0a0;"></div>
<svg class="a" style="left:948px;top:543px;" width="9" height="5" viewBox="0 0 9 5"><path d="M0 0.3 H8 L4 4.6Z" fill="#000"/></svg>
<div class="t" style="left:917.50px;top:540px;font-size:10px;color:#000;font-weight:400;">-</div>
<svg class="a" style="left:967px;top:534px;" width="17" height="21" viewBox="0 0 17 21"><rect width="17" height="21" fill="#5c5c5e"/><rect x="2.5" y="8.5" width="12" height="4" fill="#fff" stroke="#000" stroke-width="0.6"/></svg>
<div class="t" style="left:825.20px;top:571px;font-size:13px;color:#fff;transform:scaleX(1.1609);-webkit-text-stroke:0.3px #fff;text-shadow:1px 0 #000,-1px 0 #000,0 1px #000,0 -1px #000;">Axis Total =</div>
<div class="t" style="left:940.61px;top:569px;font-size:16.5px;color:#1ee01e;-webkit-text-stroke:0.1px #1ee01e;">0</div>
<div class="a" style="left:1000px;top:319px;width:188px;height:244px;box-sizing:border-box;border:1px solid #fafafa;border-radius:4px;"></div>
<div class="a" style="left:1000px;top:563px;width:188px;height:30px;box-sizing:border-box;border:1px solid #fafafa;border-radius:5px;"></div>
<div class="t" style="left:1068.35px;top:299px;font-size:16.5px;color:#fff;transform:scaleX(0.9435);-webkit-text-stroke:0.3px #fff;">Axis6a</div>
<div class="t" style="left:1012.90px;top:327px;font-size:14.5px;color:#fff;transform:scaleX(0.9434);-webkit-text-stroke:0.3px #fff;text-shadow:1px 0 #000,-1px 0 #000,0 1px #000,0 -1px #000;">Dir</div>
<div class="t" style="left:1050.90px;top:327px;font-size:14.5px;color:#fff;transform:scaleX(0.9422);-webkit-text-stroke:0.3px #fff;text-shadow:1px 0 #000,-1px 0 #000,0 1px #000,0 -1px #000;">Force</div>
<div class="t" style="left:1124.90px;top:327px;font-size:14.5px;color:#fff;-webkit-text-stroke:0.3px #fff;text-shadow:1px 0 #000,-1px 0 #000,0 1px #000,0 -1px #000;">%</div>
<div class="t" style="left:1158.70px;top:327px;font-size:14.5px;color:#fff;transform:scaleX(0.9594);-webkit-text-stroke:0.3px #fff;text-shadow:1px 0 #000,-1px 0 #000,0 1px #000,0 -1px #000;">Flt</div>
<svg class="a" style="left:1012px;top:345px;" width="21" height="21" viewBox="0 0 21 21"><rect width="21" height="21" fill="#5b6e59"/><g fill="#fff" stroke="#000" stroke-width="1.15" stroke-linejoin="miter" stroke-miterlimit="6">
<path d="M1.7 4.8 H14 V2 L19.7 6.7 L14 11.3 V8.6 H1.7Z"/>
<path d="M1.7 13.3 H14 V10.6 L19.7 15.2 L14 19.8 V17.1 H1.7Z"/></g></svg>
<div class="a" style="left:1036px;top:345px;width:67px;height:21px;background:#fff;"></div>
<div class="a" style="left:1036px;top:345px;width:66px;height:1px;background:#a0a0a0;"></div>
<div class="a" style="left:1036px;top:345px;width:1px;height:20px;background:#a0a0a0;"></div>
<div class="a" style="left:1037px;top:346px;width:64px;height:1px;background:#696969;"></div>
<div class="a" style="left:1037px;top:346px;width:1px;height:18px;background:#696969;"></div>
<div class="a" style="left:1037px;top:364px;width:65px;height:1px;background:#e3e3e3;"></div>
<div class="a" style="left:1101px;top:346px;width:1px;height:19px;background:#e3e3e3;"></div>
<div class="a" style="left:1084px;top:347px;width:17px;height:17px;background:#f0f0f0;"></div>
<div class="a" style="left:1084px;top:363px;width:17px;height:1px;background:#696969;"></div>
<div class="a" style="left:1100px;top:347px;width:1px;height:17px;background:#696969;"></div>
<div class="a" style="left:1084px;top:362px;width:16px;height:1px;background:#a0a0a0;"></div>
<div class="a" style="left:1099px;top:347px;width:1px;height:16px;background:#a0a0a0;"></div>
<svg class="a" style="left:1088px;top:354px;" width="9" height="5" viewBox="0 0 9 5"><path d="M0 0.3 H8 L4 4.6Z" fill="#000"/></svg>
<div class="t" style="left:1040.50px;top:351px;font-size:10px;color:#000;font-weight:400;">-</div>
<div class="a" style="left:1106px;top:345px;width:50px;height:21px;background:#fff;"></div>
<div class="a" style="left:1106px;top:345px;width:49px;height:1px;background:#a0a0a0;"></div>
<div class="a" style="left:1106px;top:345px;width:1px;height:20px;background:#a0a0a0;"></div>
<div class="a" style="left:1107px;top:346px;width:47px;height:1px;background:#696969;"></div>
<div class="a" style="left:1107px;top:346px;width:1px;height:18px;background:#696969;"></div>
<div class="a" style="left:1107px;top:364px;width:48px;height:1px;background:#e3e3e3;"></div>
<div class="a" style="left:1154px;top:346px;width:1px;height:19px;background:#e3e3e3;"></div>
<div class="a" style="left:1137px;top:347px;width:17px;height:17px;background:#f0f0f0;"></div>
<div class="a" style="left:1137px;top:363px;width:17px;height:1px;background:#696969;"></div>
<div class="a" style="left:1153px;top:347px;width:1px;height:17px;background:#696969;"></div>
<div class="a" style="left:1137px;top:362px;width:16px;height:1px;background:#a0a0a0;"></div>
<div class="a" style="left:1152px;top:347px;width:1px;height:16px;background:#a0a0a0;"></div>
<svg class="a" style="left:1141px;top:354px;" width="9" height="5" viewBox="0 0 9 5"><path d="M0 0.3 H8 L4 4.6Z" fill="#000"/></svg>
<div class="t" style="left:1110.50px;top:351px;font-size:10px;color:#000;font-weight:400;">-</div>
<svg class="a" style="left:1160px;top:345px;" width="17" height="21" viewBox="0 0 17 21"><rect width="17" height="21" fill="#5c5c5e"/><rect x="2.5" y="8.5" width="12" height="4" fill="#fff" stroke="#000" stroke-width="0.6"/></svg>
<svg class="a" style="left:1012px;top:372px;" width="21" height="21" viewBox="0 0 21 21"><rect width="21" height="21" fill="#5b6e59"/><g fill="#fff" stroke="#000" stroke-width="1.15" stroke-linejoin="miter" stroke-miterlimit="6">
<path d="M1.7 4.8 H14 V2 L19.7 6.7 L14 11.3 V8.6 H1.7Z"/>
<path d="M1.7 13.3 H14 V10.6 L19.7 15.2 L14 19.8 V17.1 H1.7Z"/></g></svg>
<div class="a" style="left:1036px;top:372px;width:67px;height:21px;background:#fff;"></div>
<div class="a" style="left:1036px;top:372px;width:66px;height:1px;background:#a0a0a0;"></div>
<div class="a" style="left:1036px;top:372px;width:1px;height:20px;background:#a0a0a0;"></div>
<div class="a" style="left:1037px;top:373px;width:64px;height:1px;background:#696969;"></div>
<div class="a" style="left:1037px;top:373px;width:1px;height:18px;background:#696969;"></div>
<div class="a" style="left:1037px;top:391px;width:65px;height:1px;background:#e3e3e3;"></div>
<div class="a" style="left:1101px;top:373px;width:1px;height:19px;background:#e3e3e3;"></div>
<div class="a" style="left:1084px;top:374px;width:17px;height:17px;background:#f0f0f0;"></div>
<div class="a" style="left:1084px;top:390px;width:17px;height:1px;background:#696969;"></div>
<div class="a" style="left:1100px;top:374px;width:1px;height:17px;background:#696969;"></div>
<div class="a" style="left:1084px;top:389px;width:16px;height:1px;background:#a0a0a0;"></div>
<div class="a" style="left:1099px;top:374px;width:1px;height:16px;background:#a0a0a0;"></div>
<svg class="a" style="left:1088px;top:381px;" width="9" height="5" viewBox="0 0 9 5"><path d="M0 0.3 H8 L4 4.6Z" fill="#000"/></svg>
<div class="t" style="left:1040.50px;top:378px;font-size:10px;color:#000;font-weight:400;">-</div>
<div class="a" style="left:1106px;top:372px;width:50px;height:21px;background:#fff;"></div>
<div class="a" style="left:1106px;top:372px;width:49px;height:1px;background:#a0a0a0;"></div>
<div class="a" style="left:1106px;top:372px;width:1px;height:20px;background:#a0a0a0;"></div>
<div class="a" style="left:1107px;top:373px;width:47px;height:1px;background:#696969;"></div>
<div class="a" style="left:1107px;top:373px;width:1px;height:18px;background:#696969;"></div>
<div class="a" style="left:1107px;top:391px;width:48px;height:1px;background:#e3e3e3;"></div>
<div class="a" style="left:1154px;top:373px;width:1px;height:19px;background:#e3e3e3;"></div>
<div class="a" style="left:1137px;top:374px;width:17px;height:17px;background:#f0f0f0;"></div>
<div class="a" style="left:1137px;top:390px;width:17px;height:1px;background:#696969;"></div>
<div class="a" style="left:1153px;top:374px;width:1px;height:17px;background:#696969;"></div>
<div class="a" style="left:1137px;top:389px;width:16px;height:1px;background:#a0a0a0;"></div>
<div class="a" style="left:1152px;top:374px;width:1px;height:16px;background:#a0a0a0;"></div>
<svg class="a" style="left:1141px;top:381px;" width="9" height="5" viewBox="0 0 9 5"><path d="M0 0.3 H8 L4 4.6Z" fill="#000"/></svg>
<div class="t" style="left:1110.50px;top:378px;font-size:10px;color:#000;font-weight:400;">-</div>
<svg class="a" style="left:1160px;top:372px;" width="17" height="21" viewBox="0 0 17 21"><rect width="17" height="21" fill="#5c5c5e"/><rect x="2.5" y="8.5" width="12" height="4" fill="#fff" stroke="#000" stroke-width="0.6"/></svg>
<svg class="a" style="left:1012px;top:399px;" width="21" height="21" viewBox="0 0 21 21"><rect width="21" height="21" fill="#5b6e59"/><g fill="#fff" stroke="#000" stroke-width="1.15" stroke-linejoin="miter" stroke-miterlimit="6">
<path d="M1.7 4.8 H14 V2 L19.7 6.7 L14 11.3 V8.6 H1.7Z"/>
<path d="M1.7 13.3 H14 V10.6 L19.7 15.2 L14 19.8 V17.1 H1.7Z"/></g></svg>
<div class="a" style="left:1036px;top:399px;width:67px;height:21px;background:#fff;"></div>
<div class="a" style="left:1036px;top:399px;width:66px;height:1px;background:#a0a0a0;"></div>
<div class="a" style="left:1036px;top:399px;width:1px;height:20px;background:#a0a0a0;"></div>
<div class="a" style="left:1037px;top:400px;width:64px;height:1px;background:#696969;"></div>
<div class="a" style="left:1037px;top:400px;width:1px;height:18px;background:#696969;"></div>
<div class="a" style="left:1037px;top:418px;width:65px;height:1px;background:#e3e3e3;"></div>
<div class="a" style="left:1101px;top:400px;width:1px;height:19px;background:#e3e3e3;"></div>
<div class="a" style="left:1084px;top:401px;width:17px;height:17px;background:#f0f0f0;"></div>
<div class="a" style="left:1084px;top:417px;width:17px;height:1px;background:#696969;"></div>
<div class="a" style="left:1100px;top:401px;width:1px;height:17px;background:#696969;"></div>
<div class="a" style="left:1084px;top:416px;width:16px;height:1px;background:#a0a0a0;"></div>
<div class="a" style="left:1099px;top:401px;width:1px;height:16px;background:#a0a0a0;"></div>
<svg class="a" style="left:1088px;top:408px;" width="9" height="5" viewBox="0 0 9 5"><path d="M0 0.3 H8 L4 4.6Z" fill="#000"/></svg>
<div class="t" style="left:1040.50px;top:405px;font-size:10px;color:#000;font-weight:400;">-</div>
<div class="a" style="left:1106px;top:399px;width:50px;height:21px;background:#fff;"></div>
<div class="a" style="left:1106px;top:399px;width:49px;height:1px;background:#a0a0a0;"></div>
<div class="a" style="left:1106px;top:399px;width:1px;height:20px;background:#a0a0a0;"></div>
<div class="a" style="left:1107px;top:400px;width:47px;height:1px;background:#696969;"></div>
<div class="a" style="left:1107px;top:400px;width:1px;height:18px;background:#696969;"></div>
<div class="a" style="left:1107px;top:418px;width:48px;height:1px;background:#e3e3e3;"></div>
<div class="a" style="left:1154px;top:400px;width:1px;height:19px;background:#e3e3e3;"></div>
<div class="a" style="left:1137px;top:401px;width:17px;height:17px;background:#f0f0f0;"></div>
<div class="a" style="left:1137px;top:417px;width:17px;height:1px;background:#696969;"></div>
<div class="a" style="left:1153px;top:401px;width:1px;height:17px;background:#696969;"></div>
<div class="a" style="left:1137px;top:416px;width:16px;height:1px;background:#a0a0a0;"></div>
<div class="a" style="left:1152px;top:401px;width:1px;height:16px;background:#a0a0a0;"></div>
<svg class="a" style="left:1141px;top:408px;" width="9" height="5" viewBox="0 0 9 5"><path d="M0 0.3 H8 L4 4.6Z" fill="#000"/></svg>
<div class="t" style="left:1110.50px;top:405px;font-size:10px;color:#000;font-weight:400;">-</div>
<svg class="a" style="left:1160px;top:399px;" width="17" height="21" viewBox="0 0 17 21"><rect width="17" height="21" fill="#5c5c5e"/><rect x="2.5" y="8.5" width="12" height="4" fill="#fff" stroke="#000" stroke-width="0.6"/></svg>
<svg class="a" style="left:1012px;top:426px;" width="21" height="21" viewBox="0 0 21 21"><rect width="21" height="21" fill="#5b6e59"/><g fill="#fff" stroke="#000" stroke-width="1.15" stroke-linejoin="miter" stroke-miterlimit="6">
<path d="M1.7 4.8 H14 V2 L19.7 6.7 L14 11.3 V8.6 H1.7Z"/>
<path d="M1.7 13.3 H14 V10.6 L19.7 15.2 L14 19.8 V17.1 H1.7Z"/></g></svg>
<div class="a" style="left:1036px;top:426px;width:67px;height:21px;background:#fff;"></div>
<div class="a" style="left:1036px;top:426px;width:66px;height:1px;background:#a0a0a0;"></div>
<div class="a" style="left:1036px;top:426px;width:1px;height:20px;background:#a0a0a0;"></div>
<div class="a" style="left:1037px;top:427px;width:64px;height:1px;background:#696969;"></div>
<div class="a" style="left:1037px;top:427px;width:1px;height:18px;background:#696969;"></div>
<div class="a" style="left:1037px;top:445px;width:65px;height:1px;background:#e3e3e3;"></div>
<div class="a" style="left:1101px;top:427px;width:1px;height:19px;background:#e3e3e3;"></div>
<div class="a" style="left:1084px;top:428px;width:17px;height:17px;background:#f0f0f0;"></div>
<div class="a" style="left:1084px;top:444px;width:17px;height:1px;background:#696969;"></div>
<div class="a" style="left:1100px;top:428px;width:1px;height:17px;background:#696969;"></div>
<div class="a" style="left:1084px;top:443px;width:16px;height:1px;background:#a0a0a0;"></div>
<div class="a" style="left:1099px;top:428px;width:1px;height:16px;background:#a0a0a0;"></div>
<svg class="a" style="left:1088px;top:435px;" width="9" height="5" viewBox="0 0 9 5"><path d="M0 0.3 H8 L4 4.6Z" fill="#000"/></svg>
<div class="t" style="left:1040.50px;top:432px;font-size:10px;color:#000;font-weight:400;">-</div>
<div class="a" style="left:1106px;top:426px;width:50px;height:21px;background:#fff;"></div>
<div class="a" style="left:1106px;top:426px;width:49px;height:1px;background:#a0a0a0;"></div>
<div class="a" style="left:1106px;top:426px;width:1px;height:20px;background:#a0a0a0;"></div>
<div class="a" style="left:1107px;top:427px;width:47px;height:1px;background:#696969;"></div>
<div class="a" style="left:1107px;top:427px;width:1px;height:18px;background:#696969;"></div>
<div class="a" style="left:1107px;top:445px;width:48px;height:1px;background:#e3e3e3;"></div>
<div class="a" style="left:1154px;top:427px;width:1px;height:19px;background:#e3e3e3;"></div>
<div class="a" style="left:1137px;top:428px;width:17px;height:17px;background:#f0f0f0;"></div>
<div class="a" style="left:1137px;top:444px;width:17px;height:1px;background:#696969;"></div>
<div class="a" style="left:1153px;top:428px;width:1px;height:17px;background:#696969;"></div>
<div class="a" style="left:1137px;top:443px;width:16px;height:1px;background:#a0a0a0;"></div>
<div class="a" style="left:1152px;top:428px;width:1px;height:16px;background:#a0a0a0;"></div>
<svg class="a" style="left:1141px;top:435px;" width="9" height="5" viewBox="0 0 9 5"><path d="M0 0.3 H8 L4 4.6Z" fill="#000"/></svg>
<div class="t" style="left:1110.50px;top:432px;font-size:10px;color:#000;font-weight:400;">-</div>
<svg class="a" style="left:1160px;top:426px;" width="17" height="21" viewBox="0 0 17 21"><rect width="17" height="21" fill="#5c5c5e"/><rect x="2.5" y="8.5" width="12" height="4" fill="#fff" stroke="#000" stroke-width="0.6"/></svg>
<svg class="a" style="left:1012px;top:453px;" width="21" height="21" viewBox="0 0 21 21"><rect width="21" height="21" fill="#5b6e59"/><g fill="#fff" stroke="#000" stroke-width="1.15" stroke-linejoin="miter" stroke-miterlimit="6">
<path d="M1.7 4.8 H14 V2 L19.7 6.7 L14 11.3 V8.6 H1.7Z"/>
<path d="M1.7 13.3 H14 V10.6 L19.7 15.2 L14 19.8 V17.1 H1.7Z"/></g></svg>
<div class="a" style="left:1036px;top:453px;width:67px;height:21px;background:#fff;"></div>
<div class="a" style="left:1036px;top:453px;width:66px;height:1px;background:#a0a0a0;"></div>
<div class="a" style="left:1036px;top:453px;width:1px;height:20px;background:#a0a0a0;"></div>
<div class="a" style="left:1037px;top:454px;width:64px;height:1px;background:#696969;"></div>
<div class="a" style="left:1037px;top:454px;width:1px;height:18px;background:#696969;"></div>
<div class="a" style="left:1037px;top:472px;width:65px;height:1px;background:#e3e3e3;"></div>
<div class="a" style="left:1101px;top:454px;width:1px;height:19px;background:#e3e3e3;"></div>
<div class="a" style="left:1084px;top:455px;width:17px;height:17px;background:#f0f0f0;"></div>
<div class="a" style="left:1084px;top:471px;width:17px;height:1px;background:#696969;"></div>
<div class="a" style="left:1100px;top:455px;width:1px;height:17px;background:#696969;"></div>
<div class="a" style="left:1084px;top:470px;width:16px;height:1px;background:#a0a0a0;"></div>
<div class="a" style="left:1099px;top:455px;width:1px;height:16px;background:#a0a0a0;"></div>
<svg class="a" style="left:1088px;top:462px;" width="9" height="5" viewBox="0 0 9 5"><path d="M0 0.3 H8 L4 4.6Z" fill="#000"/></svg>
<div class="t" style="left:1040.50px;top:459px;font-size:10px;color:#000;font-weight:400;">-</div>
<div class="a" style="left:1106px;top:453px;width:50px;height:21px;background:#fff;"></div>
<div class="a" style="left:1106px;top:453px;width:49px;height:1px;background:#a0a0a0;"></div>
<div class="a" style="left:1106px;top:453px;width:1px;height:20px;background:#a0a0a0;"></div>
<div class="a" style="left:1107px;top:454px;width:47px;height:1px;background:#696969;"></div>
<div class="a" style="left:1107px;top:454px;width:1px;height:18px;background:#696969;"></div>
<div class="a" style="left:1107px;top:472px;width:48px;height:1px;background:#e3e3e3;"></div>
<div class="a" style="left:1154px;top:454px;width:1px;height:19px;background:#e3e3e3;"></div>
<div class="a" style="left:1137px;top:455px;width:17px;height:17px;background:#f0f0f0;"></div>
<div class="a" style="left:1137px;top:471px;width:17px;height:1px;background:#696969;"></div>
<div class="a" style="left:1153px;top:455px;width:1px;height:17px;background:#696969;"></div>
<div class="a" style="left:1137px;top:470px;width:16px;height:1px;background:#a0a0a0;"></div>
<div class="a" style="left:1152px;top:455px;width:1px;height:16px;background:#a0a0a0;"></div>
<svg class="a" style="left:1141px;top:462px;" width="9" height="5" viewBox="0 0 9 5"><path d="M0 0.3 H8 L4 4.6Z" fill="#000"/></svg>
<div class="t" style="left:1110.50px;top:459px;font-size:10px;color:#000;font-weight:400;">-</div>
<svg class="a" style="left:1160px;top:453px;" width="17" height="21" viewBox="0 0 17 21"><rect width="17" height="21" fill="#5c5c5e"/><rect x="2.5" y="8.5" width="12" height="4" fill="#fff" stroke="#000" stroke-width="0.6"/></svg>
<svg class="a" style="left:1012px;top:480px;" width="21" height="21" viewBox="0 0 21 21"><rect width="21" height="21" fill="#5b6e59"/><g fill="#fff" stroke="#000" stroke-width="1.15" stroke-linejoin="miter" stroke-miterlimit="6">
<path d="M1.7 4.8 H14 V2 L19.7 6.7 L14 11.3 V8.6 H1.7Z"/>
<path d="M1.7 13.3 H14 V10.6 L19.7 15.2 L14 19.8 V17.1 H1.7Z"/></g></svg>
<div class="a" style="left:1036px;top:480px;width:67px;height:21px;background:#fff;"></div>
<div class="a" style="left:1036px;top:480px;width:66px;height:1px;background:#a0a0a0;"></div>
<div class="a" style="left:1036px;top:480px;width:1px;height:20px;background:#a0a0a0;"></div>
<div class="a" style="left:1037px;top:481px;width:64px;height:1px;background:#696969;"></div>
<div class="a" style="left:1037px;top:481px;width:1px;height:18px;background:#696969;"></div>
<div class="a" style="left:1037px;top:499px;width:65px;height:1px;background:#e3e3e3;"></div>
<div class="a" style="left:1101px;top:481px;width:1px;height:19px;background:#e3e3e3;"></div>
<div class="a" style="left:1084px;top:482px;width:17px;height:17px;background:#f0f0f0;"></div>
<div class="a" style="left:1084px;top:498px;width:17px;height:1px;background:#696969;"></div>
<div class="a" style="left:1100px;top:482px;width:1px;height:17px;background:#696969;"></div>
<div class="a" style="left:1084px;top:497px;width:16px;height:1px;background:#a0a0a0;"></div>
<div class="a" style="left:1099px;top:482px;width:1px;height:16px;background:#a0a0a0;"></div>
<svg class="a" style="left:1088px;top:489px;" width="9" height="5" viewBox="0 0 9 5"><path d="M0 0.3 H8 L4 4.6Z" fill="#000"/></svg>
<div class="t" style="left:1040.50px;top:486px;font-size:10px;color:#000;font-weight:400;">-</div>
<div class="a" style="left:1106px;top:480px;width:50px;height:21px;background:#fff;"></div>
<div class="a" style="left:1106px;top:480px;width:49px;height:1px;background:#a0a0a0;"></div>
<div class="a" style="left:1106px;top:480px;width:1px;height:20px;background:#a0a0a0;"></div>
<div class="a" style="left:1107px;top:481px;width:47px;height:1px;background:#696969;"></div>
<div class="a" style="left:1107px;top:481px;width:1px;height:18px;background:#696969;"></div>
<div class="a" style="left:1107px;top:499px;width:48px;height:1px;background:#e3e3e3;"></div>
<div class="a" style="left:1154px;top:481px;width:1px;height:19px;background:#e3e3e3;"></div>
<div class="a" style="left:1137px;top:482px;width:17px;height:17px;background:#f0f0f0;"></div>
<div class="a" style="left:1137px;top:498px;width:17px;height:1px;background:#696969;"></div>
<div class="a" style="left:1153px;top:482px;width:1px;height:17px;background:#696969;"></div>
<div class="a" style="left:1137px;top:497px;width:16px;height:1px;background:#a0a0a0;"></div>
<div class="a" style="left:1152px;top:482px;width:1px;height:16px;background:#a0a0a0;"></div>
<svg class="a" style="left:1141px;top:489px;" width="9" height="5" viewBox="0 0 9 5"><path d="M0 0.3 H8 L4 4.6Z" fill="#000"/></svg>
<div class="t" style="left:1110.50px;top:486px;font-size:10px;color:#000;font-weight:400;">-</div>
<svg class="a" style="left:1160px;top:480px;" width="17" height="21" viewBox="0 0 17 21"><rect width="17" height="21" fill="#5c5c5e"/><rect x="2.5" y="8.5" width="12" height="4" fill="#fff" stroke="#000" stroke-width="0.6"/></svg>
<svg class="a" style="left:1012px;top:507px;" width="21" height="21" viewBox="0 0 21 21"><rect width="21" height="21" fill="#5b6e59"/><g fill="#fff" stroke="#000" stroke-width="1.15" stroke-linejoin="miter" stroke-miterlimit="6">
<path d="M1.7 4.8 H14 V2 L19.7 6.7 L14 11.3 V8.6 H1.7Z"/>
<path d="M1.7 13.3 H14 V10.6 L19.7 15.2 L14 19.8 V17.1 H1.7Z"/></g></svg>
<div class="a" style="left:1036px;top:507px;width:67px;height:21px;background:#fff;"></div>
<div class="a" style="left:1036px;top:507px;width:66px;height:1px;background:#a0a0a0;"></div>
<div class="a" style="left:1036px;top:507px;width:1px;height:20px;background:#a0a0a0;"></div>
<div class="a" style="left:1037px;top:508px;width:64px;height:1px;background:#696969;"></div>
<div class="a" style="left:1037px;top:508px;width:1px;height:18px;background:#696969;"></div>
<div class="a" style="left:1037px;top:526px;width:65px;height:1px;background:#e3e3e3;"></div>
<div class="a" style="left:1101px;top:508px;width:1px;height:19px;background:#e3e3e3;"></div>
<div class="a" style="left:1084px;top:509px;width:17px;height:17px;background:#f0f0f0;"></div>
<div class="a" style="left:1084px;top:525px;width:17px;height:1px;background:#696969;"></div>
<div class="a" style="left:1100px;top:509px;width:1px;height:17px;background:#696969;"></div>
<div class="a" style="left:1084px;top:524px;width:16px;height:1px;background:#a0a0a0;"></div>
<div class="a" style="left:1099px;top:509px;width:1px;height:16px;background:#a0a0a0;"></div>
<svg class="a" style="left:1088px;top:516px;" width="9" height="5" viewBox="0 0 9 5"><path d="M0 0.3 H8 L4 4.6Z" fill="#000"/></svg>
<div class="t" style="left:1040.50px;top:513px;font-size:10px;color:#000;font-weight:400;">-</div>
<div class="a" style="left:1106px;top:507px;width:50px;height:21px;background:#fff;"></div>
<div class="a" style="left:1106px;top:507px;width:49px;height:1px;background:#a0a0a0;"></div>
<div class="a" style="left:1106px;top:507px;width:1px;height:20px;background:#a0a0a0;"></div>
<div class="a" style="left:1107px;top:508px;width:47px;height:1px;background:#696969;"></div>
<div class="a" style="left:1107px;top:508px;width:1px;height:18px;background:#696969;"></div>
<div class="a" style="left:1107px;top:526px;width:48px;height:1px;background:#e3e3e3;"></div>
<div class="a" style="left:1154px;top:508px;width:1px;height:19px;background:#e3e3e3;"></div>
<div class="a" style="left:1137px;top:509px;width:17px;height:17px;background:#f0f0f0;"></div>
<div class="a" style="left:1137px;top:525px;width:17px;height:1px;background:#696969;"></div>
<div class="a" style="left:1153px;top:509px;width:1px;height:17px;background:#696969;"></div>
<div class="a" style="left:1137px;top:524px;width:16px;height:1px;background:#a0a0a0;"></div>
<div class="a" style="left:1152px;top:509px;width:1px;height:16px;background:#a0a0a0;"></div>
<svg class="a" style="left:1141px;top:516px;" width="9" height="5" viewBox="0 0 9 5"><path d="M0 0.3 H8 L4 4.6Z" fill="#000"/></svg>
<div class="t" style="left:1110.50px;top:513px;font-size:10px;color:#000;font-weight:400;">-</div>
<svg class="a" style="left:1160px;top:507px;" width="17" height="21" viewBox="0 0 17 21"><rect width="17" height="21" fill="#5c5c5e"/><rect x="2.5" y="8.5" width="12" height="4" fill="#fff" stroke="#000" stroke-width="0.6"/></svg>
<svg class="a" style="left:1012px;top:534px;" width="21" height="21" viewBox="0 0 21 21"><rect width="21" height="21" fill="#5b6e59"/><g fill="#fff" stroke="#000" stroke-width="1.15" stroke-linejoin="miter" stroke-miterlimit="6">
<path d="M1.7 4.8 H14 V2 L19.7 6.7 L14 11.3 V8.6 H1.7Z"/>
<path d="M1.7 13.3 H14 V10.6 L19.7 15.2 L14 19.8 V17.1 H1.7Z"/></g></svg>
<div class="a" style="left:1036px;top:534px;width:67px;height:21px;background:#fff;"></div>
<div class="a" style="left:1036px;top:534px;width:66px;height:1px;background:#a0a0a0;"></div>
<div class="a" style="left:1036px;top:534px;width:1px;height:20px;background:#a0a0a0;"></div>
<div class="a" style="left:1037px;top:535px;width:64px;height:1px;background:#696969;"></div>
<div class="a" style="left:1037px;top:535px;width:1px;height:18px;background:#696969;"></div>
<div class="a" style="left:1037px;top:553px;width:65px;height:1px;background:#e3e3e3;"></div>
<div class="a" style="left:1101px;top:535px;width:1px;height:19px;background:#e3e3e3;"></div>
<div class="a" style="left:1084px;top:536px;width:17px;height:17px;background:#f0f0f0;"></div>
<div class="a" style="left:1084px;top:552px;width:17px;height:1px;background:#696969;"></div>
<div class="a" style="left:1100px;top:536px;width:1px;height:17px;background:#696969;"></div>
<div class="a" style="left:1084px;top:551px;width:16px;height:1px;background:#a0a0a0;"></div>
<div class="a" style="left:1099px;top:536px;width:1px;height:16px;background:#a0a0a0;"></div>
<svg class="a" style="left:1088px;top:543px;" width="9" height="5" viewBox="0 0 9 5"><path d="M0 0.3 H8 L4 4.6Z" fill="#000"/></svg>
<div class="t" style="left:1040.50px;top:540px;font-size:10px;color:#000;font-weight:400;">-</div>
<div class="a" style="left:1106px;top:534px;width:50px;height:21px;background:#fff;"></div>
<div class="a" style="left:1106px;top:534px;width:49px;height:1px;background:#a0a0a0;"></div>
<div class="a" style="left:1106px;top:534px;width:1px;height:20px;background:#a0a0a0;"></div>
<div class="a" style="left:1107px;top:535px;width:47px;height:1px;background:#696969;"></div>
<div class="a" style="left:1107px;top:535px;width:1px;height:18px;background:#696969;"></div>
<div class="a" style="left:1107px;top:553px;width:48px;height:1px;background:#e3e3e3;"></div>
<div class="a" style="left:1154px;top:535px;width:1px;height:19px;background:#e3e3e3;"></div>
<div class="a" style="left:1137px;top:536px;width:17px;height:17px;background:#f0f0f0;"></div>
<div class="a" style="left:1137px;top:552px;width:17px;height:1px;background:#696969;"></div>
<div class="a" style="left:1153px;top:536px;width:1px;height:17px;background:#696969;"></div>
<div class="a" style="left:1137px;top:551px;width:16px;height:1px;background:#a0a0a0;"></div>
<div class="a" style="left:1152px;top:536px;width:1px;height:16px;background:#a0a0a0;"></div>
<svg class="a" style="left:1141px;top:543px;" width="9" height="5" viewBox="0 0 9 5"><path d="M0 0.3 H8 L4 4.6Z" fill="#000"/></svg>
<div class="t" style="left:1110.50px;top:540px;font-size:10px;color:#000;font-weight:400;">-</div>
<svg class="a" style="left:1160px;top:534px;" width="17" height="21" viewBox="0 0 17 21"><rect width="17" height="21" fill="#5c5c5e"/><rect x="2.5" y="8.5" width="12" height="4" fill="#fff" stroke="#000" stroke-width="0.6"/></svg>
<div class="t" style="left:1018.20px;top:571px;font-size:13px;color:#fff;transform:scaleX(1.1609);-webkit-text-stroke:0.3px #fff;text-shadow:1px 0 #000,-1px 0 #000,0 1px #000,0 -1px #000;">Axis Total =</div>
<div class="t" style="left:1133.61px;top:569px;font-size:16.5px;color:#1ee01e;-webkit-text-stroke:0.1px #1ee01e;">0</div>
<div class="a" style="left:0px;top:641px;width:1225px;height:32px;background:#222125;"></div>
<svg class="a" style="left:28px;top:648px;" width="30" height="25" viewBox="0 0 30 25"><path d="M7.1 6.9 H11.9 V14.9 H13.9 L9.5 22 L5 14.9 H7.1Z" fill="#fff"/><path d="M18.5 6.9 L22.9 13.8 H21 V22 H16 V13.8 H14.1Z" fill="#fff"/></svg>
<div class="t" style="left:58.80px;top:655px;font-size:14.5px;color:#fff;transform:scaleX(0.9532);-webkit-text-stroke:0.3px #fff;">Min/Max Tuning</div>
<div class="a" style="left:217px;top:654px;width:4px;height:16px;background:#fff;"></div>
<div class="a" style="left:224px;top:658px;width:4px;height:9px;background:#fff;"></div>
<div class="a" style="left:231px;top:654px;width:4px;height:16px;background:#fff;"></div>
<div class="t" style="left:243.60px;top:655px;font-size:14.5px;color:#fff;transform:scaleX(0.9513);-webkit-text-stroke:0.3px #fff;">Axis Limiting</div>
<svg class="a" style="left:379px;top:652px;" width="22" height="22" viewBox="0 0 22 22"><circle cx="11" cy="11" r="10.5" fill="#fff"/><path d="M7 17 V5 H12 A4 4 0 0 1 12 13 H10.5 V17Z" fill="#222125"/><rect x="10.3" y="8.2" width="2.2" height="2.2" fill="#fff"/></svg>
<div class="t" style="left:408.20px;top:655px;font-size:14.5px;color:#fff;transform:scaleX(0.9496);-webkit-text-stroke:0.3px #fff;">Parking Location</div>
<svg class="a" style="left:550px;top:648px;" width="40" height="25" viewBox="0 0 40 25"><polygon points="27.74,15.95 23.46,16.58 29.81,23.83 21.21,18.60 18.36,23.44 17.79,18.09 10.21,20.65 16.21,15.23 9.51,10.55 17.31,12.31 15.55,4.51 19.90,11.20 22.36,8.52 21.78,11.64 26.41,6.18 23.07,12.77 28.65,12.19 23.78,14.64" fill="#fff"/></svg>
<div class="t" style="left:586.40px;top:655px;font-size:14.5px;color:#fff;transform:scaleX(0.9541);-webkit-text-stroke:0.3px #fff;">Crash Detection</div>
<div class="t" style="left:801.90px;top:654px;font-size:15.6px;color:#fff;transform:scaleX(0.9297);-webkit-text-stroke:0.3px #fff;">Profile Intensity</div>
<div class="a" style="left:926px;top:660px;width:208px;height:4px;background:#1a96d8;border-radius:2px;"></div>
<svg class="a" style="left:1124px;top:652px;" width="21" height="21" viewBox="0 0 21 21"><circle cx="10.5" cy="10.5" r="10.3" fill="#fb5a0c"/></svg>
<div class="a" style="left:1155px;top:650px;width:48px;height:23px;background:#2a292d;box-sizing:border-box;border:1px solid #6a696e;border-bottom:none;"></div>
<div class="t" style="left:1162.90px;top:652px;font-size:20px;color:#fff;transform:scaleX(0.9353);-webkit-text-stroke:0.1px #fff;">100</div>
</body></html>
